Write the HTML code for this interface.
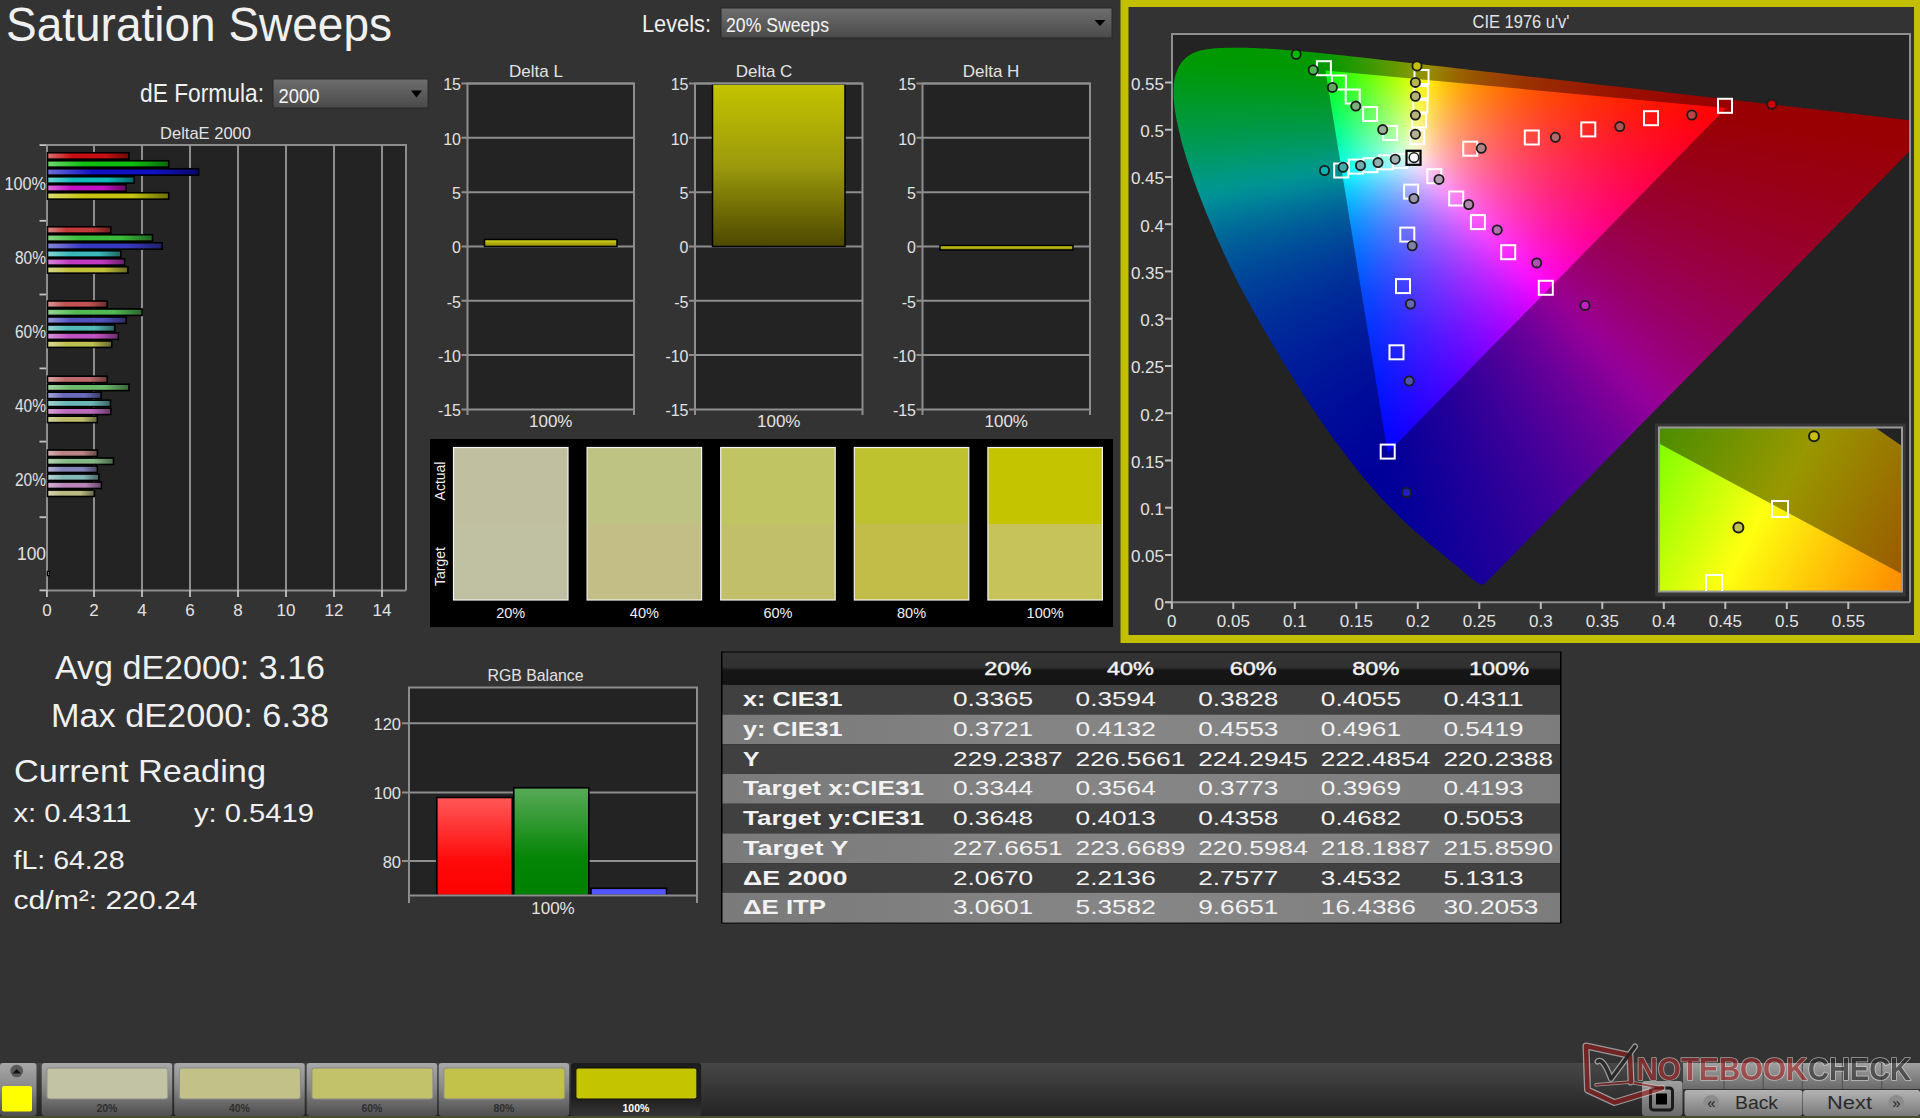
<!DOCTYPE html><html><head><meta charset="utf-8"><title>Saturation Sweeps</title><style>
html,body{margin:0;padding:0;background:#333333;width:1920px;height:1118px;overflow:hidden}
svg{position:absolute;left:0;top:0;font-family:"Liberation Sans", sans-serif}
</style></head><body>
<svg width="1920" height="1118" viewBox="0 0 1920 1118">
<defs>
<linearGradient id="dd" x1="0" y1="0" x2="0" y2="1"><stop offset="0" stop-color="#6e6e6e"/><stop offset="1" stop-color="#4a4a4a"/></linearGradient>
</defs>
<text x="6" y="40.6" font-size="49" fill="#f0f0f0" text-anchor="start" font-weight="normal" textLength="386" lengthAdjust="spacingAndGlyphs">Saturation Sweeps</text>
<text x="642" y="31.5" font-size="24" fill="#f0f0f0" text-anchor="start" font-weight="normal" textLength="69" lengthAdjust="spacingAndGlyphs">Levels:</text>
<rect x="721" y="8" width="391" height="30" fill="url(#dd)" stroke="#282828" stroke-width="1"/>
<text x="726" y="32.3" font-size="20" fill="#f4f4f4" text-anchor="start" font-weight="normal" textLength="103" lengthAdjust="spacingAndGlyphs">20% Sweeps</text>
<path d="M1094.5 20h11l-5.5 6z" fill="#000"/>
<text x="140" y="102.3" font-size="25" fill="#f0f0f0" text-anchor="start" font-weight="normal" textLength="124" lengthAdjust="spacingAndGlyphs">dE Formula:</text>
<rect x="273" y="79" width="155" height="29" fill="url(#dd)" stroke="#282828" stroke-width="1"/>
<text x="278.5" y="102.8" font-size="20" fill="#f4f4f4" text-anchor="start" font-weight="normal" textLength="41" lengthAdjust="spacingAndGlyphs">2000</text>
<path d="M411 90.5h11l-5.5 7z" fill="#000"/>
<text x="205.5" y="139.2" font-size="17" fill="#e2e2e2" text-anchor="middle" font-weight="normal" textLength="91" lengthAdjust="spacingAndGlyphs">DeltaE 2000</text>
<rect x="47" y="145" width="359" height="445" fill="#232323"/>
<line x1="94" y1="145" x2="94" y2="590" stroke="#8e8e8e" stroke-width="2"/>
<line x1="142" y1="145" x2="142" y2="590" stroke="#8e8e8e" stroke-width="2"/>
<line x1="190" y1="145" x2="190" y2="590" stroke="#8e8e8e" stroke-width="2"/>
<line x1="238" y1="145" x2="238" y2="590" stroke="#8e8e8e" stroke-width="2"/>
<line x1="286" y1="145" x2="286" y2="590" stroke="#8e8e8e" stroke-width="2"/>
<line x1="334" y1="145" x2="334" y2="590" stroke="#8e8e8e" stroke-width="2"/>
<line x1="382" y1="145" x2="382" y2="590" stroke="#8e8e8e" stroke-width="2"/>
<line x1="39.5" y1="145.1" x2="47" y2="145.1" stroke="#c4c4c4" stroke-width="1.8"/>
<line x1="39.5" y1="220.8" x2="47" y2="220.8" stroke="#c4c4c4" stroke-width="1.8"/>
<line x1="39.5" y1="294.5" x2="47" y2="294.5" stroke="#c4c4c4" stroke-width="1.8"/>
<line x1="39.5" y1="368.4" x2="47" y2="368.4" stroke="#c4c4c4" stroke-width="1.8"/>
<line x1="39.5" y1="441.6" x2="47" y2="441.6" stroke="#c4c4c4" stroke-width="1.8"/>
<line x1="39.5" y1="517.2" x2="47" y2="517.2" stroke="#c4c4c4" stroke-width="1.8"/>
<line x1="39.5" y1="590.4" x2="47" y2="590.4" stroke="#c4c4c4" stroke-width="1.8"/>
<path d="M47 590.4V145.1H406V590.4" fill="none" stroke="#8e8e8e" stroke-width="2"/>
<line x1="46" y1="590.4" x2="406" y2="590.4" stroke="#8e8e8e" stroke-width="2"/>
<line x1="46.9" y1="590" x2="46.9" y2="597" stroke="#c4c4c4" stroke-width="1.8"/>
<text x="46.9" y="616" font-size="17" fill="#e2e2e2" text-anchor="middle" font-weight="normal">0</text>
<line x1="94" y1="590" x2="94" y2="597" stroke="#c4c4c4" stroke-width="1.8"/>
<text x="94" y="616" font-size="17" fill="#e2e2e2" text-anchor="middle" font-weight="normal">2</text>
<line x1="142" y1="590" x2="142" y2="597" stroke="#c4c4c4" stroke-width="1.8"/>
<text x="142" y="616" font-size="17" fill="#e2e2e2" text-anchor="middle" font-weight="normal">4</text>
<line x1="190" y1="590" x2="190" y2="597" stroke="#c4c4c4" stroke-width="1.8"/>
<text x="190" y="616" font-size="17" fill="#e2e2e2" text-anchor="middle" font-weight="normal">6</text>
<line x1="238" y1="590" x2="238" y2="597" stroke="#c4c4c4" stroke-width="1.8"/>
<text x="238" y="616" font-size="17" fill="#e2e2e2" text-anchor="middle" font-weight="normal">8</text>
<line x1="286" y1="590" x2="286" y2="597" stroke="#c4c4c4" stroke-width="1.8"/>
<text x="286" y="616" font-size="17" fill="#e2e2e2" text-anchor="middle" font-weight="normal">10</text>
<line x1="334" y1="590" x2="334" y2="597" stroke="#c4c4c4" stroke-width="1.8"/>
<text x="334" y="616" font-size="17" fill="#e2e2e2" text-anchor="middle" font-weight="normal">12</text>
<line x1="382" y1="590" x2="382" y2="597" stroke="#c4c4c4" stroke-width="1.8"/>
<text x="382" y="616" font-size="17" fill="#e2e2e2" text-anchor="middle" font-weight="normal">14</text>
<text x="46" y="189.5" font-size="18" fill="#e2e2e2" text-anchor="end" font-weight="normal" textLength="41.5" lengthAdjust="spacingAndGlyphs">100%</text>
<text x="46" y="263.6" font-size="18" fill="#e2e2e2" text-anchor="end" font-weight="normal" textLength="31" lengthAdjust="spacingAndGlyphs">80%</text>
<text x="46" y="337.7" font-size="18" fill="#e2e2e2" text-anchor="end" font-weight="normal" textLength="31" lengthAdjust="spacingAndGlyphs">60%</text>
<text x="46" y="411.79999999999995" font-size="18" fill="#e2e2e2" text-anchor="end" font-weight="normal" textLength="31" lengthAdjust="spacingAndGlyphs">40%</text>
<text x="46" y="485.9" font-size="18" fill="#e2e2e2" text-anchor="end" font-weight="normal" textLength="31" lengthAdjust="spacingAndGlyphs">20%</text>
<text x="46" y="560.0" font-size="18" fill="#e2e2e2" text-anchor="end" font-weight="normal" textLength="29" lengthAdjust="spacingAndGlyphs">100</text>
<rect x="47.5" y="152.75" width="81.4" height="6.4" fill="url(#b0)" stroke="#000" stroke-width="1.6"/>
<rect x="47.5" y="160.75" width="121.2" height="6.4" fill="url(#b1)" stroke="#000" stroke-width="1.6"/>
<rect x="47.5" y="168.75" width="151.2" height="6.4" fill="url(#b2)" stroke="#000" stroke-width="1.6"/>
<rect x="47.5" y="176.75" width="86.6" height="6.4" fill="url(#b3)" stroke="#000" stroke-width="1.6"/>
<rect x="47.5" y="184.75" width="78.7" height="6.4" fill="url(#b4)" stroke="#000" stroke-width="1.6"/>
<rect x="47.5" y="192.75" width="121.2" height="6.4" fill="url(#b5)" stroke="#000" stroke-width="1.6"/>
<rect x="47.5" y="226.75" width="63.2" height="6.4" fill="url(#b6)" stroke="#000" stroke-width="1.6"/>
<rect x="47.5" y="234.75" width="105.0" height="6.4" fill="url(#b7)" stroke="#000" stroke-width="1.6"/>
<rect x="47.5" y="242.75" width="114.7" height="6.4" fill="url(#b8)" stroke="#000" stroke-width="1.6"/>
<rect x="47.5" y="250.75" width="73.3" height="6.4" fill="url(#b9)" stroke="#000" stroke-width="1.6"/>
<rect x="47.5" y="258.75" width="77.1" height="6.4" fill="url(#b10)" stroke="#000" stroke-width="1.6"/>
<rect x="47.5" y="266.75" width="80.4" height="6.4" fill="url(#b11)" stroke="#000" stroke-width="1.6"/>
<rect x="47.5" y="301.00" width="59.7" height="6.4" fill="url(#b12)" stroke="#000" stroke-width="1.6"/>
<rect x="47.5" y="309.00" width="94.6" height="6.4" fill="url(#b13)" stroke="#000" stroke-width="1.6"/>
<rect x="47.5" y="317.00" width="78.7" height="6.4" fill="url(#b14)" stroke="#000" stroke-width="1.6"/>
<rect x="47.5" y="325.00" width="67.2" height="6.4" fill="url(#b15)" stroke="#000" stroke-width="1.6"/>
<rect x="47.5" y="333.00" width="70.9" height="6.4" fill="url(#b16)" stroke="#000" stroke-width="1.6"/>
<rect x="47.5" y="341.00" width="64.2" height="6.4" fill="url(#b17)" stroke="#000" stroke-width="1.6"/>
<rect x="47.5" y="376.20" width="59.7" height="6.4" fill="url(#b18)" stroke="#000" stroke-width="1.6"/>
<rect x="47.5" y="384.20" width="81.5" height="6.4" fill="url(#b19)" stroke="#000" stroke-width="1.6"/>
<rect x="47.5" y="392.20" width="53.6" height="6.4" fill="url(#b20)" stroke="#000" stroke-width="1.6"/>
<rect x="47.5" y="400.20" width="63.0" height="6.4" fill="url(#b21)" stroke="#000" stroke-width="1.6"/>
<rect x="47.5" y="408.20" width="63.3" height="6.4" fill="url(#b22)" stroke="#000" stroke-width="1.6"/>
<rect x="47.5" y="416.20" width="49.9" height="6.4" fill="url(#b23)" stroke="#000" stroke-width="1.6"/>
<rect x="47.5" y="450.05" width="49.9" height="6.4" fill="url(#b24)" stroke="#000" stroke-width="1.6"/>
<rect x="47.5" y="458.05" width="66.0" height="6.4" fill="url(#b25)" stroke="#000" stroke-width="1.6"/>
<rect x="47.5" y="466.05" width="49.9" height="6.4" fill="url(#b26)" stroke="#000" stroke-width="1.6"/>
<rect x="47.5" y="474.05" width="51.4" height="6.4" fill="url(#b27)" stroke="#000" stroke-width="1.6"/>
<rect x="47.5" y="482.05" width="53.9" height="6.4" fill="url(#b28)" stroke="#000" stroke-width="1.6"/>
<rect x="47.5" y="490.05" width="46.9" height="6.4" fill="url(#b29)" stroke="#000" stroke-width="1.6"/>
<defs><linearGradient id="b0" x1="0" x2="1" y1="0" y2="0"><stop offset="0" stop-color="#de6f6f"/><stop offset="0.3" stop-color="#c81010"/><stop offset="0.7" stop-color="#c81010"/><stop offset="1" stop-color="#6e0808"/></linearGradient><linearGradient id="b1" x1="0" x2="1" y1="0" y2="0"><stop offset="0" stop-color="#6fd86f"/><stop offset="0.3" stop-color="#10be10"/><stop offset="0.7" stop-color="#10be10"/><stop offset="1" stop-color="#086808"/></linearGradient><linearGradient id="b2" x1="0" x2="1" y1="0" y2="0"><stop offset="0" stop-color="#6f6fdb"/><stop offset="0.3" stop-color="#1010c4"/><stop offset="0.7" stop-color="#1010c4"/><stop offset="1" stop-color="#08086b"/></linearGradient><linearGradient id="b3" x1="0" x2="1" y1="0" y2="0"><stop offset="0" stop-color="#6fd5d5"/><stop offset="0.3" stop-color="#10baba"/><stop offset="0.7" stop-color="#10baba"/><stop offset="1" stop-color="#086666"/></linearGradient><linearGradient id="b4" x1="0" x2="1" y1="0" y2="0"><stop offset="0" stop-color="#db6fdb"/><stop offset="0.3" stop-color="#c410c4"/><stop offset="0.7" stop-color="#c410c4"/><stop offset="1" stop-color="#6b086b"/></linearGradient><linearGradient id="b5" x1="0" x2="1" y1="0" y2="0"><stop offset="0" stop-color="#dbdb6f"/><stop offset="0.3" stop-color="#c4c410"/><stop offset="0.7" stop-color="#c4c410"/><stop offset="1" stop-color="#6b6b08"/></linearGradient><linearGradient id="b6" x1="0" x2="1" y1="0" y2="0"><stop offset="0" stop-color="#db8888"/><stop offset="0.3" stop-color="#c33939"/><stop offset="0.7" stop-color="#c33939"/><stop offset="1" stop-color="#6b1f1f"/></linearGradient><linearGradient id="b7" x1="0" x2="1" y1="0" y2="0"><stop offset="0" stop-color="#88d688"/><stop offset="0.3" stop-color="#39bc39"/><stop offset="0.7" stop-color="#39bc39"/><stop offset="1" stop-color="#1f671f"/></linearGradient><linearGradient id="b8" x1="0" x2="1" y1="0" y2="0"><stop offset="0" stop-color="#8888d9"/><stop offset="0.3" stop-color="#3939c0"/><stop offset="0.7" stop-color="#3939c0"/><stop offset="1" stop-color="#1f1f69"/></linearGradient><linearGradient id="b9" x1="0" x2="1" y1="0" y2="0"><stop offset="0" stop-color="#88d5d5"/><stop offset="0.3" stop-color="#39b9b9"/><stop offset="0.7" stop-color="#39b9b9"/><stop offset="1" stop-color="#1f6565"/></linearGradient><linearGradient id="b10" x1="0" x2="1" y1="0" y2="0"><stop offset="0" stop-color="#d988d9"/><stop offset="0.3" stop-color="#c039c0"/><stop offset="0.7" stop-color="#c039c0"/><stop offset="1" stop-color="#691f69"/></linearGradient><linearGradient id="b11" x1="0" x2="1" y1="0" y2="0"><stop offset="0" stop-color="#d9d988"/><stop offset="0.3" stop-color="#c0c039"/><stop offset="0.7" stop-color="#c0c039"/><stop offset="1" stop-color="#69691f"/></linearGradient><linearGradient id="b12" x1="0" x2="1" y1="0" y2="0"><stop offset="0" stop-color="#d99797"/><stop offset="0.3" stop-color="#c05252"/><stop offset="0.7" stop-color="#c05252"/><stop offset="1" stop-color="#692d2d"/></linearGradient><linearGradient id="b13" x1="0" x2="1" y1="0" y2="0"><stop offset="0" stop-color="#97d597"/><stop offset="0.3" stop-color="#52ba52"/><stop offset="0.7" stop-color="#52ba52"/><stop offset="1" stop-color="#2d662d"/></linearGradient><linearGradient id="b14" x1="0" x2="1" y1="0" y2="0"><stop offset="0" stop-color="#9797d8"/><stop offset="0.3" stop-color="#5252be"/><stop offset="0.7" stop-color="#5252be"/><stop offset="1" stop-color="#2d2d68"/></linearGradient><linearGradient id="b15" x1="0" x2="1" y1="0" y2="0"><stop offset="0" stop-color="#97d4d4"/><stop offset="0.3" stop-color="#52b8b8"/><stop offset="0.7" stop-color="#52b8b8"/><stop offset="1" stop-color="#2d6565"/></linearGradient><linearGradient id="b16" x1="0" x2="1" y1="0" y2="0"><stop offset="0" stop-color="#d897d8"/><stop offset="0.3" stop-color="#be52be"/><stop offset="0.7" stop-color="#be52be"/><stop offset="1" stop-color="#682d68"/></linearGradient><linearGradient id="b17" x1="0" x2="1" y1="0" y2="0"><stop offset="0" stop-color="#d8d897"/><stop offset="0.3" stop-color="#bebe52"/><stop offset="0.7" stop-color="#bebe52"/><stop offset="1" stop-color="#68682d"/></linearGradient><linearGradient id="b18" x1="0" x2="1" y1="0" y2="0"><stop offset="0" stop-color="#d8a6a6"/><stop offset="0.3" stop-color="#be6b6b"/><stop offset="0.7" stop-color="#be6b6b"/><stop offset="1" stop-color="#683a3a"/></linearGradient><linearGradient id="b19" x1="0" x2="1" y1="0" y2="0"><stop offset="0" stop-color="#a6d5a6"/><stop offset="0.3" stop-color="#6bb96b"/><stop offset="0.7" stop-color="#6bb96b"/><stop offset="1" stop-color="#3a653a"/></linearGradient><linearGradient id="b20" x1="0" x2="1" y1="0" y2="0"><stop offset="0" stop-color="#a6a6d6"/><stop offset="0.3" stop-color="#6b6bbc"/><stop offset="0.7" stop-color="#6b6bbc"/><stop offset="1" stop-color="#3a3a67"/></linearGradient><linearGradient id="b21" x1="0" x2="1" y1="0" y2="0"><stop offset="0" stop-color="#a6d3d3"/><stop offset="0.3" stop-color="#6bb7b7"/><stop offset="0.7" stop-color="#6bb7b7"/><stop offset="1" stop-color="#3a6464"/></linearGradient><linearGradient id="b22" x1="0" x2="1" y1="0" y2="0"><stop offset="0" stop-color="#d6a6d6"/><stop offset="0.3" stop-color="#bc6bbc"/><stop offset="0.7" stop-color="#bc6bbc"/><stop offset="1" stop-color="#673a67"/></linearGradient><linearGradient id="b23" x1="0" x2="1" y1="0" y2="0"><stop offset="0" stop-color="#d6d6a6"/><stop offset="0.3" stop-color="#bcbc6b"/><stop offset="0.7" stop-color="#bcbc6b"/><stop offset="1" stop-color="#67673a"/></linearGradient><linearGradient id="b24" x1="0" x2="1" y1="0" y2="0"><stop offset="0" stop-color="#d6b5b5"/><stop offset="0.3" stop-color="#bb8484"/><stop offset="0.7" stop-color="#bb8484"/><stop offset="1" stop-color="#664848"/></linearGradient><linearGradient id="b25" x1="0" x2="1" y1="0" y2="0"><stop offset="0" stop-color="#b5d4b5"/><stop offset="0.3" stop-color="#84b884"/><stop offset="0.7" stop-color="#84b884"/><stop offset="1" stop-color="#486548"/></linearGradient><linearGradient id="b26" x1="0" x2="1" y1="0" y2="0"><stop offset="0" stop-color="#b5b5d5"/><stop offset="0.3" stop-color="#8484ba"/><stop offset="0.7" stop-color="#8484ba"/><stop offset="1" stop-color="#484866"/></linearGradient><linearGradient id="b27" x1="0" x2="1" y1="0" y2="0"><stop offset="0" stop-color="#b5d3d3"/><stop offset="0.3" stop-color="#84b7b7"/><stop offset="0.7" stop-color="#84b7b7"/><stop offset="1" stop-color="#486464"/></linearGradient><linearGradient id="b28" x1="0" x2="1" y1="0" y2="0"><stop offset="0" stop-color="#d5b5d5"/><stop offset="0.3" stop-color="#ba84ba"/><stop offset="0.7" stop-color="#ba84ba"/><stop offset="1" stop-color="#664866"/></linearGradient><linearGradient id="b29" x1="0" x2="1" y1="0" y2="0"><stop offset="0" stop-color="#d5d5b5"/><stop offset="0.3" stop-color="#baba84"/><stop offset="0.7" stop-color="#baba84"/><stop offset="1" stop-color="#666648"/></linearGradient></defs>
<rect x="47.5" y="571.5" width="1.8" height="4" fill="#ddd" stroke="#000" stroke-width="1.5"/>
<defs><linearGradient id="yc" x1="0" y1="0" x2="0" y2="1"><stop offset="0" stop-color="#c4c400"/><stop offset="0.5" stop-color="#9c9a0c"/><stop offset="1" stop-color="#4c4800"/></linearGradient><linearGradient id="yb" x1="0" y1="0" x2="0" y2="1"><stop offset="0" stop-color="#d8d820"/><stop offset="1" stop-color="#8a8800"/></linearGradient></defs>
<text x="536" y="77" font-size="17" fill="#e2e2e2" text-anchor="middle" font-weight="normal">Delta L</text>
<rect x="467.5" y="83" width="166.5" height="326" fill="#232323"/>
<line x1="461.5" y1="83.5" x2="634" y2="83.5" stroke="#8e8e8e" stroke-width="2"/>
<text x="461.0" y="90.3" font-size="16" fill="#e2e2e2" text-anchor="end" font-weight="normal">15</text>
<line x1="461.5" y1="137.8" x2="634" y2="137.8" stroke="#8e8e8e" stroke-width="2"/>
<text x="461.0" y="144.63" font-size="16" fill="#e2e2e2" text-anchor="end" font-weight="normal">10</text>
<line x1="461.5" y1="192.2" x2="634" y2="192.2" stroke="#8e8e8e" stroke-width="2"/>
<text x="461.0" y="198.96" font-size="16" fill="#e2e2e2" text-anchor="end" font-weight="normal">5</text>
<line x1="461.5" y1="246.5" x2="634" y2="246.5" stroke="#8e8e8e" stroke-width="2"/>
<text x="461.0" y="253.29000000000002" font-size="16" fill="#e2e2e2" text-anchor="end" font-weight="normal">0</text>
<line x1="461.5" y1="300.8" x2="634" y2="300.8" stroke="#8e8e8e" stroke-width="2"/>
<text x="461.0" y="307.62" font-size="16" fill="#e2e2e2" text-anchor="end" font-weight="normal">-5</text>
<line x1="461.5" y1="355.1" x2="634" y2="355.1" stroke="#8e8e8e" stroke-width="2"/>
<text x="461.0" y="361.95" font-size="16" fill="#e2e2e2" text-anchor="end" font-weight="normal">-10</text>
<line x1="461.5" y1="409.5" x2="634" y2="409.5" stroke="#8e8e8e" stroke-width="2"/>
<text x="461.0" y="416.28000000000003" font-size="16" fill="#e2e2e2" text-anchor="end" font-weight="normal">-15</text>
<rect x="484.5" y="239.5" width="132.5" height="7" fill="url(#yb)" stroke="#000" stroke-width="1.5"/>
<path d="M467.5 415V83.5H634 V415" fill="none" stroke="#8e8e8e" stroke-width="2"/>
<text x="550.75" y="427" font-size="17" fill="#e2e2e2" text-anchor="middle" font-weight="normal">100%</text>
<text x="764" y="77" font-size="17" fill="#e2e2e2" text-anchor="middle" font-weight="normal">Delta C</text>
<rect x="695" y="83" width="167.5" height="326" fill="#232323"/>
<line x1="689" y1="83.5" x2="862.5" y2="83.5" stroke="#8e8e8e" stroke-width="2"/>
<text x="688.5" y="90.3" font-size="16" fill="#e2e2e2" text-anchor="end" font-weight="normal">15</text>
<line x1="689" y1="137.8" x2="862.5" y2="137.8" stroke="#8e8e8e" stroke-width="2"/>
<text x="688.5" y="144.63" font-size="16" fill="#e2e2e2" text-anchor="end" font-weight="normal">10</text>
<line x1="689" y1="192.2" x2="862.5" y2="192.2" stroke="#8e8e8e" stroke-width="2"/>
<text x="688.5" y="198.96" font-size="16" fill="#e2e2e2" text-anchor="end" font-weight="normal">5</text>
<line x1="689" y1="246.5" x2="862.5" y2="246.5" stroke="#8e8e8e" stroke-width="2"/>
<text x="688.5" y="253.29000000000002" font-size="16" fill="#e2e2e2" text-anchor="end" font-weight="normal">0</text>
<line x1="689" y1="300.8" x2="862.5" y2="300.8" stroke="#8e8e8e" stroke-width="2"/>
<text x="688.5" y="307.62" font-size="16" fill="#e2e2e2" text-anchor="end" font-weight="normal">-5</text>
<line x1="689" y1="355.1" x2="862.5" y2="355.1" stroke="#8e8e8e" stroke-width="2"/>
<text x="688.5" y="361.95" font-size="16" fill="#e2e2e2" text-anchor="end" font-weight="normal">-10</text>
<line x1="689" y1="409.5" x2="862.5" y2="409.5" stroke="#8e8e8e" stroke-width="2"/>
<text x="688.5" y="416.28000000000003" font-size="16" fill="#e2e2e2" text-anchor="end" font-weight="normal">-15</text>
<rect x="712.5" y="84" width="132.5" height="162.5" fill="url(#yc)" stroke="#000" stroke-width="1.5"/>
<path d="M695 415V83.5H862.5 V415" fill="none" stroke="#8e8e8e" stroke-width="2"/>
<text x="778.75" y="427" font-size="17" fill="#e2e2e2" text-anchor="middle" font-weight="normal">100%</text>
<text x="991" y="77" font-size="17" fill="#e2e2e2" text-anchor="middle" font-weight="normal">Delta H</text>
<rect x="922.5" y="83" width="167.5" height="326" fill="#232323"/>
<line x1="916.5" y1="83.5" x2="1090" y2="83.5" stroke="#8e8e8e" stroke-width="2"/>
<text x="916.0" y="90.3" font-size="16" fill="#e2e2e2" text-anchor="end" font-weight="normal">15</text>
<line x1="916.5" y1="137.8" x2="1090" y2="137.8" stroke="#8e8e8e" stroke-width="2"/>
<text x="916.0" y="144.63" font-size="16" fill="#e2e2e2" text-anchor="end" font-weight="normal">10</text>
<line x1="916.5" y1="192.2" x2="1090" y2="192.2" stroke="#8e8e8e" stroke-width="2"/>
<text x="916.0" y="198.96" font-size="16" fill="#e2e2e2" text-anchor="end" font-weight="normal">5</text>
<line x1="916.5" y1="246.5" x2="1090" y2="246.5" stroke="#8e8e8e" stroke-width="2"/>
<text x="916.0" y="253.29000000000002" font-size="16" fill="#e2e2e2" text-anchor="end" font-weight="normal">0</text>
<line x1="916.5" y1="300.8" x2="1090" y2="300.8" stroke="#8e8e8e" stroke-width="2"/>
<text x="916.0" y="307.62" font-size="16" fill="#e2e2e2" text-anchor="end" font-weight="normal">-5</text>
<line x1="916.5" y1="355.1" x2="1090" y2="355.1" stroke="#8e8e8e" stroke-width="2"/>
<text x="916.0" y="361.95" font-size="16" fill="#e2e2e2" text-anchor="end" font-weight="normal">-10</text>
<line x1="916.5" y1="409.5" x2="1090" y2="409.5" stroke="#8e8e8e" stroke-width="2"/>
<text x="916.0" y="416.28000000000003" font-size="16" fill="#e2e2e2" text-anchor="end" font-weight="normal">-15</text>
<rect x="940" y="245.5" width="133" height="4.5" fill="url(#yb)" stroke="#000" stroke-width="1.5"/>
<path d="M922.5 415V83.5H1090 V415" fill="none" stroke="#8e8e8e" stroke-width="2"/>
<text x="1006.25" y="427" font-size="17" fill="#e2e2e2" text-anchor="middle" font-weight="normal">100%</text>
<rect x="430" y="439" width="683" height="188" fill="#000"/>
<rect x="453.5" y="447.5" width="114.5" height="76.5" fill="#c0c0a0"/>
<rect x="453.5" y="524" width="114.5" height="76" fill="#c0c0a2"/>
<rect x="453.5" y="447.5" width="114.5" height="152.5" fill="none" stroke="#f2f2f2" stroke-width="1.2"/>
<text x="510.75" y="618" font-size="14.5" fill="#f0f0f0" text-anchor="middle" font-weight="normal">20%</text>
<rect x="587.1" y="447.5" width="114.5" height="76.5" fill="#bec283"/>
<rect x="587.1" y="524" width="114.5" height="76" fill="#c2be85"/>
<rect x="587.1" y="447.5" width="114.5" height="152.5" fill="none" stroke="#f2f2f2" stroke-width="1.2"/>
<text x="644.35" y="618" font-size="14.5" fill="#f0f0f0" text-anchor="middle" font-weight="normal">40%</text>
<rect x="720.7" y="447.5" width="114.5" height="76.5" fill="#c0c462"/>
<rect x="720.7" y="524" width="114.5" height="76" fill="#c2bf6a"/>
<rect x="720.7" y="447.5" width="114.5" height="152.5" fill="none" stroke="#f2f2f2" stroke-width="1.2"/>
<text x="777.95" y="618" font-size="14.5" fill="#f0f0f0" text-anchor="middle" font-weight="normal">60%</text>
<rect x="854.3" y="447.5" width="114.5" height="76.5" fill="#bec22e"/>
<rect x="854.3" y="524" width="114.5" height="76" fill="#c2bd48"/>
<rect x="854.3" y="447.5" width="114.5" height="152.5" fill="none" stroke="#f2f2f2" stroke-width="1.2"/>
<text x="911.55" y="618" font-size="14.5" fill="#f0f0f0" text-anchor="middle" font-weight="normal">80%</text>
<rect x="987.9" y="447.5" width="114.5" height="76.5" fill="#c4c500"/>
<rect x="987.9" y="524" width="114.5" height="76" fill="#c6c35a"/>
<rect x="987.9" y="447.5" width="114.5" height="152.5" fill="none" stroke="#f2f2f2" stroke-width="1.2"/>
<text x="1045.15" y="618" font-size="14.5" fill="#f0f0f0" text-anchor="middle" font-weight="normal">100%</text>
<text transform="translate(444.5,481) rotate(-90)" font-size="14" fill="#f0f0f0" text-anchor="middle">Actual</text>
<text transform="translate(444.5,566.5) rotate(-90)" font-size="14" fill="#f0f0f0" text-anchor="middle">Target</text>
<rect x="1120.5" y="0" width="799.5" height="643" fill="#c2bf00"/>
<rect x="1128.5" y="7" width="785.5" height="628" fill="#333333"/>
<text x="1521" y="27.8" font-size="17.8" fill="#e2e2e2" text-anchor="middle" font-weight="normal" textLength="97" lengthAdjust="spacingAndGlyphs">CIE 1976 u'v'</text>
<rect x="1172" y="34" width="738" height="568" fill="#232323"/>
<defs><clipPath id="cl"><path d="M1484.5,583.9 1484.4,583.9 1484.4,583.9 1484.4,583.9 1484.3,583.9 1484.3,583.9 1484.2,584.0 1484.2,584.0 1484.1,584.1 1484.1,584.2 1484.0,584.2 1483.9,584.2 1483.8,584.2 1483.8,584.2 1483.7,584.2 1483.6,584.2 1483.5,584.3 1483.4,584.3 1483.3,584.4 1483.2,584.5 1483.1,584.5 1483.0,584.6 1482.9,584.6 1482.8,584.6 1482.6,584.5 1482.5,584.5 1482.3,584.5 1482.2,584.5 1482.0,584.5 1481.9,584.5 1481.7,584.5 1481.5,584.6 1481.3,584.6 1481.1,584.6 1480.9,584.6 1480.7,584.6 1480.3,584.4 1480.0,584.3 1479.6,584.0 1479.2,583.8 1478.8,583.6 1478.5,583.5 1478.3,583.4 1478.0,583.3 1477.7,583.1 1477.2,582.8 1476.6,582.4 1475.8,581.8 1474.9,581.1 1474.0,580.3 1472.9,579.5 1471.8,578.7 1470.7,577.7 1469.4,576.7 1468.1,575.6 1466.7,574.5 1465.3,573.3 1463.7,571.9 1462.1,570.6 1460.5,569.2 1458.9,567.8 1457.3,566.5 1455.8,565.3 1454.2,564.0 1452.5,562.5 1450.6,560.9 1448.3,559.1 1445.8,557.1 1443.2,554.9 1440.4,552.6 1437.6,550.3 1434.7,547.9 1431.7,545.4 1428.5,542.9 1425.3,540.1 1421.9,537.2 1418.4,534.1 1414.7,530.9 1410.8,527.5 1406.8,523.8 1402.7,519.9 1398.4,515.8 1394.1,511.6 1389.6,507.1 1384.8,502.1 1379.6,496.4 1374.1,490.1 1368.2,483.3 1362.0,475.9 1355.6,468.0 1349.0,459.5 1342.2,450.5 1335.1,440.9 1327.8,430.8 1320.4,420.2 1312.9,409.1 1305.2,397.4 1297.3,385.1 1289.4,372.3 1281.5,359.4 1273.7,346.3 1265.9,333.0 1258.1,319.3 1250.4,305.6 1242.9,291.9 1235.9,278.4 1229.3,265.0 1223.1,251.6 1217.2,238.4 1211.6,225.5 1206.4,213.2 1201.7,201.3 1197.3,189.8 1193.3,178.7 1189.7,168.1 1186.4,158.2 1183.6,148.9 1181.2,140.2 1179.2,132.1 1177.5,124.5 1176.1,117.4 1175.0,110.7 1174.2,104.7 1173.7,99.1 1173.5,93.8 1173.6,88.9 1173.9,84.3 1174.4,80.1 1175.2,76.2 1176.3,72.7 1177.5,69.4 1179.0,66.3 1180.7,63.6 1182.6,61.1 1184.7,58.9 1186.9,57.0 1189.3,55.2 1191.8,53.8 1194.5,52.6 1197.3,51.5 1200.2,50.6 1203.2,49.9 1206.3,49.3 1209.5,48.9 1212.8,48.6 1216.1,48.3 1219.5,48.1 1222.9,47.9 1226.4,47.8 1229.9,47.8 1233.4,47.7 1236.9,47.7 1240.3,47.7 1243.8,47.8 1247.4,47.8 1250.9,47.9 1254.5,48.1 1258.1,48.2 1261.8,48.4 1265.5,48.6 1269.2,48.8 1273.1,49.0 1277.0,49.3 1280.9,49.6 1284.9,49.9 1289.0,50.2 1293.1,50.6 1297.3,50.9 1301.6,51.3 1306.0,51.7 1310.4,52.1 1315.0,52.6 1319.6,53.0 1324.3,53.5 1329.1,54.0 1334.0,54.5 1339.0,55.0 1344.1,55.6 1349.3,56.2 1354.7,56.7 1360.1,57.3 1365.7,57.9 1371.3,58.6 1377.1,59.2 1383.0,59.9 1389.0,60.5 1395.2,61.2 1401.4,61.9 1407.8,62.7 1414.3,63.4 1421.0,64.2 1427.8,64.9 1434.7,65.7 1441.7,66.5 1448.9,67.3 1456.1,68.2 1463.6,69.0 1471.1,69.9 1478.8,70.8 1486.6,71.7 1494.5,72.6 1502.5,73.5 1510.7,74.4 1519.0,75.4 1527.4,76.4 1535.8,77.3 1544.4,78.3 1553.1,79.3 1561.9,80.3 1570.7,81.3 1579.6,82.3 1588.5,83.4 1597.5,84.4 1606.6,85.5 1615.6,86.5 1624.5,87.5 1633.3,88.5 1642.1,89.5 1650.8,90.5 1659.5,91.5 1668.1,92.5 1676.7,93.5 1685.3,94.5 1693.9,95.5 1702.3,96.5 1710.5,97.4 1718.5,98.3 1726.3,99.2 1734.0,100.1 1741.5,100.9 1748.9,101.8 1756.0,102.6 1763.0,103.4 1769.8,104.2 1776.4,104.9 1782.8,105.7 1789.0,106.4 1795.0,107.1 1800.7,107.7 1806.3,108.4 1811.7,109.0 1816.9,109.6 1821.9,110.2 1826.7,110.7 1831.4,111.3 1835.9,111.8 1840.3,112.3 1844.5,112.8 1848.5,113.2 1852.5,113.7 1856.3,114.1 1860.1,114.6 1863.7,115.0 1867.2,115.4 1870.7,115.8 1874.0,116.2 1877.2,116.5 1880.3,116.9 1883.3,117.2 1886.2,117.6 1888.9,117.9 1891.6,118.2 1894.1,118.5 1896.5,118.7 1898.8,119.0 1901.0,119.2 1903.0,119.5 1904.8,119.7 1906.5,119.9 1908.4,120.1 1910.4,120.3 1912.8,120.6 1915.4,120.9 1918.0,121.2 1920.7,121.5 1923.2,121.8 1925.6,122.1 1928.1,122.4 1930.4,122.8 1932.5,123.0 1934.3,123.1 1935.6,122.9 1936.7,122.6 1937.5,122.3 1938.1,121.9 1938.6,121.7Z"/></clipPath><clipPath id="ct"><path d="M1726.2,108.1 1325.5,70.6 1387.6,453.0Z"/></clipPath><clipPath id="cp"><rect x="1172" y="34" width="738" height="568"/></clipPath><filter id="bl" color-interpolation-filters="sRGB" x="-10%" y="-10%" width="120%" height="120%"><feGaussianBlur stdDeviation="10"/></filter><filter id="bl2" color-interpolation-filters="sRGB" x="-10%" y="-10%" width="120%" height="120%"><feGaussianBlur stdDeviation="7"/></filter></defs>
<g clip-path="url(#cp)">
<g clip-path="url(#cl)"><g filter="url(#bl)"><g class="m" transform="translate(1144,6) scale(14)">
<path d="M0 0h1v1h-1z" fill="#090"/><path d="M1 0h1v1h-1z" fill="#090"/><path d="M2 0h1v1h-1z" fill="#090"/><path d="M3 0h1v1h-1z" fill="#090"/><path d="M4 0h1v1h-1z" fill="#090"/><path d="M5 0h1v1h-1z" fill="#090"/><path d="M6 0h1v1h-1z" fill="#090"/><path d="M7 0h1v1h-1z" fill="#090"/><path d="M8 0h1v1h-1z" fill="#090"/><path d="M9 0h1v1h-1z" fill="#090"/><path d="M10 0h1v1h-1z" fill="#090"/><path d="M11 0h1v1h-1z" fill="#090"/><path d="M12 0h1v1h-1z" fill="#039900"/><path d="M13 0h1v1h-1z" fill="#129900"/><path d="M14 0h1v1h-1z" fill="#239900"/><path d="M15 0h1v1h-1z" fill="#349900"/><path d="M0 1h1v1h-1z" fill="#090"/><path d="M1 1h1v1h-1z" fill="#090"/><path d="M2 1h1v1h-1z" fill="#090"/><path d="M3 1h1v1h-1z" fill="#090"/><path d="M4 1h1v1h-1z" fill="#090"/><path d="M5 1h1v1h-1z" fill="#090"/><path d="M6 1h1v1h-1z" fill="#090"/><path d="M7 1h1v1h-1z" fill="#090"/><path d="M8 1h1v1h-1z" fill="#090"/><path d="M9 1h1v1h-1z" fill="#090"/><path d="M10 1h1v1h-1z" fill="#090"/><path d="M11 1h1v1h-1z" fill="#090"/><path d="M12 1h1v1h-1z" fill="#019900"/><path d="M13 1h1v1h-1z" fill="#109900"/><path d="M14 1h1v1h-1z" fill="#219900"/><path d="M15 1h1v1h-1z" fill="#390"/><path d="M16 1h1v1h-1z" fill="#469900"/><path d="M17 1h1v1h-1z" fill="#5a9900"/><path d="M18 1h1v1h-1z" fill="#6f9900"/><path d="M19 1h1v1h-1z" fill="#869900"/><path d="M20 1h1v1h-1z" fill="#999300"/><path d="M21 1h1v1h-1z" fill="#997e00"/><path d="M22 1h1v1h-1z" fill="#996d00"/><path d="M23 1h1v1h-1z" fill="#995f00"/><path d="M24 1h1v1h-1z" fill="#995400"/><path d="M0 2h1v1h-1z" fill="#090"/><path d="M1 2h1v1h-1z" fill="#090"/><path d="M2 2h1v1h-1z" fill="#090"/><path d="M3 2h1v1h-1z" fill="#090"/><path d="M4 2h1v1h-1z" fill="#090"/><path d="M5 2h1v1h-1z" fill="#090"/><path d="M6 2h1v1h-1z" fill="#090"/><path d="M7 2h1v1h-1z" fill="#090"/><path d="M8 2h1v1h-1z" fill="#090"/><path d="M9 2h1v1h-1z" fill="#090"/><path d="M10 2h1v1h-1z" fill="#090"/><path d="M11 2h1v1h-1z" fill="#090"/><path d="M12 2h1v1h-1z" fill="#090"/><path d="M13 2h1v1h-1z" fill="#0e9900"/><path d="M14 2h1v1h-1z" fill="#1f9900"/><path d="M15 2h1v1h-1z" fill="#329900"/><path d="M16 2h1v1h-1z" fill="#459900"/><path d="M17 2h1v1h-1z" fill="#5a9900"/><path d="M18 2h1v1h-1z" fill="#709900"/><path d="M19 2h1v1h-1z" fill="#890"/><path d="M20 2h1v1h-1z" fill="#999100"/><path d="M21 2h1v1h-1z" fill="#997b00"/><path d="M22 2h1v1h-1z" fill="#996a00"/><path d="M23 2h1v1h-1z" fill="#995d00"/><path d="M24 2h1v1h-1z" fill="#995100"/><path d="M25 2h1v1h-1z" fill="#994700"/><path d="M26 2h1v1h-1z" fill="#993f00"/><path d="M27 2h1v1h-1z" fill="#993800"/><path d="M28 2h1v1h-1z" fill="#993100"/><path d="M29 2h1v1h-1z" fill="#992c00"/><path d="M30 2h1v1h-1z" fill="#992700"/><path d="M31 2h1v1h-1z" fill="#992300"/><path d="M32 2h1v1h-1z" fill="#991f00"/><path d="M0 3h1v1h-1z" fill="#009901"/><path d="M1 3h1v1h-1z" fill="#090"/><path d="M2 3h1v1h-1z" fill="#090"/><path d="M3 3h1v1h-1z" fill="#090"/><path d="M4 3h1v1h-1z" fill="#090"/><path d="M5 3h1v1h-1z" fill="#090"/><path d="M6 3h1v1h-1z" fill="#090"/><path d="M7 3h1v1h-1z" fill="#090"/><path d="M8 3h1v1h-1z" fill="#090"/><path d="M9 3h1v1h-1z" fill="#090"/><path d="M10 3h1v1h-1z" fill="#090"/><path d="M11 3h1v1h-1z" fill="#090"/><path d="M12 3h1v1h-1z" fill="#090"/><path d="M13 3h1v1h-1z" fill="#0c9900"/><path d="M14 3h1v1h-1z" fill="#1d9900"/><path d="M15 3h1v1h-1z" fill="#309900"/><path d="M16 3h1v1h-1z" fill="#490"/><path d="M17 3h1v1h-1z" fill="#5a9900"/><path d="M18 3h1v1h-1z" fill="#719900"/><path d="M19 3h1v1h-1z" fill="#8a9900"/><path d="M20 3h1v1h-1z" fill="#998e00"/><path d="M21 3h1v1h-1z" fill="#997900"/><path d="M22 3h1v1h-1z" fill="#996800"/><path d="M23 3h1v1h-1z" fill="#995a00"/><path d="M24 3h1v1h-1z" fill="#994e00"/><path d="M25 3h1v1h-1z" fill="#994500"/><path d="M26 3h1v1h-1z" fill="#993d00"/><path d="M27 3h1v1h-1z" fill="#993500"/><path d="M28 3h1v1h-1z" fill="#992f00"/><path d="M29 3h1v1h-1z" fill="#992a00"/><path d="M30 3h1v1h-1z" fill="#992500"/><path d="M31 3h1v1h-1z" fill="#992100"/><path d="M32 3h1v1h-1z" fill="#991d00"/><path d="M33 3h1v1h-1z" fill="#991900"/><path d="M34 3h1v1h-1z" fill="#991600"/><path d="M35 3h1v1h-1z" fill="#991300"/><path d="M36 3h1v1h-1z" fill="#991000"/><path d="M37 3h1v1h-1z" fill="#990e00"/><path d="M38 3h1v1h-1z" fill="#990c00"/><path d="M39 3h1v1h-1z" fill="#990a00"/><path d="M40 3h1v1h-1z" fill="#990800"/><path d="M41 3h1v1h-1z" fill="#990600"/><path d="M0 4h1v1h-1z" fill="#00990c"/><path d="M1 4h1v1h-1z" fill="#00990b"/><path d="M2 4h1v1h-1z" fill="#00990a"/><path d="M3 4h1v1h-1z" fill="#009909"/><path d="M4 4h1v1h-1z" fill="#009908"/><path d="M5 4h1v1h-1z" fill="#009907"/><path d="M6 4h1v1h-1z" fill="#009906"/><path d="M7 4h1v1h-1z" fill="#009905"/><path d="M8 4h1v1h-1z" fill="#009904"/><path d="M9 4h1v1h-1z" fill="#009903"/><path d="M10 4h1v1h-1z" fill="#009902"/><path d="M11 4h1v1h-1z" fill="#090"/><path d="M12 4h1v1h-1z" fill="#090"/><path d="M13 4h1v1h-1z" fill="#099900"/><path d="M14 4h1v1h-1z" fill="#1c9900"/><path d="M15 4h1v1h-1z" fill="#2f9900"/><path d="M16 4h1v1h-1z" fill="#490"/><path d="M17 4h1v1h-1z" fill="#5a9900"/><path d="M18 4h1v1h-1z" fill="#729900"/><path d="M19 4h1v1h-1z" fill="#8c9900"/><path d="M20 4h1v1h-1z" fill="#998b00"/><path d="M21 4h1v1h-1z" fill="#997600"/><path d="M22 4h1v1h-1z" fill="#996500"/><path d="M23 4h1v1h-1z" fill="#995700"/><path d="M24 4h1v1h-1z" fill="#994c00"/><path d="M25 4h1v1h-1z" fill="#994200"/><path d="M26 4h1v1h-1z" fill="#993a00"/><path d="M27 4h1v1h-1z" fill="#930"/><path d="M28 4h1v1h-1z" fill="#992d00"/><path d="M29 4h1v1h-1z" fill="#992800"/><path d="M30 4h1v1h-1z" fill="#992300"/><path d="M31 4h1v1h-1z" fill="#991f00"/><path d="M32 4h1v1h-1z" fill="#991b00"/><path d="M33 4h1v1h-1z" fill="#991700"/><path d="M34 4h1v1h-1z" fill="#991400"/><path d="M35 4h1v1h-1z" fill="#910"/><path d="M36 4h1v1h-1z" fill="#990f00"/><path d="M37 4h1v1h-1z" fill="#990c00"/><path d="M38 4h1v1h-1z" fill="#990a00"/><path d="M39 4h1v1h-1z" fill="#990800"/><path d="M40 4h1v1h-1z" fill="#990600"/><path d="M41 4h1v1h-1z" fill="#990400"/><path d="M42 4h1v1h-1z" fill="#990300"/><path d="M43 4h1v1h-1z" fill="#990100"/><path d="M44 4h1v1h-1z" fill="#900"/><path d="M45 4h1v1h-1z" fill="#900"/><path d="M46 4h1v1h-1z" fill="#900"/><path d="M47 4h1v1h-1z" fill="#900"/><path d="M48 4h1v1h-1z" fill="#900"/><path d="M49 4h1v1h-1z" fill="#900"/><path d="M50 4h1v1h-1z" fill="#900"/><path d="M0 5h1v1h-1z" fill="#009918"/><path d="M1 5h1v1h-1z" fill="#009917"/><path d="M2 5h1v1h-1z" fill="#009917"/><path d="M3 5h1v1h-1z" fill="#009916"/><path d="M4 5h1v1h-1z" fill="#009915"/><path d="M5 5h1v1h-1z" fill="#009915"/><path d="M6 5h1v1h-1z" fill="#009914"/><path d="M7 5h1v1h-1z" fill="#009913"/><path d="M8 5h1v1h-1z" fill="#009912"/><path d="M9 5h1v1h-1z" fill="#009912"/><path d="M10 5h1v1h-1z" fill="#091"/><path d="M11 5h1v1h-1z" fill="#009910"/><path d="M12 5h1v1h-1z" fill="#00990f"/><path d="M13 5h1v1h-1z" fill="#07990e"/><path d="M14 5h1v1h-1z" fill="#1a990d"/><path d="M15 5h1v1h-1z" fill="#2d990b"/><path d="M16 5h1v1h-1z" fill="#43990a"/><path d="M17 5h1v1h-1z" fill="#5a9909"/><path d="M18 5h1v1h-1z" fill="#739907"/><path d="M19 5h1v1h-1z" fill="#8e9906"/><path d="M20 5h1v1h-1z" fill="#998903"/><path d="M21 5h1v1h-1z" fill="#997301"/><path d="M22 5h1v1h-1z" fill="#996200"/><path d="M23 5h1v1h-1z" fill="#995400"/><path d="M24 5h1v1h-1z" fill="#994900"/><path d="M25 5h1v1h-1z" fill="#994000"/><path d="M26 5h1v1h-1z" fill="#993800"/><path d="M27 5h1v1h-1z" fill="#993100"/><path d="M28 5h1v1h-1z" fill="#992b00"/><path d="M29 5h1v1h-1z" fill="#992500"/><path d="M30 5h1v1h-1z" fill="#992100"/><path d="M31 5h1v1h-1z" fill="#991c00"/><path d="M32 5h1v1h-1z" fill="#991900"/><path d="M33 5h1v1h-1z" fill="#991500"/><path d="M34 5h1v1h-1z" fill="#991200"/><path d="M35 5h1v1h-1z" fill="#990f00"/><path d="M36 5h1v1h-1z" fill="#990d00"/><path d="M37 5h1v1h-1z" fill="#990b00"/><path d="M38 5h1v1h-1z" fill="#990800"/><path d="M39 5h1v1h-1z" fill="#990600"/><path d="M40 5h1v1h-1z" fill="#990500"/><path d="M41 5h1v1h-1z" fill="#990300"/><path d="M42 5h1v1h-1z" fill="#990100"/><path d="M43 5h1v1h-1z" fill="#900"/><path d="M44 5h1v1h-1z" fill="#900"/><path d="M45 5h1v1h-1z" fill="#900"/><path d="M46 5h1v1h-1z" fill="#900"/><path d="M47 5h1v1h-1z" fill="#900"/><path d="M48 5h1v1h-1z" fill="#900"/><path d="M49 5h1v1h-1z" fill="#900"/><path d="M50 5h1v1h-1z" fill="#900"/><path d="M51 5h1v1h-1z" fill="#900"/><path d="M52 5h1v1h-1z" fill="#900"/><path d="M53 5h1v1h-1z" fill="#900"/><path d="M54 5h1v1h-1z" fill="#900"/><path d="M55 5h1v1h-1z" fill="#900"/><path d="M56 5h1v1h-1z" fill="#900"/><path d="M57 5h1v1h-1z" fill="#900"/><path d="M0 6h1v1h-1z" fill="#009924"/><path d="M1 6h1v1h-1z" fill="#009924"/><path d="M2 6h1v1h-1z" fill="#009923"/><path d="M3 6h1v1h-1z" fill="#009923"/><path d="M4 6h1v1h-1z" fill="#009923"/><path d="M5 6h1v1h-1z" fill="#009923"/><path d="M6 6h1v1h-1z" fill="#092"/><path d="M7 6h1v1h-1z" fill="#092"/><path d="M8 6h1v1h-1z" fill="#092"/><path d="M9 6h1v1h-1z" fill="#009921"/><path d="M10 6h1v1h-1z" fill="#009921"/><path d="M11 6h1v1h-1z" fill="#009920"/><path d="M12 6h1v1h-1z" fill="#009920"/><path d="M13 6h1v1h-1z" fill="#04991f"/><path d="M14 6h1v1h-1z" fill="#17991f"/><path d="M15 6h1v1h-1z" fill="#2c991e"/><path d="M16 6h1v1h-1z" fill="#42991e"/><path d="M17 6h1v1h-1z" fill="#5a991d"/><path d="M18 6h1v1h-1z" fill="#74991c"/><path d="M19 6h1v1h-1z" fill="#90991c"/><path d="M20 6h1v1h-1z" fill="#998617"/><path d="M21 6h1v1h-1z" fill="#997013"/><path d="M22 6h1v1h-1z" fill="#995f0f"/><path d="M23 6h1v1h-1z" fill="#99510d"/><path d="M24 6h1v1h-1z" fill="#99460a"/><path d="M25 6h1v1h-1z" fill="#993d08"/><path d="M26 6h1v1h-1z" fill="#993507"/><path d="M27 6h1v1h-1z" fill="#992e05"/><path d="M28 6h1v1h-1z" fill="#992804"/><path d="M29 6h1v1h-1z" fill="#992303"/><path d="M30 6h1v1h-1z" fill="#991e02"/><path d="M31 6h1v1h-1z" fill="#991a01"/><path d="M32 6h1v1h-1z" fill="#991700"/><path d="M33 6h1v1h-1z" fill="#991300"/><path d="M34 6h1v1h-1z" fill="#991000"/><path d="M35 6h1v1h-1z" fill="#990e00"/><path d="M36 6h1v1h-1z" fill="#990b00"/><path d="M37 6h1v1h-1z" fill="#990900"/><path d="M38 6h1v1h-1z" fill="#990700"/><path d="M39 6h1v1h-1z" fill="#990500"/><path d="M40 6h1v1h-1z" fill="#990300"/><path d="M41 6h1v1h-1z" fill="#990100"/><path d="M42 6h1v1h-1z" fill="#900"/><path d="M43 6h1v1h-1z" fill="#900"/><path d="M44 6h1v1h-1z" fill="#900"/><path d="M45 6h1v1h-1z" fill="#900"/><path d="M46 6h1v1h-1z" fill="#900"/><path d="M47 6h1v1h-1z" fill="#900"/><path d="M48 6h1v1h-1z" fill="#900"/><path d="M49 6h1v1h-1z" fill="#900"/><path d="M50 6h1v1h-1z" fill="#900"/><path d="M51 6h1v1h-1z" fill="#900"/><path d="M52 6h1v1h-1z" fill="#900"/><path d="M53 6h1v1h-1z" fill="#900"/><path d="M54 6h1v1h-1z" fill="#900"/><path d="M55 6h1v1h-1z" fill="#900"/><path d="M56 6h1v1h-1z" fill="#900"/><path d="M57 6h1v1h-1z" fill="#900"/><path d="M0 7h1v1h-1z" fill="#009931"/><path d="M1 7h1v1h-1z" fill="#009931"/><path d="M2 7h1v1h-1z" fill="#009931"/><path d="M3 7h1v1h-1z" fill="#009931"/><path d="M4 7h1v1h-1z" fill="#009931"/><path d="M5 7h1v1h-1z" fill="#009931"/><path d="M6 7h1v1h-1z" fill="#009931"/><path d="M7 7h1v1h-1z" fill="#009932"/><path d="M8 7h1v1h-1z" fill="#009932"/><path d="M9 7h1v1h-1z" fill="#009932"/><path d="M10 7h1v1h-1z" fill="#009932"/><path d="M11 7h1v1h-1z" fill="#009932"/><path d="M12 7h1v1h-1z" fill="#009932"/><path d="M13 7h1v1h-1z" fill="#019932"/><path d="M14 7h1v1h-1z" fill="#159932"/><path d="M15 7h1v1h-1z" fill="#2a9933"/><path d="M16 7h1v1h-1z" fill="#419933"/><path d="M17 7h1v1h-1z" fill="#5a9933"/><path d="M18 7h1v1h-1z" fill="#759933"/><path d="M19 7h1v1h-1z" fill="#939933"/><path d="M20 7h1v1h-1z" fill="#99832c"/><path d="M21 7h1v1h-1z" fill="#996d25"/><path d="M22 7h1v1h-1z" fill="#995c1f"/><path d="M23 7h1v1h-1z" fill="#994e1b"/><path d="M24 7h1v1h-1z" fill="#994317"/><path d="M25 7h1v1h-1z" fill="#993a14"/><path d="M26 7h1v1h-1z" fill="#993212"/><path d="M27 7h1v1h-1z" fill="#992c0f"/><path d="M28 7h1v1h-1z" fill="#99260e"/><path d="M29 7h1v1h-1z" fill="#99210c"/><path d="M30 7h1v1h-1z" fill="#991c0a"/><path d="M31 7h1v1h-1z" fill="#991809"/><path d="M32 7h1v1h-1z" fill="#991508"/><path d="M33 7h1v1h-1z" fill="#991107"/><path d="M34 7h1v1h-1z" fill="#990e06"/><path d="M35 7h1v1h-1z" fill="#990c05"/><path d="M36 7h1v1h-1z" fill="#990904"/><path d="M37 7h1v1h-1z" fill="#990704"/><path d="M38 7h1v1h-1z" fill="#990503"/><path d="M39 7h1v1h-1z" fill="#990302"/><path d="M40 7h1v1h-1z" fill="#990102"/><path d="M41 7h1v1h-1z" fill="#990001"/><path d="M42 7h1v1h-1z" fill="#990001"/><path d="M43 7h1v1h-1z" fill="#900"/><path d="M44 7h1v1h-1z" fill="#900"/><path d="M45 7h1v1h-1z" fill="#900"/><path d="M46 7h1v1h-1z" fill="#900"/><path d="M47 7h1v1h-1z" fill="#900"/><path d="M48 7h1v1h-1z" fill="#900"/><path d="M49 7h1v1h-1z" fill="#900"/><path d="M50 7h1v1h-1z" fill="#900"/><path d="M51 7h1v1h-1z" fill="#900"/><path d="M52 7h1v1h-1z" fill="#900"/><path d="M53 7h1v1h-1z" fill="#900"/><path d="M54 7h1v1h-1z" fill="#900"/><path d="M55 7h1v1h-1z" fill="#900"/><path d="M56 7h1v1h-1z" fill="#900"/><path d="M57 7h1v1h-1z" fill="#900"/><path d="M0 8h1v1h-1z" fill="#00993f"/><path d="M1 8h1v1h-1z" fill="#00993f"/><path d="M2 8h1v1h-1z" fill="#00993f"/><path d="M3 8h1v1h-1z" fill="#009940"/><path d="M4 8h1v1h-1z" fill="#009940"/><path d="M5 8h1v1h-1z" fill="#009941"/><path d="M6 8h1v1h-1z" fill="#009941"/><path d="M7 8h1v1h-1z" fill="#009942"/><path d="M8 8h1v1h-1z" fill="#009943"/><path d="M9 8h1v1h-1z" fill="#009943"/><path d="M10 8h1v1h-1z" fill="#094"/><path d="M11 8h1v1h-1z" fill="#009945"/><path d="M12 8h1v1h-1z" fill="#009946"/><path d="M13 8h1v1h-1z" fill="#009946"/><path d="M14 8h1v1h-1z" fill="#129947"/><path d="M15 8h1v1h-1z" fill="#299948"/><path d="M16 8h1v1h-1z" fill="#409949"/><path d="M17 8h1v1h-1z" fill="#5a994b"/><path d="M18 8h1v1h-1z" fill="#77994c"/><path d="M19 8h1v1h-1z" fill="#96994d"/><path d="M20 8h1v1h-1z" fill="#997f42"/><path d="M21 8h1v1h-1z" fill="#996a38"/><path d="M22 8h1v1h-1z" fill="#995930"/><path d="M23 8h1v1h-1z" fill="#994b2a"/><path d="M24 8h1v1h-1z" fill="#994025"/><path d="M25 8h1v1h-1z" fill="#993720"/><path d="M26 8h1v1h-1z" fill="#99301d"/><path d="M27 8h1v1h-1z" fill="#99291a"/><path d="M28 8h1v1h-1z" fill="#992317"/><path d="M29 8h1v1h-1z" fill="#991e15"/><path d="M30 8h1v1h-1z" fill="#991a13"/><path d="M31 8h1v1h-1z" fill="#991611"/><path d="M32 8h1v1h-1z" fill="#991210"/><path d="M33 8h1v1h-1z" fill="#990f0e"/><path d="M34 8h1v1h-1z" fill="#990c0d"/><path d="M35 8h1v1h-1z" fill="#990a0c"/><path d="M36 8h1v1h-1z" fill="#99080a"/><path d="M37 8h1v1h-1z" fill="#990509"/><path d="M38 8h1v1h-1z" fill="#990309"/><path d="M39 8h1v1h-1z" fill="#990208"/><path d="M40 8h1v1h-1z" fill="#990007"/><path d="M41 8h1v1h-1z" fill="#990006"/><path d="M42 8h1v1h-1z" fill="#990006"/><path d="M43 8h1v1h-1z" fill="#990005"/><path d="M44 8h1v1h-1z" fill="#990004"/><path d="M45 8h1v1h-1z" fill="#990004"/><path d="M46 8h1v1h-1z" fill="#990003"/><path d="M47 8h1v1h-1z" fill="#990003"/><path d="M48 8h1v1h-1z" fill="#990002"/><path d="M49 8h1v1h-1z" fill="#990002"/><path d="M50 8h1v1h-1z" fill="#990001"/><path d="M51 8h1v1h-1z" fill="#990001"/><path d="M52 8h1v1h-1z" fill="#990001"/><path d="M53 8h1v1h-1z" fill="#900"/><path d="M54 8h1v1h-1z" fill="#900"/><path d="M55 8h1v1h-1z" fill="#900"/><path d="M56 8h1v1h-1z" fill="#900"/><path d="M57 8h1v1h-1z" fill="#900"/><path d="M0 9h1v1h-1z" fill="#00994d"/><path d="M1 9h1v1h-1z" fill="#00994e"/><path d="M2 9h1v1h-1z" fill="#00994e"/><path d="M3 9h1v1h-1z" fill="#00994f"/><path d="M4 9h1v1h-1z" fill="#009950"/><path d="M5 9h1v1h-1z" fill="#009951"/><path d="M6 9h1v1h-1z" fill="#009952"/><path d="M7 9h1v1h-1z" fill="#009954"/><path d="M8 9h1v1h-1z" fill="#095"/><path d="M9 9h1v1h-1z" fill="#009956"/><path d="M10 9h1v1h-1z" fill="#009957"/><path d="M11 9h1v1h-1z" fill="#009959"/><path d="M12 9h1v1h-1z" fill="#00995a"/><path d="M13 9h1v1h-1z" fill="#00995c"/><path d="M14 9h1v1h-1z" fill="#10995e"/><path d="M15 9h1v1h-1z" fill="#279960"/><path d="M16 9h1v1h-1z" fill="#3f9962"/><path d="M17 9h1v1h-1z" fill="#5a9965"/><path d="M18 9h1v1h-1z" fill="#789967"/><path d="M19 9h1v1h-1z" fill="#99996a"/><path d="M20 9h1v1h-1z" fill="#997c58"/><path d="M21 9h1v1h-1z" fill="#99664b"/><path d="M22 9h1v1h-1z" fill="#995541"/><path d="M23 9h1v1h-1z" fill="#994839"/><path d="M24 9h1v1h-1z" fill="#993d33"/><path d="M25 9h1v1h-1z" fill="#99342d"/><path d="M26 9h1v1h-1z" fill="#992d29"/><path d="M27 9h1v1h-1z" fill="#992625"/><path d="M28 9h1v1h-1z" fill="#992121"/><path d="M29 9h1v1h-1z" fill="#991c1e"/><path d="M30 9h1v1h-1z" fill="#99181c"/><path d="M31 9h1v1h-1z" fill="#991419"/><path d="M32 9h1v1h-1z" fill="#991017"/><path d="M33 9h1v1h-1z" fill="#990d15"/><path d="M34 9h1v1h-1z" fill="#990a14"/><path d="M35 9h1v1h-1z" fill="#990812"/><path d="M36 9h1v1h-1z" fill="#990611"/><path d="M37 9h1v1h-1z" fill="#990410"/><path d="M38 9h1v1h-1z" fill="#99020e"/><path d="M39 9h1v1h-1z" fill="#99000d"/><path d="M40 9h1v1h-1z" fill="#99000c"/><path d="M41 9h1v1h-1z" fill="#99000b"/><path d="M42 9h1v1h-1z" fill="#99000b"/><path d="M43 9h1v1h-1z" fill="#99000a"/><path d="M44 9h1v1h-1z" fill="#990009"/><path d="M45 9h1v1h-1z" fill="#990008"/><path d="M46 9h1v1h-1z" fill="#990008"/><path d="M47 9h1v1h-1z" fill="#990007"/><path d="M48 9h1v1h-1z" fill="#990006"/><path d="M49 9h1v1h-1z" fill="#990006"/><path d="M50 9h1v1h-1z" fill="#990005"/><path d="M51 9h1v1h-1z" fill="#990005"/><path d="M52 9h1v1h-1z" fill="#990004"/><path d="M53 9h1v1h-1z" fill="#990004"/><path d="M54 9h1v1h-1z" fill="#990004"/><path d="M55 9h1v1h-1z" fill="#990003"/><path d="M56 9h1v1h-1z" fill="#990003"/><path d="M57 9h1v1h-1z" fill="#990002"/><path d="M0 10h1v1h-1z" fill="#00995c"/><path d="M1 10h1v1h-1z" fill="#00995d"/><path d="M2 10h1v1h-1z" fill="#00995e"/><path d="M3 10h1v1h-1z" fill="#009960"/><path d="M4 10h1v1h-1z" fill="#009961"/><path d="M5 10h1v1h-1z" fill="#009963"/><path d="M6 10h1v1h-1z" fill="#009964"/><path d="M7 10h1v1h-1z" fill="#096"/><path d="M8 10h1v1h-1z" fill="#009968"/><path d="M9 10h1v1h-1z" fill="#00996a"/><path d="M10 10h1v1h-1z" fill="#00996c"/><path d="M11 10h1v1h-1z" fill="#00996e"/><path d="M12 10h1v1h-1z" fill="#009971"/><path d="M13 10h1v1h-1z" fill="#009974"/><path d="M14 10h1v1h-1z" fill="#0d9977"/><path d="M15 10h1v1h-1z" fill="#24997a"/><path d="M16 10h1v1h-1z" fill="#3e997d"/><path d="M17 10h1v1h-1z" fill="#5b9981"/><path d="M18 10h1v1h-1z" fill="#7a9985"/><path d="M19 10h1v1h-1z" fill="#999687"/><path d="M20 10h1v1h-1z" fill="#997870"/><path d="M21 10h1v1h-1z" fill="#996360"/><path d="M22 10h1v1h-1z" fill="#995253"/><path d="M23 10h1v1h-1z" fill="#994549"/><path d="M24 10h1v1h-1z" fill="#993a41"/><path d="M25 10h1v1h-1z" fill="#99313a"/><path d="M26 10h1v1h-1z" fill="#992a34"/><path d="M27 10h1v1h-1z" fill="#992430"/><path d="M28 10h1v1h-1z" fill="#991e2b"/><path d="M29 10h1v1h-1z" fill="#991928"/><path d="M30 10h1v1h-1z" fill="#991525"/><path d="M31 10h1v1h-1z" fill="#912"/><path d="M32 10h1v1h-1z" fill="#990e1f"/><path d="M33 10h1v1h-1z" fill="#990b1d"/><path d="M34 10h1v1h-1z" fill="#99081b"/><path d="M35 10h1v1h-1z" fill="#990619"/><path d="M36 10h1v1h-1z" fill="#990417"/><path d="M37 10h1v1h-1z" fill="#990216"/><path d="M38 10h1v1h-1z" fill="#990014"/><path d="M39 10h1v1h-1z" fill="#990013"/><path d="M40 10h1v1h-1z" fill="#990012"/><path d="M41 10h1v1h-1z" fill="#901"/><path d="M42 10h1v1h-1z" fill="#990010"/><path d="M43 10h1v1h-1z" fill="#99000f"/><path d="M44 10h1v1h-1z" fill="#99000e"/><path d="M45 10h1v1h-1z" fill="#99000d"/><path d="M46 10h1v1h-1z" fill="#99000c"/><path d="M47 10h1v1h-1z" fill="#99000b"/><path d="M48 10h1v1h-1z" fill="#99000b"/><path d="M49 10h1v1h-1z" fill="#99000a"/><path d="M50 10h1v1h-1z" fill="#990009"/><path d="M51 10h1v1h-1z" fill="#990009"/><path d="M52 10h1v1h-1z" fill="#990008"/><path d="M53 10h1v1h-1z" fill="#990008"/><path d="M54 10h1v1h-1z" fill="#990007"/><path d="M55 10h1v1h-1z" fill="#990007"/><path d="M56 10h1v1h-1z" fill="#990006"/><path d="M57 10h1v1h-1z" fill="#990006"/><path d="M0 11h1v1h-1z" fill="#00996c"/><path d="M1 11h1v1h-1z" fill="#00996d"/><path d="M2 11h1v1h-1z" fill="#00996f"/><path d="M3 11h1v1h-1z" fill="#009971"/><path d="M4 11h1v1h-1z" fill="#009973"/><path d="M5 11h1v1h-1z" fill="#009975"/><path d="M6 11h1v1h-1z" fill="#009978"/><path d="M7 11h1v1h-1z" fill="#00997a"/><path d="M8 11h1v1h-1z" fill="#00997d"/><path d="M9 11h1v1h-1z" fill="#00997f"/><path d="M10 11h1v1h-1z" fill="#009982"/><path d="M11 11h1v1h-1z" fill="#009986"/><path d="M12 11h1v1h-1z" fill="#009989"/><path d="M13 11h1v1h-1z" fill="#00998d"/><path d="M14 11h1v1h-1z" fill="#0a9991"/><path d="M15 11h1v1h-1z" fill="#229996"/><path d="M16 11h1v1h-1z" fill="#3c9799"/><path d="M17 11h1v1h-1z" fill="#579299"/><path d="M18 11h1v1h-1z" fill="#728d99"/><path d="M19 11h1v1h-1z" fill="#8e8899"/><path d="M20 11h1v1h-1z" fill="#997589"/><path d="M21 11h1v1h-1z" fill="#995f75"/><path d="M22 11h1v1h-1z" fill="#994e66"/><path d="M23 11h1v1h-1z" fill="#994159"/><path d="M24 11h1v1h-1z" fill="#99374f"/><path d="M25 11h1v1h-1z" fill="#992e47"/><path d="M26 11h1v1h-1z" fill="#992741"/><path d="M27 11h1v1h-1z" fill="#99213b"/><path d="M28 11h1v1h-1z" fill="#991b36"/><path d="M29 11h1v1h-1z" fill="#991731"/><path d="M30 11h1v1h-1z" fill="#99132e"/><path d="M31 11h1v1h-1z" fill="#990f2a"/><path d="M32 11h1v1h-1z" fill="#990c27"/><path d="M33 11h1v1h-1z" fill="#990924"/><path d="M34 11h1v1h-1z" fill="#990622"/><path d="M35 11h1v1h-1z" fill="#990420"/><path d="M36 11h1v1h-1z" fill="#99021e"/><path d="M37 11h1v1h-1z" fill="#99001c"/><path d="M38 11h1v1h-1z" fill="#99001a"/><path d="M39 11h1v1h-1z" fill="#990019"/><path d="M40 11h1v1h-1z" fill="#990017"/><path d="M41 11h1v1h-1z" fill="#990016"/><path d="M42 11h1v1h-1z" fill="#990015"/><path d="M43 11h1v1h-1z" fill="#990014"/><path d="M44 11h1v1h-1z" fill="#990012"/><path d="M45 11h1v1h-1z" fill="#901"/><path d="M46 11h1v1h-1z" fill="#990010"/><path d="M47 11h1v1h-1z" fill="#990010"/><path d="M48 11h1v1h-1z" fill="#99000f"/><path d="M49 11h1v1h-1z" fill="#99000e"/><path d="M50 11h1v1h-1z" fill="#99000d"/><path d="M51 11h1v1h-1z" fill="#99000d"/><path d="M52 11h1v1h-1z" fill="#99000c"/><path d="M53 11h1v1h-1z" fill="#99000b"/><path d="M54 11h1v1h-1z" fill="#99000b"/><path d="M55 11h1v1h-1z" fill="#99000a"/><path d="M56 11h1v1h-1z" fill="#990009"/><path d="M57 11h1v1h-1z" fill="#990009"/><path d="M0 12h1v1h-1z" fill="#00997c"/><path d="M1 12h1v1h-1z" fill="#00997f"/><path d="M2 12h1v1h-1z" fill="#009981"/><path d="M3 12h1v1h-1z" fill="#009983"/><path d="M4 12h1v1h-1z" fill="#009986"/><path d="M5 12h1v1h-1z" fill="#009989"/><path d="M6 12h1v1h-1z" fill="#00998c"/><path d="M7 12h1v1h-1z" fill="#00998f"/><path d="M8 12h1v1h-1z" fill="#009993"/><path d="M9 12h1v1h-1z" fill="#009996"/><path d="M10 12h1v1h-1z" fill="#009899"/><path d="M11 12h1v1h-1z" fill="#009399"/><path d="M12 12h1v1h-1z" fill="#008f99"/><path d="M13 12h1v1h-1z" fill="#008b99"/><path d="M14 12h1v1h-1z" fill="#058699"/><path d="M15 12h1v1h-1z" fill="#1b8299"/><path d="M16 12h1v1h-1z" fill="#317d99"/><path d="M17 12h1v1h-1z" fill="#487899"/><path d="M18 12h1v1h-1z" fill="#5f7499"/><path d="M19 12h1v1h-1z" fill="#776f99"/><path d="M20 12h1v1h-1z" fill="#8f6999"/><path d="M21 12h1v1h-1z" fill="#995b8b"/><path d="M22 12h1v1h-1z" fill="#994b79"/><path d="M23 12h1v1h-1z" fill="#993e6a"/><path d="M24 12h1v1h-1z" fill="#99345f"/><path d="M25 12h1v1h-1z" fill="#992b55"/><path d="M26 12h1v1h-1z" fill="#99244d"/><path d="M27 12h1v1h-1z" fill="#991e46"/><path d="M28 12h1v1h-1z" fill="#991940"/><path d="M29 12h1v1h-1z" fill="#99143b"/><path d="M30 12h1v1h-1z" fill="#991037"/><path d="M31 12h1v1h-1z" fill="#990d33"/><path d="M32 12h1v1h-1z" fill="#990a2f"/><path d="M33 12h1v1h-1z" fill="#99072c"/><path d="M34 12h1v1h-1z" fill="#990429"/><path d="M35 12h1v1h-1z" fill="#990227"/><path d="M36 12h1v1h-1z" fill="#990024"/><path d="M37 12h1v1h-1z" fill="#902"/><path d="M38 12h1v1h-1z" fill="#990020"/><path d="M39 12h1v1h-1z" fill="#99001f"/><path d="M40 12h1v1h-1z" fill="#99001d"/><path d="M41 12h1v1h-1z" fill="#99001b"/><path d="M42 12h1v1h-1z" fill="#99001a"/><path d="M43 12h1v1h-1z" fill="#990019"/><path d="M44 12h1v1h-1z" fill="#990017"/><path d="M45 12h1v1h-1z" fill="#990016"/><path d="M46 12h1v1h-1z" fill="#990015"/><path d="M47 12h1v1h-1z" fill="#990014"/><path d="M48 12h1v1h-1z" fill="#990013"/><path d="M49 12h1v1h-1z" fill="#990012"/><path d="M50 12h1v1h-1z" fill="#901"/><path d="M51 12h1v1h-1z" fill="#990010"/><path d="M52 12h1v1h-1z" fill="#990010"/><path d="M53 12h1v1h-1z" fill="#99000f"/><path d="M54 12h1v1h-1z" fill="#99000e"/><path d="M55 12h1v1h-1z" fill="#99000e"/><path d="M56 12h1v1h-1z" fill="#99000d"/><path d="M57 12h1v1h-1z" fill="#99000c"/><path d="M0 13h1v1h-1z" fill="#00998e"/><path d="M1 13h1v1h-1z" fill="#009991"/><path d="M2 13h1v1h-1z" fill="#009994"/><path d="M3 13h1v1h-1z" fill="#009997"/><path d="M4 13h1v1h-1z" fill="#009899"/><path d="M5 13h1v1h-1z" fill="#009499"/><path d="M6 13h1v1h-1z" fill="#009199"/><path d="M7 13h1v1h-1z" fill="#008d99"/><path d="M8 13h1v1h-1z" fill="#008999"/><path d="M9 13h1v1h-1z" fill="#008699"/><path d="M10 13h1v1h-1z" fill="#008299"/><path d="M11 13h1v1h-1z" fill="#007e99"/><path d="M12 13h1v1h-1z" fill="#007a99"/><path d="M13 13h1v1h-1z" fill="#007699"/><path d="M14 13h1v1h-1z" fill="#027299"/><path d="M15 13h1v1h-1z" fill="#156e99"/><path d="M16 13h1v1h-1z" fill="#286999"/><path d="M17 13h1v1h-1z" fill="#3c6599"/><path d="M18 13h1v1h-1z" fill="#506099"/><path d="M19 13h1v1h-1z" fill="#655c99"/><path d="M20 13h1v1h-1z" fill="#7a5799"/><path d="M21 13h1v1h-1z" fill="#905299"/><path d="M22 13h1v1h-1z" fill="#99478d"/><path d="M23 13h1v1h-1z" fill="#993a7c"/><path d="M24 13h1v1h-1z" fill="#99306e"/><path d="M25 13h1v1h-1z" fill="#992863"/><path d="M26 13h1v1h-1z" fill="#99215a"/><path d="M27 13h1v1h-1z" fill="#991b52"/><path d="M28 13h1v1h-1z" fill="#99164b"/><path d="M29 13h1v1h-1z" fill="#991245"/><path d="M30 13h1v1h-1z" fill="#990e40"/><path d="M31 13h1v1h-1z" fill="#990a3c"/><path d="M32 13h1v1h-1z" fill="#990738"/><path d="M33 13h1v1h-1z" fill="#990534"/><path d="M34 13h1v1h-1z" fill="#990231"/><path d="M35 13h1v1h-1z" fill="#99002e"/><path d="M36 13h1v1h-1z" fill="#99002b"/><path d="M37 13h1v1h-1z" fill="#990029"/><path d="M38 13h1v1h-1z" fill="#990026"/><path d="M39 13h1v1h-1z" fill="#990024"/><path d="M40 13h1v1h-1z" fill="#902"/><path d="M41 13h1v1h-1z" fill="#990021"/><path d="M42 13h1v1h-1z" fill="#99001f"/><path d="M43 13h1v1h-1z" fill="#99001e"/><path d="M44 13h1v1h-1z" fill="#99001c"/><path d="M45 13h1v1h-1z" fill="#99001b"/><path d="M46 13h1v1h-1z" fill="#99001a"/><path d="M47 13h1v1h-1z" fill="#990018"/><path d="M48 13h1v1h-1z" fill="#990017"/><path d="M49 13h1v1h-1z" fill="#990016"/><path d="M50 13h1v1h-1z" fill="#990015"/><path d="M51 13h1v1h-1z" fill="#990014"/><path d="M52 13h1v1h-1z" fill="#990013"/><path d="M53 13h1v1h-1z" fill="#990013"/><path d="M54 13h1v1h-1z" fill="#990012"/><path d="M55 13h1v1h-1z" fill="#901"/><path d="M56 13h1v1h-1z" fill="#990010"/><path d="M0 14h1v1h-1z" fill="#009299"/><path d="M1 14h1v1h-1z" fill="#008f99"/><path d="M2 14h1v1h-1z" fill="#008c99"/><path d="M3 14h1v1h-1z" fill="#089"/><path d="M4 14h1v1h-1z" fill="#008599"/><path d="M5 14h1v1h-1z" fill="#008299"/><path d="M6 14h1v1h-1z" fill="#007e99"/><path d="M7 14h1v1h-1z" fill="#007b99"/><path d="M8 14h1v1h-1z" fill="#007899"/><path d="M9 14h1v1h-1z" fill="#007499"/><path d="M10 14h1v1h-1z" fill="#007099"/><path d="M11 14h1v1h-1z" fill="#006d99"/><path d="M12 14h1v1h-1z" fill="#006999"/><path d="M13 14h1v1h-1z" fill="#006599"/><path d="M14 14h1v1h-1z" fill="#006199"/><path d="M15 14h1v1h-1z" fill="#105d99"/><path d="M16 14h1v1h-1z" fill="#215999"/><path d="M17 14h1v1h-1z" fill="#359"/><path d="M18 14h1v1h-1z" fill="#455199"/><path d="M19 14h1v1h-1z" fill="#574d99"/><path d="M20 14h1v1h-1z" fill="#6a4899"/><path d="M21 14h1v1h-1z" fill="#7d4499"/><path d="M22 14h1v1h-1z" fill="#913f99"/><path d="M23 14h1v1h-1z" fill="#99368e"/><path d="M24 14h1v1h-1z" fill="#992d7e"/><path d="M25 14h1v1h-1z" fill="#992472"/><path d="M26 14h1v1h-1z" fill="#991e67"/><path d="M27 14h1v1h-1z" fill="#99185e"/><path d="M28 14h1v1h-1z" fill="#991356"/><path d="M29 14h1v1h-1z" fill="#990f50"/><path d="M30 14h1v1h-1z" fill="#990b4a"/><path d="M31 14h1v1h-1z" fill="#990845"/><path d="M32 14h1v1h-1z" fill="#990540"/><path d="M33 14h1v1h-1z" fill="#99023c"/><path d="M34 14h1v1h-1z" fill="#990038"/><path d="M35 14h1v1h-1z" fill="#990035"/><path d="M36 14h1v1h-1z" fill="#990032"/><path d="M37 14h1v1h-1z" fill="#99002f"/><path d="M38 14h1v1h-1z" fill="#99002d"/><path d="M39 14h1v1h-1z" fill="#99002a"/><path d="M40 14h1v1h-1z" fill="#990028"/><path d="M41 14h1v1h-1z" fill="#990026"/><path d="M42 14h1v1h-1z" fill="#990024"/><path d="M43 14h1v1h-1z" fill="#990023"/><path d="M44 14h1v1h-1z" fill="#990021"/><path d="M45 14h1v1h-1z" fill="#990020"/><path d="M46 14h1v1h-1z" fill="#99001e"/><path d="M47 14h1v1h-1z" fill="#99001d"/><path d="M48 14h1v1h-1z" fill="#99001c"/><path d="M49 14h1v1h-1z" fill="#99001a"/><path d="M50 14h1v1h-1z" fill="#990019"/><path d="M51 14h1v1h-1z" fill="#990018"/><path d="M52 14h1v1h-1z" fill="#990017"/><path d="M53 14h1v1h-1z" fill="#990016"/><path d="M54 14h1v1h-1z" fill="#990015"/><path d="M55 14h1v1h-1z" fill="#990015"/><path d="M1 15h1v1h-1z" fill="#007f99"/><path d="M2 15h1v1h-1z" fill="#007c99"/><path d="M3 15h1v1h-1z" fill="#007999"/><path d="M4 15h1v1h-1z" fill="#007699"/><path d="M5 15h1v1h-1z" fill="#007399"/><path d="M6 15h1v1h-1z" fill="#006f99"/><path d="M7 15h1v1h-1z" fill="#006c99"/><path d="M8 15h1v1h-1z" fill="#006999"/><path d="M9 15h1v1h-1z" fill="#069"/><path d="M10 15h1v1h-1z" fill="#006299"/><path d="M11 15h1v1h-1z" fill="#005f99"/><path d="M12 15h1v1h-1z" fill="#005b99"/><path d="M13 15h1v1h-1z" fill="#005899"/><path d="M14 15h1v1h-1z" fill="#005499"/><path d="M15 15h1v1h-1z" fill="#0c5099"/><path d="M16 15h1v1h-1z" fill="#1b4c99"/><path d="M17 15h1v1h-1z" fill="#2b4999"/><path d="M18 15h1v1h-1z" fill="#3c4599"/><path d="M19 15h1v1h-1z" fill="#4c4199"/><path d="M20 15h1v1h-1z" fill="#5d3d99"/><path d="M21 15h1v1h-1z" fill="#6e3899"/><path d="M22 15h1v1h-1z" fill="#803499"/><path d="M23 15h1v1h-1z" fill="#913099"/><path d="M24 15h1v1h-1z" fill="#99298f"/><path d="M25 15h1v1h-1z" fill="#992181"/><path d="M26 15h1v1h-1z" fill="#991a75"/><path d="M27 15h1v1h-1z" fill="#99156a"/><path d="M28 15h1v1h-1z" fill="#991062"/><path d="M29 15h1v1h-1z" fill="#990c5a"/><path d="M30 15h1v1h-1z" fill="#990854"/><path d="M31 15h1v1h-1z" fill="#99054e"/><path d="M32 15h1v1h-1z" fill="#990349"/><path d="M33 15h1v1h-1z" fill="#904"/><path d="M34 15h1v1h-1z" fill="#990040"/><path d="M35 15h1v1h-1z" fill="#99003c"/><path d="M36 15h1v1h-1z" fill="#990039"/><path d="M37 15h1v1h-1z" fill="#990036"/><path d="M38 15h1v1h-1z" fill="#903"/><path d="M39 15h1v1h-1z" fill="#990030"/><path d="M40 15h1v1h-1z" fill="#99002e"/><path d="M41 15h1v1h-1z" fill="#99002c"/><path d="M42 15h1v1h-1z" fill="#99002a"/><path d="M43 15h1v1h-1z" fill="#990028"/><path d="M44 15h1v1h-1z" fill="#990026"/><path d="M45 15h1v1h-1z" fill="#990024"/><path d="M46 15h1v1h-1z" fill="#990023"/><path d="M47 15h1v1h-1z" fill="#990021"/><path d="M48 15h1v1h-1z" fill="#990020"/><path d="M49 15h1v1h-1z" fill="#99001f"/><path d="M50 15h1v1h-1z" fill="#99001d"/><path d="M51 15h1v1h-1z" fill="#99001c"/><path d="M52 15h1v1h-1z" fill="#99001b"/><path d="M53 15h1v1h-1z" fill="#99001a"/><path d="M54 15h1v1h-1z" fill="#990019"/><path d="M1 16h1v1h-1z" fill="#007199"/><path d="M2 16h1v1h-1z" fill="#006f99"/><path d="M3 16h1v1h-1z" fill="#006c99"/><path d="M4 16h1v1h-1z" fill="#006999"/><path d="M5 16h1v1h-1z" fill="#069"/><path d="M6 16h1v1h-1z" fill="#006399"/><path d="M7 16h1v1h-1z" fill="#006099"/><path d="M8 16h1v1h-1z" fill="#005d99"/><path d="M9 16h1v1h-1z" fill="#005999"/><path d="M10 16h1v1h-1z" fill="#005699"/><path d="M11 16h1v1h-1z" fill="#005399"/><path d="M12 16h1v1h-1z" fill="#005099"/><path d="M13 16h1v1h-1z" fill="#004c99"/><path d="M14 16h1v1h-1z" fill="#004999"/><path d="M15 16h1v1h-1z" fill="#094599"/><path d="M16 16h1v1h-1z" fill="#174299"/><path d="M17 16h1v1h-1z" fill="#253e99"/><path d="M18 16h1v1h-1z" fill="#343b99"/><path d="M19 16h1v1h-1z" fill="#433799"/><path d="M20 16h1v1h-1z" fill="#523399"/><path d="M21 16h1v1h-1z" fill="#622f99"/><path d="M22 16h1v1h-1z" fill="#722b99"/><path d="M23 16h1v1h-1z" fill="#822799"/><path d="M24 16h1v1h-1z" fill="#922399"/><path d="M25 16h1v1h-1z" fill="#991d90"/><path d="M26 16h1v1h-1z" fill="#991783"/><path d="M27 16h1v1h-1z" fill="#991277"/><path d="M28 16h1v1h-1z" fill="#990d6d"/><path d="M29 16h1v1h-1z" fill="#990965"/><path d="M30 16h1v1h-1z" fill="#99065e"/><path d="M31 16h1v1h-1z" fill="#990357"/><path d="M32 16h1v1h-1z" fill="#990051"/><path d="M33 16h1v1h-1z" fill="#99004c"/><path d="M34 16h1v1h-1z" fill="#990048"/><path d="M35 16h1v1h-1z" fill="#904"/><path d="M36 16h1v1h-1z" fill="#990040"/><path d="M37 16h1v1h-1z" fill="#99003d"/><path d="M38 16h1v1h-1z" fill="#990039"/><path d="M39 16h1v1h-1z" fill="#990037"/><path d="M40 16h1v1h-1z" fill="#990034"/><path d="M41 16h1v1h-1z" fill="#990031"/><path d="M42 16h1v1h-1z" fill="#99002f"/><path d="M43 16h1v1h-1z" fill="#99002d"/><path d="M44 16h1v1h-1z" fill="#99002b"/><path d="M45 16h1v1h-1z" fill="#990029"/><path d="M46 16h1v1h-1z" fill="#990027"/><path d="M47 16h1v1h-1z" fill="#990026"/><path d="M48 16h1v1h-1z" fill="#990024"/><path d="M49 16h1v1h-1z" fill="#990023"/><path d="M50 16h1v1h-1z" fill="#902"/><path d="M51 16h1v1h-1z" fill="#990020"/><path d="M52 16h1v1h-1z" fill="#99001f"/><path d="M53 16h1v1h-1z" fill="#99001e"/><path d="M1 17h1v1h-1z" fill="#069"/><path d="M2 17h1v1h-1z" fill="#006399"/><path d="M3 17h1v1h-1z" fill="#006199"/><path d="M4 17h1v1h-1z" fill="#005e99"/><path d="M5 17h1v1h-1z" fill="#005b99"/><path d="M6 17h1v1h-1z" fill="#005899"/><path d="M7 17h1v1h-1z" fill="#059"/><path d="M8 17h1v1h-1z" fill="#005299"/><path d="M9 17h1v1h-1z" fill="#004f99"/><path d="M10 17h1v1h-1z" fill="#004c99"/><path d="M11 17h1v1h-1z" fill="#004999"/><path d="M12 17h1v1h-1z" fill="#004699"/><path d="M13 17h1v1h-1z" fill="#004399"/><path d="M14 17h1v1h-1z" fill="#003f99"/><path d="M15 17h1v1h-1z" fill="#063c99"/><path d="M16 17h1v1h-1z" fill="#133999"/><path d="M17 17h1v1h-1z" fill="#203599"/><path d="M18 17h1v1h-1z" fill="#2e3299"/><path d="M19 17h1v1h-1z" fill="#3b2f99"/><path d="M20 17h1v1h-1z" fill="#492b99"/><path d="M21 17h1v1h-1z" fill="#572799"/><path d="M22 17h1v1h-1z" fill="#662499"/><path d="M23 17h1v1h-1z" fill="#742099"/><path d="M24 17h1v1h-1z" fill="#831c99"/><path d="M25 17h1v1h-1z" fill="#921999"/><path d="M26 17h1v1h-1z" fill="#991491"/><path d="M27 17h1v1h-1z" fill="#990e84"/><path d="M28 17h1v1h-1z" fill="#990a79"/><path d="M29 17h1v1h-1z" fill="#990670"/><path d="M30 17h1v1h-1z" fill="#990368"/><path d="M31 17h1v1h-1z" fill="#990061"/><path d="M32 17h1v1h-1z" fill="#99005a"/><path d="M33 17h1v1h-1z" fill="#905"/><path d="M34 17h1v1h-1z" fill="#990050"/><path d="M35 17h1v1h-1z" fill="#99004b"/><path d="M36 17h1v1h-1z" fill="#990047"/><path d="M37 17h1v1h-1z" fill="#990043"/><path d="M38 17h1v1h-1z" fill="#990040"/><path d="M39 17h1v1h-1z" fill="#99003d"/><path d="M40 17h1v1h-1z" fill="#99003a"/><path d="M41 17h1v1h-1z" fill="#990037"/><path d="M42 17h1v1h-1z" fill="#990035"/><path d="M43 17h1v1h-1z" fill="#990032"/><path d="M44 17h1v1h-1z" fill="#990030"/><path d="M45 17h1v1h-1z" fill="#99002e"/><path d="M46 17h1v1h-1z" fill="#99002c"/><path d="M47 17h1v1h-1z" fill="#99002a"/><path d="M48 17h1v1h-1z" fill="#990029"/><path d="M49 17h1v1h-1z" fill="#990027"/><path d="M50 17h1v1h-1z" fill="#990026"/><path d="M51 17h1v1h-1z" fill="#990024"/><path d="M52 17h1v1h-1z" fill="#990023"/><path d="M2 18h1v1h-1z" fill="#005999"/><path d="M3 18h1v1h-1z" fill="#005799"/><path d="M4 18h1v1h-1z" fill="#005499"/><path d="M5 18h1v1h-1z" fill="#005199"/><path d="M6 18h1v1h-1z" fill="#004f99"/><path d="M7 18h1v1h-1z" fill="#004c99"/><path d="M8 18h1v1h-1z" fill="#004999"/><path d="M9 18h1v1h-1z" fill="#004699"/><path d="M10 18h1v1h-1z" fill="#004399"/><path d="M11 18h1v1h-1z" fill="#004099"/><path d="M12 18h1v1h-1z" fill="#003d99"/><path d="M13 18h1v1h-1z" fill="#003a99"/><path d="M14 18h1v1h-1z" fill="#003799"/><path d="M15 18h1v1h-1z" fill="#033499"/><path d="M16 18h1v1h-1z" fill="#0f3199"/><path d="M17 18h1v1h-1z" fill="#1c2e99"/><path d="M18 18h1v1h-1z" fill="#282b99"/><path d="M19 18h1v1h-1z" fill="#352899"/><path d="M20 18h1v1h-1z" fill="#422499"/><path d="M21 18h1v1h-1z" fill="#4f2199"/><path d="M22 18h1v1h-1z" fill="#5c1d99"/><path d="M23 18h1v1h-1z" fill="#691a99"/><path d="M24 18h1v1h-1z" fill="#771799"/><path d="M25 18h1v1h-1z" fill="#851399"/><path d="M26 18h1v1h-1z" fill="#930f99"/><path d="M27 18h1v1h-1z" fill="#990b91"/><path d="M28 18h1v1h-1z" fill="#990786"/><path d="M29 18h1v1h-1z" fill="#99037b"/><path d="M30 18h1v1h-1z" fill="#990072"/><path d="M31 18h1v1h-1z" fill="#99006a"/><path d="M32 18h1v1h-1z" fill="#990064"/><path d="M33 18h1v1h-1z" fill="#99005d"/><path d="M34 18h1v1h-1z" fill="#990058"/><path d="M35 18h1v1h-1z" fill="#990053"/><path d="M36 18h1v1h-1z" fill="#99004e"/><path d="M37 18h1v1h-1z" fill="#99004a"/><path d="M38 18h1v1h-1z" fill="#990046"/><path d="M39 18h1v1h-1z" fill="#990043"/><path d="M40 18h1v1h-1z" fill="#990040"/><path d="M41 18h1v1h-1z" fill="#99003d"/><path d="M42 18h1v1h-1z" fill="#99003a"/><path d="M43 18h1v1h-1z" fill="#990038"/><path d="M44 18h1v1h-1z" fill="#990035"/><path d="M45 18h1v1h-1z" fill="#903"/><path d="M46 18h1v1h-1z" fill="#990031"/><path d="M47 18h1v1h-1z" fill="#99002f"/><path d="M48 18h1v1h-1z" fill="#99002d"/><path d="M49 18h1v1h-1z" fill="#99002c"/><path d="M50 18h1v1h-1z" fill="#99002a"/><path d="M51 18h1v1h-1z" fill="#990028"/><path d="M2 19h1v1h-1z" fill="#005199"/><path d="M3 19h1v1h-1z" fill="#004e99"/><path d="M4 19h1v1h-1z" fill="#004c99"/><path d="M5 19h1v1h-1z" fill="#004999"/><path d="M6 19h1v1h-1z" fill="#004799"/><path d="M7 19h1v1h-1z" fill="#049"/><path d="M8 19h1v1h-1z" fill="#004199"/><path d="M9 19h1v1h-1z" fill="#003f99"/><path d="M10 19h1v1h-1z" fill="#003c99"/><path d="M11 19h1v1h-1z" fill="#003999"/><path d="M12 19h1v1h-1z" fill="#003699"/><path d="M13 19h1v1h-1z" fill="#039"/><path d="M14 19h1v1h-1z" fill="#003199"/><path d="M15 19h1v1h-1z" fill="#012e99"/><path d="M16 19h1v1h-1z" fill="#0d2b99"/><path d="M17 19h1v1h-1z" fill="#182899"/><path d="M18 19h1v1h-1z" fill="#242599"/><path d="M19 19h1v1h-1z" fill="#2f2299"/><path d="M20 19h1v1h-1z" fill="#3b1e99"/><path d="M21 19h1v1h-1z" fill="#471b99"/><path d="M22 19h1v1h-1z" fill="#531899"/><path d="M23 19h1v1h-1z" fill="#601599"/><path d="M24 19h1v1h-1z" fill="#6c1299"/><path d="M25 19h1v1h-1z" fill="#790e99"/><path d="M26 19h1v1h-1z" fill="#860b99"/><path d="M27 19h1v1h-1z" fill="#930799"/><path d="M28 19h1v1h-1z" fill="#990492"/><path d="M29 19h1v1h-1z" fill="#990087"/><path d="M30 19h1v1h-1z" fill="#99007d"/><path d="M31 19h1v1h-1z" fill="#990074"/><path d="M32 19h1v1h-1z" fill="#99006d"/><path d="M33 19h1v1h-1z" fill="#906"/><path d="M34 19h1v1h-1z" fill="#990060"/><path d="M35 19h1v1h-1z" fill="#99005b"/><path d="M36 19h1v1h-1z" fill="#990056"/><path d="M37 19h1v1h-1z" fill="#990051"/><path d="M38 19h1v1h-1z" fill="#99004d"/><path d="M39 19h1v1h-1z" fill="#990049"/><path d="M40 19h1v1h-1z" fill="#990046"/><path d="M41 19h1v1h-1z" fill="#990043"/><path d="M42 19h1v1h-1z" fill="#990040"/><path d="M43 19h1v1h-1z" fill="#99003d"/><path d="M44 19h1v1h-1z" fill="#99003a"/><path d="M45 19h1v1h-1z" fill="#990038"/><path d="M46 19h1v1h-1z" fill="#990036"/><path d="M47 19h1v1h-1z" fill="#990034"/><path d="M48 19h1v1h-1z" fill="#990032"/><path d="M49 19h1v1h-1z" fill="#990030"/><path d="M50 19h1v1h-1z" fill="#99002e"/><path d="M3 20h1v1h-1z" fill="#004799"/><path d="M4 20h1v1h-1z" fill="#004599"/><path d="M5 20h1v1h-1z" fill="#004299"/><path d="M6 20h1v1h-1z" fill="#004099"/><path d="M7 20h1v1h-1z" fill="#003d99"/><path d="M8 20h1v1h-1z" fill="#003a99"/><path d="M9 20h1v1h-1z" fill="#003899"/><path d="M10 20h1v1h-1z" fill="#003599"/><path d="M11 20h1v1h-1z" fill="#039"/><path d="M12 20h1v1h-1z" fill="#003099"/><path d="M13 20h1v1h-1z" fill="#002d99"/><path d="M14 20h1v1h-1z" fill="#002a99"/><path d="M15 20h1v1h-1z" fill="#002899"/><path d="M16 20h1v1h-1z" fill="#0a2599"/><path d="M17 20h1v1h-1z" fill="#152299"/><path d="M18 20h1v1h-1z" fill="#201f99"/><path d="M19 20h1v1h-1z" fill="#2b1c99"/><path d="M20 20h1v1h-1z" fill="#361999"/><path d="M21 20h1v1h-1z" fill="#411699"/><path d="M22 20h1v1h-1z" fill="#4c1399"/><path d="M23 20h1v1h-1z" fill="#581099"/><path d="M24 20h1v1h-1z" fill="#630d99"/><path d="M25 20h1v1h-1z" fill="#6f0a99"/><path d="M26 20h1v1h-1z" fill="#7b0799"/><path d="M27 20h1v1h-1z" fill="#870499"/><path d="M28 20h1v1h-1z" fill="#930099"/><path d="M29 20h1v1h-1z" fill="#990093"/><path d="M30 20h1v1h-1z" fill="#908"/><path d="M31 20h1v1h-1z" fill="#99007e"/><path d="M32 20h1v1h-1z" fill="#990076"/><path d="M33 20h1v1h-1z" fill="#99006f"/><path d="M34 20h1v1h-1z" fill="#990068"/><path d="M35 20h1v1h-1z" fill="#990062"/><path d="M36 20h1v1h-1z" fill="#99005d"/><path d="M37 20h1v1h-1z" fill="#990058"/><path d="M38 20h1v1h-1z" fill="#990054"/><path d="M39 20h1v1h-1z" fill="#990050"/><path d="M40 20h1v1h-1z" fill="#99004c"/><path d="M41 20h1v1h-1z" fill="#990049"/><path d="M42 20h1v1h-1z" fill="#990045"/><path d="M43 20h1v1h-1z" fill="#990042"/><path d="M44 20h1v1h-1z" fill="#990040"/><path d="M45 20h1v1h-1z" fill="#99003d"/><path d="M46 20h1v1h-1z" fill="#99003b"/><path d="M47 20h1v1h-1z" fill="#990038"/><path d="M48 20h1v1h-1z" fill="#990036"/><path d="M49 20h1v1h-1z" fill="#990034"/><path d="M3 21h1v1h-1z" fill="#004099"/><path d="M4 21h1v1h-1z" fill="#003e99"/><path d="M5 21h1v1h-1z" fill="#003c99"/><path d="M6 21h1v1h-1z" fill="#003999"/><path d="M7 21h1v1h-1z" fill="#003799"/><path d="M8 21h1v1h-1z" fill="#003499"/><path d="M9 21h1v1h-1z" fill="#003299"/><path d="M10 21h1v1h-1z" fill="#002f99"/><path d="M11 21h1v1h-1z" fill="#002d99"/><path d="M12 21h1v1h-1z" fill="#002a99"/><path d="M13 21h1v1h-1z" fill="#002899"/><path d="M14 21h1v1h-1z" fill="#002599"/><path d="M15 21h1v1h-1z" fill="#002399"/><path d="M16 21h1v1h-1z" fill="#082099"/><path d="M17 21h1v1h-1z" fill="#121d99"/><path d="M18 21h1v1h-1z" fill="#1c1a99"/><path d="M19 21h1v1h-1z" fill="#261899"/><path d="M20 21h1v1h-1z" fill="#311599"/><path d="M21 21h1v1h-1z" fill="#3b1299"/><path d="M22 21h1v1h-1z" fill="#460f99"/><path d="M23 21h1v1h-1z" fill="#500c99"/><path d="M24 21h1v1h-1z" fill="#5b0999"/><path d="M25 21h1v1h-1z" fill="#660699"/><path d="M26 21h1v1h-1z" fill="#710399"/><path d="M27 21h1v1h-1z" fill="#7d0099"/><path d="M28 21h1v1h-1z" fill="#809"/><path d="M29 21h1v1h-1z" fill="#940099"/><path d="M30 21h1v1h-1z" fill="#990093"/><path d="M31 21h1v1h-1z" fill="#990089"/><path d="M32 21h1v1h-1z" fill="#990080"/><path d="M33 21h1v1h-1z" fill="#990078"/><path d="M34 21h1v1h-1z" fill="#990071"/><path d="M35 21h1v1h-1z" fill="#99006a"/><path d="M36 21h1v1h-1z" fill="#990065"/><path d="M37 21h1v1h-1z" fill="#99005f"/><path d="M38 21h1v1h-1z" fill="#99005b"/><path d="M39 21h1v1h-1z" fill="#990056"/><path d="M40 21h1v1h-1z" fill="#990052"/><path d="M41 21h1v1h-1z" fill="#99004f"/><path d="M42 21h1v1h-1z" fill="#99004b"/><path d="M43 21h1v1h-1z" fill="#990048"/><path d="M44 21h1v1h-1z" fill="#990045"/><path d="M45 21h1v1h-1z" fill="#990042"/><path d="M46 21h1v1h-1z" fill="#990040"/><path d="M47 21h1v1h-1z" fill="#99003d"/><path d="M48 21h1v1h-1z" fill="#99003b"/><path d="M49 21h1v1h-1z" fill="#990039"/><path d="M4 22h1v1h-1z" fill="#003899"/><path d="M5 22h1v1h-1z" fill="#003699"/><path d="M6 22h1v1h-1z" fill="#003499"/><path d="M7 22h1v1h-1z" fill="#003199"/><path d="M8 22h1v1h-1z" fill="#002f99"/><path d="M9 22h1v1h-1z" fill="#002d99"/><path d="M10 22h1v1h-1z" fill="#002a99"/><path d="M11 22h1v1h-1z" fill="#002899"/><path d="M12 22h1v1h-1z" fill="#002599"/><path d="M13 22h1v1h-1z" fill="#002399"/><path d="M14 22h1v1h-1z" fill="#002099"/><path d="M15 22h1v1h-1z" fill="#001e99"/><path d="M16 22h1v1h-1z" fill="#061b99"/><path d="M17 22h1v1h-1z" fill="#0f1999"/><path d="M18 22h1v1h-1z" fill="#191699"/><path d="M19 22h1v1h-1z" fill="#221499"/><path d="M20 22h1v1h-1z" fill="#2c1199"/><path d="M21 22h1v1h-1z" fill="#360e99"/><path d="M22 22h1v1h-1z" fill="#400c99"/><path d="M23 22h1v1h-1z" fill="#4a0999"/><path d="M24 22h1v1h-1z" fill="#540699"/><path d="M25 22h1v1h-1z" fill="#5f0399"/><path d="M26 22h1v1h-1z" fill="#690099"/><path d="M27 22h1v1h-1z" fill="#740099"/><path d="M28 22h1v1h-1z" fill="#7e0099"/><path d="M29 22h1v1h-1z" fill="#890099"/><path d="M30 22h1v1h-1z" fill="#940099"/><path d="M31 22h1v1h-1z" fill="#990093"/><path d="M32 22h1v1h-1z" fill="#99008a"/><path d="M33 22h1v1h-1z" fill="#990081"/><path d="M34 22h1v1h-1z" fill="#990079"/><path d="M35 22h1v1h-1z" fill="#990073"/><path d="M36 22h1v1h-1z" fill="#99006c"/><path d="M37 22h1v1h-1z" fill="#990067"/><path d="M38 22h1v1h-1z" fill="#990062"/><path d="M39 22h1v1h-1z" fill="#99005d"/><path d="M40 22h1v1h-1z" fill="#990059"/><path d="M41 22h1v1h-1z" fill="#905"/><path d="M42 22h1v1h-1z" fill="#990051"/><path d="M43 22h1v1h-1z" fill="#99004e"/><path d="M44 22h1v1h-1z" fill="#99004a"/><path d="M45 22h1v1h-1z" fill="#990047"/><path d="M46 22h1v1h-1z" fill="#990045"/><path d="M47 22h1v1h-1z" fill="#990042"/><path d="M48 22h1v1h-1z" fill="#990040"/><path d="M4 23h1v1h-1z" fill="#039"/><path d="M5 23h1v1h-1z" fill="#003199"/><path d="M6 23h1v1h-1z" fill="#002f99"/><path d="M7 23h1v1h-1z" fill="#002c99"/><path d="M8 23h1v1h-1z" fill="#002a99"/><path d="M9 23h1v1h-1z" fill="#002899"/><path d="M10 23h1v1h-1z" fill="#002699"/><path d="M11 23h1v1h-1z" fill="#002399"/><path d="M12 23h1v1h-1z" fill="#002199"/><path d="M13 23h1v1h-1z" fill="#001f99"/><path d="M14 23h1v1h-1z" fill="#001c99"/><path d="M15 23h1v1h-1z" fill="#001a99"/><path d="M16 23h1v1h-1z" fill="#041799"/><path d="M17 23h1v1h-1z" fill="#0d1599"/><path d="M18 23h1v1h-1z" fill="#161399"/><path d="M19 23h1v1h-1z" fill="#1f1099"/><path d="M20 23h1v1h-1z" fill="#280d99"/><path d="M21 23h1v1h-1z" fill="#320b99"/><path d="M22 23h1v1h-1z" fill="#3b0899"/><path d="M23 23h1v1h-1z" fill="#440699"/><path d="M24 23h1v1h-1z" fill="#4e0399"/><path d="M25 23h1v1h-1z" fill="#580099"/><path d="M26 23h1v1h-1z" fill="#620099"/><path d="M27 23h1v1h-1z" fill="#6b0099"/><path d="M28 23h1v1h-1z" fill="#750099"/><path d="M29 23h1v1h-1z" fill="#800099"/><path d="M30 23h1v1h-1z" fill="#8a0099"/><path d="M31 23h1v1h-1z" fill="#940099"/><path d="M32 23h1v1h-1z" fill="#990094"/><path d="M33 23h1v1h-1z" fill="#99008b"/><path d="M34 23h1v1h-1z" fill="#990082"/><path d="M35 23h1v1h-1z" fill="#99007b"/><path d="M36 23h1v1h-1z" fill="#990074"/><path d="M37 23h1v1h-1z" fill="#99006e"/><path d="M38 23h1v1h-1z" fill="#990069"/><path d="M39 23h1v1h-1z" fill="#990064"/><path d="M40 23h1v1h-1z" fill="#99005f"/><path d="M41 23h1v1h-1z" fill="#99005b"/><path d="M42 23h1v1h-1z" fill="#990057"/><path d="M43 23h1v1h-1z" fill="#990053"/><path d="M44 23h1v1h-1z" fill="#990050"/><path d="M45 23h1v1h-1z" fill="#99004d"/><path d="M46 23h1v1h-1z" fill="#99004a"/><path d="M47 23h1v1h-1z" fill="#990047"/><path d="M5 24h1v1h-1z" fill="#002c99"/><path d="M6 24h1v1h-1z" fill="#002a99"/><path d="M7 24h1v1h-1z" fill="#002899"/><path d="M8 24h1v1h-1z" fill="#002699"/><path d="M9 24h1v1h-1z" fill="#002499"/><path d="M10 24h1v1h-1z" fill="#002199"/><path d="M11 24h1v1h-1z" fill="#001f99"/><path d="M12 24h1v1h-1z" fill="#001d99"/><path d="M13 24h1v1h-1z" fill="#001b99"/><path d="M14 24h1v1h-1z" fill="#001899"/><path d="M15 24h1v1h-1z" fill="#001699"/><path d="M16 24h1v1h-1z" fill="#031499"/><path d="M17 24h1v1h-1z" fill="#0b1299"/><path d="M18 24h1v1h-1z" fill="#140f99"/><path d="M19 24h1v1h-1z" fill="#1c0d99"/><path d="M20 24h1v1h-1z" fill="#250a99"/><path d="M21 24h1v1h-1z" fill="#2e0899"/><path d="M22 24h1v1h-1z" fill="#360599"/><path d="M23 24h1v1h-1z" fill="#3f0399"/><path d="M24 24h1v1h-1z" fill="#480099"/><path d="M25 24h1v1h-1z" fill="#520099"/><path d="M26 24h1v1h-1z" fill="#5b0099"/><path d="M27 24h1v1h-1z" fill="#640099"/><path d="M28 24h1v1h-1z" fill="#6e0099"/><path d="M29 24h1v1h-1z" fill="#709"/><path d="M30 24h1v1h-1z" fill="#810099"/><path d="M31 24h1v1h-1z" fill="#8a0099"/><path d="M32 24h1v1h-1z" fill="#940099"/><path d="M33 24h1v1h-1z" fill="#990094"/><path d="M34 24h1v1h-1z" fill="#99008b"/><path d="M35 24h1v1h-1z" fill="#990083"/><path d="M36 24h1v1h-1z" fill="#99007c"/><path d="M37 24h1v1h-1z" fill="#990076"/><path d="M38 24h1v1h-1z" fill="#990070"/><path d="M39 24h1v1h-1z" fill="#99006a"/><path d="M40 24h1v1h-1z" fill="#906"/><path d="M41 24h1v1h-1z" fill="#990061"/><path d="M42 24h1v1h-1z" fill="#99005d"/><path d="M43 24h1v1h-1z" fill="#990059"/><path d="M44 24h1v1h-1z" fill="#905"/><path d="M45 24h1v1h-1z" fill="#990052"/><path d="M46 24h1v1h-1z" fill="#99004f"/><path d="M5 25h1v1h-1z" fill="#002899"/><path d="M6 25h1v1h-1z" fill="#002699"/><path d="M7 25h1v1h-1z" fill="#002499"/><path d="M8 25h1v1h-1z" fill="#029"/><path d="M9 25h1v1h-1z" fill="#002099"/><path d="M10 25h1v1h-1z" fill="#001e99"/><path d="M11 25h1v1h-1z" fill="#001c99"/><path d="M12 25h1v1h-1z" fill="#001999"/><path d="M13 25h1v1h-1z" fill="#001799"/><path d="M14 25h1v1h-1z" fill="#001599"/><path d="M15 25h1v1h-1z" fill="#001399"/><path d="M16 25h1v1h-1z" fill="#011199"/><path d="M17 25h1v1h-1z" fill="#090e99"/><path d="M18 25h1v1h-1z" fill="#110c99"/><path d="M19 25h1v1h-1z" fill="#190a99"/><path d="M20 25h1v1h-1z" fill="#220899"/><path d="M21 25h1v1h-1z" fill="#2a0599"/><path d="M22 25h1v1h-1z" fill="#320399"/><path d="M23 25h1v1h-1z" fill="#3b0199"/><path d="M24 25h1v1h-1z" fill="#430099"/><path d="M25 25h1v1h-1z" fill="#4c0099"/><path d="M26 25h1v1h-1z" fill="#509"/><path d="M27 25h1v1h-1z" fill="#5e0099"/><path d="M28 25h1v1h-1z" fill="#670099"/><path d="M29 25h1v1h-1z" fill="#700099"/><path d="M30 25h1v1h-1z" fill="#790099"/><path d="M31 25h1v1h-1z" fill="#820099"/><path d="M32 25h1v1h-1z" fill="#8b0099"/><path d="M33 25h1v1h-1z" fill="#940099"/><path d="M34 25h1v1h-1z" fill="#990094"/><path d="M35 25h1v1h-1z" fill="#99008c"/><path d="M36 25h1v1h-1z" fill="#990084"/><path d="M37 25h1v1h-1z" fill="#99007d"/><path d="M38 25h1v1h-1z" fill="#907"/><path d="M39 25h1v1h-1z" fill="#990071"/><path d="M40 25h1v1h-1z" fill="#99006c"/><path d="M41 25h1v1h-1z" fill="#990067"/><path d="M42 25h1v1h-1z" fill="#990063"/><path d="M43 25h1v1h-1z" fill="#99005f"/><path d="M44 25h1v1h-1z" fill="#99005b"/><path d="M45 25h1v1h-1z" fill="#990057"/><path d="M6 26h1v1h-1z" fill="#029"/><path d="M7 26h1v1h-1z" fill="#002099"/><path d="M8 26h1v1h-1z" fill="#001e99"/><path d="M9 26h1v1h-1z" fill="#001c99"/><path d="M10 26h1v1h-1z" fill="#001a99"/><path d="M11 26h1v1h-1z" fill="#001899"/><path d="M12 26h1v1h-1z" fill="#001699"/><path d="M13 26h1v1h-1z" fill="#001499"/><path d="M14 26h1v1h-1z" fill="#001299"/><path d="M15 26h1v1h-1z" fill="#001099"/><path d="M16 26h1v1h-1z" fill="#000e99"/><path d="M17 26h1v1h-1z" fill="#080c99"/><path d="M18 26h1v1h-1z" fill="#0f0999"/><path d="M19 26h1v1h-1z" fill="#170799"/><path d="M20 26h1v1h-1z" fill="#1f0599"/><path d="M21 26h1v1h-1z" fill="#270399"/><path d="M22 26h1v1h-1z" fill="#2f0199"/><path d="M23 26h1v1h-1z" fill="#370099"/><path d="M24 26h1v1h-1z" fill="#3f0099"/><path d="M25 26h1v1h-1z" fill="#470099"/><path d="M26 26h1v1h-1z" fill="#4f0099"/><path d="M27 26h1v1h-1z" fill="#580099"/><path d="M28 26h1v1h-1z" fill="#600099"/><path d="M29 26h1v1h-1z" fill="#690099"/><path d="M30 26h1v1h-1z" fill="#710099"/><path d="M31 26h1v1h-1z" fill="#7a0099"/><path d="M32 26h1v1h-1z" fill="#830099"/><path d="M33 26h1v1h-1z" fill="#8c0099"/><path d="M34 26h1v1h-1z" fill="#950099"/><path d="M35 26h1v1h-1z" fill="#990095"/><path d="M36 26h1v1h-1z" fill="#99008c"/><path d="M37 26h1v1h-1z" fill="#990085"/><path d="M38 26h1v1h-1z" fill="#99007e"/><path d="M39 26h1v1h-1z" fill="#990078"/><path d="M40 26h1v1h-1z" fill="#990073"/><path d="M41 26h1v1h-1z" fill="#99006e"/><path d="M42 26h1v1h-1z" fill="#990069"/><path d="M43 26h1v1h-1z" fill="#990065"/><path d="M44 26h1v1h-1z" fill="#990061"/><path d="M6 27h1v1h-1z" fill="#001f99"/><path d="M7 27h1v1h-1z" fill="#001d99"/><path d="M8 27h1v1h-1z" fill="#001b99"/><path d="M9 27h1v1h-1z" fill="#001999"/><path d="M10 27h1v1h-1z" fill="#001799"/><path d="M11 27h1v1h-1z" fill="#001599"/><path d="M12 27h1v1h-1z" fill="#001399"/><path d="M13 27h1v1h-1z" fill="#019"/><path d="M14 27h1v1h-1z" fill="#000f99"/><path d="M15 27h1v1h-1z" fill="#000d99"/><path d="M16 27h1v1h-1z" fill="#000b99"/><path d="M17 27h1v1h-1z" fill="#060999"/><path d="M18 27h1v1h-1z" fill="#0d0799"/><path d="M19 27h1v1h-1z" fill="#150599"/><path d="M20 27h1v1h-1z" fill="#1c0399"/><path d="M21 27h1v1h-1z" fill="#240199"/><path d="M22 27h1v1h-1z" fill="#2b0099"/><path d="M23 27h1v1h-1z" fill="#309"/><path d="M24 27h1v1h-1z" fill="#3b0099"/><path d="M25 27h1v1h-1z" fill="#430099"/><path d="M26 27h1v1h-1z" fill="#4b0099"/><path d="M27 27h1v1h-1z" fill="#530099"/><path d="M28 27h1v1h-1z" fill="#5b0099"/><path d="M29 27h1v1h-1z" fill="#630099"/><path d="M30 27h1v1h-1z" fill="#6b0099"/><path d="M31 27h1v1h-1z" fill="#730099"/><path d="M32 27h1v1h-1z" fill="#7b0099"/><path d="M33 27h1v1h-1z" fill="#840099"/><path d="M34 27h1v1h-1z" fill="#8c0099"/><path d="M35 27h1v1h-1z" fill="#950099"/><path d="M36 27h1v1h-1z" fill="#990095"/><path d="M37 27h1v1h-1z" fill="#99008d"/><path d="M38 27h1v1h-1z" fill="#990086"/><path d="M39 27h1v1h-1z" fill="#990080"/><path d="M40 27h1v1h-1z" fill="#99007a"/><path d="M41 27h1v1h-1z" fill="#990074"/><path d="M42 27h1v1h-1z" fill="#99006f"/><path d="M43 27h1v1h-1z" fill="#99006b"/><path d="M7 28h1v1h-1z" fill="#001a99"/><path d="M8 28h1v1h-1z" fill="#001899"/><path d="M9 28h1v1h-1z" fill="#001699"/><path d="M10 28h1v1h-1z" fill="#001499"/><path d="M11 28h1v1h-1z" fill="#001299"/><path d="M12 28h1v1h-1z" fill="#001099"/><path d="M13 28h1v1h-1z" fill="#000e99"/><path d="M14 28h1v1h-1z" fill="#000c99"/><path d="M15 28h1v1h-1z" fill="#000b99"/><path d="M16 28h1v1h-1z" fill="#000999"/><path d="M17 28h1v1h-1z" fill="#050799"/><path d="M18 28h1v1h-1z" fill="#0c0599"/><path d="M19 28h1v1h-1z" fill="#130399"/><path d="M20 28h1v1h-1z" fill="#1a0199"/><path d="M21 28h1v1h-1z" fill="#210099"/><path d="M22 28h1v1h-1z" fill="#280099"/><path d="M23 28h1v1h-1z" fill="#300099"/><path d="M24 28h1v1h-1z" fill="#370099"/><path d="M25 28h1v1h-1z" fill="#3f0099"/><path d="M26 28h1v1h-1z" fill="#460099"/><path d="M27 28h1v1h-1z" fill="#4e0099"/><path d="M28 28h1v1h-1z" fill="#509"/><path d="M29 28h1v1h-1z" fill="#5d0099"/><path d="M30 28h1v1h-1z" fill="#650099"/><path d="M31 28h1v1h-1z" fill="#6d0099"/><path d="M32 28h1v1h-1z" fill="#750099"/><path d="M33 28h1v1h-1z" fill="#7c0099"/><path d="M34 28h1v1h-1z" fill="#850099"/><path d="M35 28h1v1h-1z" fill="#8d0099"/><path d="M36 28h1v1h-1z" fill="#950099"/><path d="M37 28h1v1h-1z" fill="#990095"/><path d="M38 28h1v1h-1z" fill="#99008e"/><path d="M39 28h1v1h-1z" fill="#990087"/><path d="M40 28h1v1h-1z" fill="#990080"/><path d="M41 28h1v1h-1z" fill="#99007b"/><path d="M42 28h1v1h-1z" fill="#990075"/><path d="M8 29h1v1h-1z" fill="#001599"/><path d="M9 29h1v1h-1z" fill="#001399"/><path d="M10 29h1v1h-1z" fill="#001299"/><path d="M11 29h1v1h-1z" fill="#001099"/><path d="M12 29h1v1h-1z" fill="#000e99"/><path d="M13 29h1v1h-1z" fill="#000c99"/><path d="M14 29h1v1h-1z" fill="#000a99"/><path d="M15 29h1v1h-1z" fill="#000899"/><path d="M16 29h1v1h-1z" fill="#000699"/><path d="M17 29h1v1h-1z" fill="#030499"/><path d="M18 29h1v1h-1z" fill="#0a0299"/><path d="M19 29h1v1h-1z" fill="#110199"/><path d="M20 29h1v1h-1z" fill="#180099"/><path d="M21 29h1v1h-1z" fill="#1f0099"/><path d="M22 29h1v1h-1z" fill="#260099"/><path d="M23 29h1v1h-1z" fill="#2d0099"/><path d="M24 29h1v1h-1z" fill="#340099"/><path d="M25 29h1v1h-1z" fill="#3b0099"/><path d="M26 29h1v1h-1z" fill="#420099"/><path d="M27 29h1v1h-1z" fill="#490099"/><path d="M28 29h1v1h-1z" fill="#510099"/><path d="M29 29h1v1h-1z" fill="#580099"/><path d="M30 29h1v1h-1z" fill="#5f0099"/><path d="M31 29h1v1h-1z" fill="#670099"/><path d="M32 29h1v1h-1z" fill="#6e0099"/><path d="M33 29h1v1h-1z" fill="#760099"/><path d="M34 29h1v1h-1z" fill="#7e0099"/><path d="M35 29h1v1h-1z" fill="#850099"/><path d="M36 29h1v1h-1z" fill="#8d0099"/><path d="M37 29h1v1h-1z" fill="#950099"/><path d="M38 29h1v1h-1z" fill="#990095"/><path d="M39 29h1v1h-1z" fill="#99008e"/><path d="M40 29h1v1h-1z" fill="#990087"/><path d="M41 29h1v1h-1z" fill="#990081"/><path d="M8 30h1v1h-1z" fill="#001399"/><path d="M9 30h1v1h-1z" fill="#019"/><path d="M10 30h1v1h-1z" fill="#000f99"/><path d="M11 30h1v1h-1z" fill="#000d99"/><path d="M12 30h1v1h-1z" fill="#000c99"/><path d="M13 30h1v1h-1z" fill="#000a99"/><path d="M14 30h1v1h-1z" fill="#000899"/><path d="M15 30h1v1h-1z" fill="#000699"/><path d="M16 30h1v1h-1z" fill="#000499"/><path d="M17 30h1v1h-1z" fill="#020299"/><path d="M18 30h1v1h-1z" fill="#090199"/><path d="M19 30h1v1h-1z" fill="#0f0099"/><path d="M20 30h1v1h-1z" fill="#160099"/><path d="M21 30h1v1h-1z" fill="#1c0099"/><path d="M22 30h1v1h-1z" fill="#230099"/><path d="M23 30h1v1h-1z" fill="#2a0099"/><path d="M24 30h1v1h-1z" fill="#310099"/><path d="M25 30h1v1h-1z" fill="#370099"/><path d="M26 30h1v1h-1z" fill="#3e0099"/><path d="M27 30h1v1h-1z" fill="#450099"/><path d="M28 30h1v1h-1z" fill="#4c0099"/><path d="M29 30h1v1h-1z" fill="#530099"/><path d="M30 30h1v1h-1z" fill="#5a0099"/><path d="M31 30h1v1h-1z" fill="#610099"/><path d="M32 30h1v1h-1z" fill="#690099"/><path d="M33 30h1v1h-1z" fill="#700099"/><path d="M34 30h1v1h-1z" fill="#709"/><path d="M35 30h1v1h-1z" fill="#7f0099"/><path d="M36 30h1v1h-1z" fill="#860099"/><path d="M37 30h1v1h-1z" fill="#8d0099"/><path d="M38 30h1v1h-1z" fill="#950099"/><path d="M39 30h1v1h-1z" fill="#990095"/><path d="M40 30h1v1h-1z" fill="#99008e"/><path d="M9 31h1v1h-1z" fill="#000e99"/><path d="M10 31h1v1h-1z" fill="#000d99"/><path d="M11 31h1v1h-1z" fill="#000b99"/><path d="M12 31h1v1h-1z" fill="#000999"/><path d="M13 31h1v1h-1z" fill="#000899"/><path d="M14 31h1v1h-1z" fill="#000699"/><path d="M15 31h1v1h-1z" fill="#000499"/><path d="M16 31h1v1h-1z" fill="#000299"/><path d="M17 31h1v1h-1z" fill="#010199"/><path d="M18 31h1v1h-1z" fill="#070099"/><path d="M19 31h1v1h-1z" fill="#0e0099"/><path d="M20 31h1v1h-1z" fill="#140099"/><path d="M21 31h1v1h-1z" fill="#1a0099"/><path d="M22 31h1v1h-1z" fill="#210099"/><path d="M23 31h1v1h-1z" fill="#270099"/><path d="M24 31h1v1h-1z" fill="#2e0099"/><path d="M25 31h1v1h-1z" fill="#340099"/><path d="M26 31h1v1h-1z" fill="#3b0099"/><path d="M27 31h1v1h-1z" fill="#410099"/><path d="M28 31h1v1h-1z" fill="#480099"/><path d="M29 31h1v1h-1z" fill="#4f0099"/><path d="M30 31h1v1h-1z" fill="#560099"/><path d="M31 31h1v1h-1z" fill="#5c0099"/><path d="M32 31h1v1h-1z" fill="#630099"/><path d="M33 31h1v1h-1z" fill="#6a0099"/><path d="M34 31h1v1h-1z" fill="#710099"/><path d="M35 31h1v1h-1z" fill="#780099"/><path d="M36 31h1v1h-1z" fill="#7f0099"/><path d="M37 31h1v1h-1z" fill="#870099"/><path d="M38 31h1v1h-1z" fill="#8e0099"/><path d="M39 31h1v1h-1z" fill="#950099"/><path d="M10 32h1v1h-1z" fill="#000b99"/><path d="M11 32h1v1h-1z" fill="#000999"/><path d="M12 32h1v1h-1z" fill="#000799"/><path d="M13 32h1v1h-1z" fill="#000699"/><path d="M14 32h1v1h-1z" fill="#000499"/><path d="M15 32h1v1h-1z" fill="#000299"/><path d="M16 32h1v1h-1z" fill="#000199"/><path d="M17 32h1v1h-1z" fill="#009"/><path d="M18 32h1v1h-1z" fill="#060099"/><path d="M19 32h1v1h-1z" fill="#0c0099"/><path d="M20 32h1v1h-1z" fill="#120099"/><path d="M21 32h1v1h-1z" fill="#180099"/><path d="M22 32h1v1h-1z" fill="#1e0099"/><path d="M23 32h1v1h-1z" fill="#250099"/><path d="M24 32h1v1h-1z" fill="#2b0099"/><path d="M25 32h1v1h-1z" fill="#310099"/><path d="M26 32h1v1h-1z" fill="#380099"/><path d="M27 32h1v1h-1z" fill="#3e0099"/><path d="M28 32h1v1h-1z" fill="#409"/><path d="M29 32h1v1h-1z" fill="#4b0099"/><path d="M30 32h1v1h-1z" fill="#510099"/><path d="M31 32h1v1h-1z" fill="#580099"/><path d="M32 32h1v1h-1z" fill="#5f0099"/><path d="M33 32h1v1h-1z" fill="#650099"/><path d="M34 32h1v1h-1z" fill="#6c0099"/><path d="M35 32h1v1h-1z" fill="#730099"/><path d="M36 32h1v1h-1z" fill="#790099"/><path d="M37 32h1v1h-1z" fill="#800099"/><path d="M38 32h1v1h-1z" fill="#870099"/><path d="M10 33h1v1h-1z" fill="#000999"/><path d="M11 33h1v1h-1z" fill="#000799"/><path d="M12 33h1v1h-1z" fill="#000599"/><path d="M13 33h1v1h-1z" fill="#000499"/><path d="M14 33h1v1h-1z" fill="#000299"/><path d="M15 33h1v1h-1z" fill="#000199"/><path d="M16 33h1v1h-1z" fill="#009"/><path d="M17 33h1v1h-1z" fill="#009"/><path d="M18 33h1v1h-1z" fill="#050099"/><path d="M19 33h1v1h-1z" fill="#0b0099"/><path d="M20 33h1v1h-1z" fill="#109"/><path d="M21 33h1v1h-1z" fill="#160099"/><path d="M22 33h1v1h-1z" fill="#1c0099"/><path d="M23 33h1v1h-1z" fill="#209"/><path d="M24 33h1v1h-1z" fill="#280099"/><path d="M25 33h1v1h-1z" fill="#2e0099"/><path d="M26 33h1v1h-1z" fill="#350099"/><path d="M27 33h1v1h-1z" fill="#3b0099"/><path d="M28 33h1v1h-1z" fill="#410099"/><path d="M29 33h1v1h-1z" fill="#470099"/><path d="M30 33h1v1h-1z" fill="#4d0099"/><path d="M31 33h1v1h-1z" fill="#540099"/><path d="M32 33h1v1h-1z" fill="#5a0099"/><path d="M33 33h1v1h-1z" fill="#600099"/><path d="M34 33h1v1h-1z" fill="#670099"/><path d="M35 33h1v1h-1z" fill="#6d0099"/><path d="M36 33h1v1h-1z" fill="#740099"/><path d="M37 33h1v1h-1z" fill="#7b0099"/><path d="M11 34h1v1h-1z" fill="#000599"/><path d="M12 34h1v1h-1z" fill="#000499"/><path d="M13 34h1v1h-1z" fill="#000299"/><path d="M14 34h1v1h-1z" fill="#000199"/><path d="M15 34h1v1h-1z" fill="#009"/><path d="M16 34h1v1h-1z" fill="#009"/><path d="M17 34h1v1h-1z" fill="#009"/><path d="M18 34h1v1h-1z" fill="#040099"/><path d="M19 34h1v1h-1z" fill="#090099"/><path d="M20 34h1v1h-1z" fill="#0f0099"/><path d="M21 34h1v1h-1z" fill="#150099"/><path d="M22 34h1v1h-1z" fill="#1b0099"/><path d="M23 34h1v1h-1z" fill="#200099"/><path d="M24 34h1v1h-1z" fill="#260099"/><path d="M25 34h1v1h-1z" fill="#2c0099"/><path d="M26 34h1v1h-1z" fill="#320099"/><path d="M27 34h1v1h-1z" fill="#380099"/><path d="M28 34h1v1h-1z" fill="#3e0099"/><path d="M29 34h1v1h-1z" fill="#409"/><path d="M30 34h1v1h-1z" fill="#4a0099"/><path d="M31 34h1v1h-1z" fill="#500099"/><path d="M32 34h1v1h-1z" fill="#560099"/><path d="M33 34h1v1h-1z" fill="#5c0099"/><path d="M34 34h1v1h-1z" fill="#620099"/><path d="M35 34h1v1h-1z" fill="#680099"/><path d="M36 34h1v1h-1z" fill="#6f0099"/><path d="M12 35h1v1h-1z" fill="#000299"/><path d="M13 35h1v1h-1z" fill="#000199"/><path d="M14 35h1v1h-1z" fill="#009"/><path d="M15 35h1v1h-1z" fill="#009"/><path d="M16 35h1v1h-1z" fill="#009"/><path d="M17 35h1v1h-1z" fill="#009"/><path d="M18 35h1v1h-1z" fill="#030099"/><path d="M19 35h1v1h-1z" fill="#080099"/><path d="M20 35h1v1h-1z" fill="#0e0099"/><path d="M21 35h1v1h-1z" fill="#130099"/><path d="M22 35h1v1h-1z" fill="#190099"/><path d="M23 35h1v1h-1z" fill="#1e0099"/><path d="M24 35h1v1h-1z" fill="#240099"/><path d="M25 35h1v1h-1z" fill="#2a0099"/><path d="M26 35h1v1h-1z" fill="#2f0099"/><path d="M27 35h1v1h-1z" fill="#350099"/><path d="M28 35h1v1h-1z" fill="#3b0099"/><path d="M29 35h1v1h-1z" fill="#400099"/><path d="M30 35h1v1h-1z" fill="#460099"/><path d="M31 35h1v1h-1z" fill="#4c0099"/><path d="M32 35h1v1h-1z" fill="#520099"/><path d="M33 35h1v1h-1z" fill="#580099"/><path d="M34 35h1v1h-1z" fill="#5e0099"/><path d="M35 35h1v1h-1z" fill="#640099"/><path d="M13 36h1v1h-1z" fill="#009"/><path d="M14 36h1v1h-1z" fill="#009"/><path d="M15 36h1v1h-1z" fill="#009"/><path d="M16 36h1v1h-1z" fill="#009"/><path d="M17 36h1v1h-1z" fill="#009"/><path d="M18 36h1v1h-1z" fill="#020099"/><path d="M19 36h1v1h-1z" fill="#070099"/><path d="M20 36h1v1h-1z" fill="#0c0099"/><path d="M21 36h1v1h-1z" fill="#120099"/><path d="M22 36h1v1h-1z" fill="#170099"/><path d="M23 36h1v1h-1z" fill="#1c0099"/><path d="M24 36h1v1h-1z" fill="#209"/><path d="M25 36h1v1h-1z" fill="#270099"/><path d="M26 36h1v1h-1z" fill="#2d0099"/><path d="M27 36h1v1h-1z" fill="#320099"/><path d="M28 36h1v1h-1z" fill="#380099"/><path d="M29 36h1v1h-1z" fill="#3d0099"/><path d="M30 36h1v1h-1z" fill="#430099"/><path d="M31 36h1v1h-1z" fill="#490099"/><path d="M32 36h1v1h-1z" fill="#4e0099"/><path d="M33 36h1v1h-1z" fill="#540099"/><path d="M34 36h1v1h-1z" fill="#5a0099"/><path d="M14 37h1v1h-1z" fill="#009"/><path d="M15 37h1v1h-1z" fill="#009"/><path d="M16 37h1v1h-1z" fill="#009"/><path d="M17 37h1v1h-1z" fill="#009"/><path d="M18 37h1v1h-1z" fill="#010099"/><path d="M19 37h1v1h-1z" fill="#060099"/><path d="M20 37h1v1h-1z" fill="#0b0099"/><path d="M21 37h1v1h-1z" fill="#100099"/><path d="M22 37h1v1h-1z" fill="#160099"/><path d="M23 37h1v1h-1z" fill="#1b0099"/><path d="M24 37h1v1h-1z" fill="#200099"/><path d="M25 37h1v1h-1z" fill="#250099"/><path d="M26 37h1v1h-1z" fill="#2b0099"/><path d="M27 37h1v1h-1z" fill="#300099"/><path d="M28 37h1v1h-1z" fill="#350099"/><path d="M29 37h1v1h-1z" fill="#3b0099"/><path d="M30 37h1v1h-1z" fill="#400099"/><path d="M31 37h1v1h-1z" fill="#460099"/><path d="M32 37h1v1h-1z" fill="#4b0099"/><path d="M33 37h1v1h-1z" fill="#510099"/><path d="M14 38h1v1h-1z" fill="#009"/><path d="M15 38h1v1h-1z" fill="#009"/><path d="M16 38h1v1h-1z" fill="#009"/><path d="M17 38h1v1h-1z" fill="#009"/><path d="M18 38h1v1h-1z" fill="#009"/><path d="M19 38h1v1h-1z" fill="#050099"/><path d="M20 38h1v1h-1z" fill="#0a0099"/><path d="M21 38h1v1h-1z" fill="#0f0099"/><path d="M22 38h1v1h-1z" fill="#140099"/><path d="M23 38h1v1h-1z" fill="#190099"/><path d="M24 38h1v1h-1z" fill="#1e0099"/><path d="M25 38h1v1h-1z" fill="#230099"/><path d="M26 38h1v1h-1z" fill="#280099"/><path d="M27 38h1v1h-1z" fill="#2e0099"/><path d="M28 38h1v1h-1z" fill="#309"/><path d="M29 38h1v1h-1z" fill="#380099"/><path d="M30 38h1v1h-1z" fill="#3d0099"/><path d="M31 38h1v1h-1z" fill="#430099"/><path d="M32 38h1v1h-1z" fill="#480099"/><path d="M15 39h1v1h-1z" fill="#009"/><path d="M16 39h1v1h-1z" fill="#009"/><path d="M17 39h1v1h-1z" fill="#009"/><path d="M18 39h1v1h-1z" fill="#009"/><path d="M19 39h1v1h-1z" fill="#040099"/><path d="M20 39h1v1h-1z" fill="#090099"/><path d="M21 39h1v1h-1z" fill="#0e0099"/><path d="M22 39h1v1h-1z" fill="#130099"/><path d="M23 39h1v1h-1z" fill="#180099"/><path d="M24 39h1v1h-1z" fill="#1d0099"/><path d="M25 39h1v1h-1z" fill="#210099"/><path d="M26 39h1v1h-1z" fill="#260099"/><path d="M27 39h1v1h-1z" fill="#2b0099"/><path d="M28 39h1v1h-1z" fill="#300099"/><path d="M29 39h1v1h-1z" fill="#360099"/><path d="M30 39h1v1h-1z" fill="#3b0099"/><path d="M31 39h1v1h-1z" fill="#400099"/><path d="M17 40h1v1h-1z" fill="#009"/><path d="M18 40h1v1h-1z" fill="#009"/><path d="M19 40h1v1h-1z" fill="#030099"/><path d="M20 40h1v1h-1z" fill="#080099"/><path d="M21 40h1v1h-1z" fill="#0d0099"/><path d="M22 40h1v1h-1z" fill="#109"/><path d="M23 40h1v1h-1z" fill="#160099"/><path d="M24 40h1v1h-1z" fill="#1b0099"/><path d="M25 40h1v1h-1z" fill="#200099"/><path d="M26 40h1v1h-1z" fill="#250099"/><path d="M27 40h1v1h-1z" fill="#290099"/><path d="M28 40h1v1h-1z" fill="#2e0099"/><path d="M29 40h1v1h-1z" fill="#309"/><path d="M30 40h1v1h-1z" fill="#380099"/><path d="M18 41h1v1h-1z" fill="#009"/><path d="M19 41h1v1h-1z" fill="#020099"/><path d="M20 41h1v1h-1z" fill="#070099"/><path d="M21 41h1v1h-1z" fill="#0c0099"/><path d="M22 41h1v1h-1z" fill="#100099"/><path d="M23 41h1v1h-1z" fill="#150099"/><path d="M24 41h1v1h-1z" fill="#190099"/><path d="M25 41h1v1h-1z" fill="#1e0099"/><path d="M26 41h1v1h-1z" fill="#230099"/><path d="M27 41h1v1h-1z" fill="#270099"/><path d="M28 41h1v1h-1z" fill="#2c0099"/><path d="M29 41h1v1h-1z" fill="#310099"/><path d="M19 42h1v1h-1z" fill="#020099"/><path d="M20 42h1v1h-1z" fill="#060099"/><path d="M21 42h1v1h-1z" fill="#0b0099"/><path d="M22 42h1v1h-1z" fill="#0f0099"/><path d="M23 42h1v1h-1z" fill="#140099"/><path d="M24 42h1v1h-1z" fill="#180099"/><path d="M25 42h1v1h-1z" fill="#1d0099"/><path d="M26 42h1v1h-1z" fill="#209"/><path d="M27 42h1v1h-1z" fill="#260099"/><path d="M28 42h1v1h-1z" fill="#2b0099"/><path d="M20 43h1v1h-1z" fill="#060099"/><path d="M21 43h1v1h-1z" fill="#0b0099"/><path d="M22 43h1v1h-1z" fill="#0f0099"/><path d="M23 43h1v1h-1z" fill="#140099"/><path d="M24 43h1v1h-1z" fill="#180099"/><path d="M25 43h1v1h-1z" fill="#1d0099"/><path d="M26 43h1v1h-1z" fill="#209"/><path d="M27 43h1v1h-1z" fill="#260099"/>
</g></g></g>
<g clip-path="url(#ct)"><g filter="url(#bl2)"><g class="m" transform="translate(1172,34) scale(10)">
<path d="M12 1h1v1h-1z" fill="#0f0"/><path d="M13 1h1v1h-1z" fill="#0f0"/><path d="M14 1h1v1h-1z" fill="#0f0"/><path d="M15 1h1v1h-1z" fill="#0dff00"/><path d="M16 1h1v1h-1z" fill="#24ff00"/><path d="M17 1h1v1h-1z" fill="#3aff00"/><path d="M18 1h1v1h-1z" fill="#51ff00"/><path d="M19 1h1v1h-1z" fill="#68ff00"/><path d="M20 1h1v1h-1z" fill="#80ff00"/><path d="M21 1h1v1h-1z" fill="#98ff00"/><path d="M22 1h1v1h-1z" fill="#b1ff00"/><path d="M23 1h1v1h-1z" fill="#cf0"/><path d="M24 1h1v1h-1z" fill="#e7ff00"/><path d="M25 1h1v1h-1z" fill="#fffb00"/><path d="M12 2h1v1h-1z" fill="#0f0"/><path d="M13 2h1v1h-1z" fill="#0f0"/><path d="M14 2h1v1h-1z" fill="#0f0"/><path d="M15 2h1v1h-1z" fill="#09ff00"/><path d="M16 2h1v1h-1z" fill="#21ff00"/><path d="M17 2h1v1h-1z" fill="#38ff00"/><path d="M18 2h1v1h-1z" fill="#4fff00"/><path d="M19 2h1v1h-1z" fill="#67ff00"/><path d="M20 2h1v1h-1z" fill="#7fff00"/><path d="M21 2h1v1h-1z" fill="#98ff00"/><path d="M22 2h1v1h-1z" fill="#b2ff00"/><path d="M23 2h1v1h-1z" fill="#cdff00"/><path d="M24 2h1v1h-1z" fill="#e9ff00"/><path d="M25 2h1v1h-1z" fill="#fff800"/><path d="M26 2h1v1h-1z" fill="#ffde00"/><path d="M27 2h1v1h-1z" fill="#ffc800"/><path d="M28 2h1v1h-1z" fill="#ffb500"/><path d="M29 2h1v1h-1z" fill="#ffa500"/><path d="M30 2h1v1h-1z" fill="#ff9600"/><path d="M31 2h1v1h-1z" fill="#ff8a00"/><path d="M32 2h1v1h-1z" fill="#ff7e00"/><path d="M33 2h1v1h-1z" fill="#ff7400"/><path d="M34 2h1v1h-1z" fill="#ff6b00"/><path d="M35 2h1v1h-1z" fill="#ff6200"/><path d="M12 3h1v1h-1z" fill="#00ff03"/><path d="M13 3h1v1h-1z" fill="#0f0"/><path d="M14 3h1v1h-1z" fill="#0f0"/><path d="M15 3h1v1h-1z" fill="#05ff00"/><path d="M16 3h1v1h-1z" fill="#1eff00"/><path d="M17 3h1v1h-1z" fill="#36ff00"/><path d="M18 3h1v1h-1z" fill="#4dff00"/><path d="M19 3h1v1h-1z" fill="#6f0"/><path d="M20 3h1v1h-1z" fill="#7eff00"/><path d="M21 3h1v1h-1z" fill="#98ff00"/><path d="M22 3h1v1h-1z" fill="#b3ff00"/><path d="M23 3h1v1h-1z" fill="#ceff00"/><path d="M24 3h1v1h-1z" fill="#ebff00"/><path d="M25 3h1v1h-1z" fill="#fff500"/><path d="M26 3h1v1h-1z" fill="#ffdb00"/><path d="M27 3h1v1h-1z" fill="#ffc500"/><path d="M28 3h1v1h-1z" fill="#ffb200"/><path d="M29 3h1v1h-1z" fill="#ffa200"/><path d="M30 3h1v1h-1z" fill="#ff9300"/><path d="M31 3h1v1h-1z" fill="#ff8700"/><path d="M32 3h1v1h-1z" fill="#ff7b00"/><path d="M33 3h1v1h-1z" fill="#ff7100"/><path d="M34 3h1v1h-1z" fill="#ff6800"/><path d="M35 3h1v1h-1z" fill="#ff6000"/><path d="M36 3h1v1h-1z" fill="#ff5800"/><path d="M37 3h1v1h-1z" fill="#ff5100"/><path d="M38 3h1v1h-1z" fill="#ff4b00"/><path d="M39 3h1v1h-1z" fill="#ff4500"/><path d="M40 3h1v1h-1z" fill="#ff3f00"/><path d="M41 3h1v1h-1z" fill="#ff3a00"/><path d="M42 3h1v1h-1z" fill="#ff3500"/><path d="M43 3h1v1h-1z" fill="#ff3100"/><path d="M44 3h1v1h-1z" fill="#ff2c00"/><path d="M45 3h1v1h-1z" fill="#ff2800"/><path d="M46 3h1v1h-1z" fill="#ff2500"/><path d="M12 4h1v1h-1z" fill="#00ff19"/><path d="M13 4h1v1h-1z" fill="#00ff18"/><path d="M14 4h1v1h-1z" fill="#00ff16"/><path d="M15 4h1v1h-1z" fill="#00ff14"/><path d="M16 4h1v1h-1z" fill="#1bff13"/><path d="M17 4h1v1h-1z" fill="#3f1"/><path d="M18 4h1v1h-1z" fill="#4cff0f"/><path d="M19 4h1v1h-1z" fill="#64ff0d"/><path d="M20 4h1v1h-1z" fill="#7eff0b"/><path d="M21 4h1v1h-1z" fill="#98ff08"/><path d="M22 4h1v1h-1z" fill="#b3ff06"/><path d="M23 4h1v1h-1z" fill="#d0ff03"/><path d="M24 4h1v1h-1z" fill="#edff00"/><path d="M25 4h1v1h-1z" fill="#fff200"/><path d="M26 4h1v1h-1z" fill="#ffd800"/><path d="M27 4h1v1h-1z" fill="#ffc200"/><path d="M28 4h1v1h-1z" fill="#ffaf00"/><path d="M29 4h1v1h-1z" fill="#ff9f00"/><path d="M30 4h1v1h-1z" fill="#ff9000"/><path d="M31 4h1v1h-1z" fill="#ff8300"/><path d="M32 4h1v1h-1z" fill="#ff7800"/><path d="M33 4h1v1h-1z" fill="#ff6e00"/><path d="M34 4h1v1h-1z" fill="#ff6500"/><path d="M35 4h1v1h-1z" fill="#ff5d00"/><path d="M36 4h1v1h-1z" fill="#f50"/><path d="M37 4h1v1h-1z" fill="#ff4e00"/><path d="M38 4h1v1h-1z" fill="#ff4800"/><path d="M39 4h1v1h-1z" fill="#ff4200"/><path d="M40 4h1v1h-1z" fill="#ff3c00"/><path d="M41 4h1v1h-1z" fill="#ff3700"/><path d="M42 4h1v1h-1z" fill="#f30"/><path d="M43 4h1v1h-1z" fill="#ff2e00"/><path d="M44 4h1v1h-1z" fill="#ff2a00"/><path d="M45 4h1v1h-1z" fill="#ff2600"/><path d="M46 4h1v1h-1z" fill="#f20"/><path d="M47 4h1v1h-1z" fill="#ff1f00"/><path d="M48 4h1v1h-1z" fill="#ff1b00"/><path d="M49 4h1v1h-1z" fill="#ff1800"/><path d="M50 4h1v1h-1z" fill="#ff1500"/><path d="M51 4h1v1h-1z" fill="#ff1200"/><path d="M52 4h1v1h-1z" fill="#ff0f00"/><path d="M53 4h1v1h-1z" fill="#ff0d00"/><path d="M54 4h1v1h-1z" fill="#ff0a00"/><path d="M55 4h1v1h-1z" fill="#ff0700"/><path d="M56 4h1v1h-1z" fill="#ff0500"/><path d="M12 5h1v1h-1z" fill="#00ff2e"/><path d="M13 5h1v1h-1z" fill="#00ff2d"/><path d="M14 5h1v1h-1z" fill="#00ff2c"/><path d="M15 5h1v1h-1z" fill="#00ff2b"/><path d="M16 5h1v1h-1z" fill="#17ff2a"/><path d="M17 5h1v1h-1z" fill="#30ff29"/><path d="M18 5h1v1h-1z" fill="#49ff27"/><path d="M19 5h1v1h-1z" fill="#63ff26"/><path d="M20 5h1v1h-1z" fill="#7dff25"/><path d="M21 5h1v1h-1z" fill="#98ff23"/><path d="M22 5h1v1h-1z" fill="#b4ff22"/><path d="M23 5h1v1h-1z" fill="#d1ff20"/><path d="M24 5h1v1h-1z" fill="#f0ff1f"/><path d="M25 5h1v1h-1z" fill="#ffef1b"/><path d="M26 5h1v1h-1z" fill="#ffd516"/><path d="M27 5h1v1h-1z" fill="#ffbf12"/><path d="M28 5h1v1h-1z" fill="#ffac0f"/><path d="M29 5h1v1h-1z" fill="#ff9b0c"/><path d="M30 5h1v1h-1z" fill="#ff8d09"/><path d="M31 5h1v1h-1z" fill="#ff8007"/><path d="M32 5h1v1h-1z" fill="#ff7505"/><path d="M33 5h1v1h-1z" fill="#ff6b03"/><path d="M34 5h1v1h-1z" fill="#ff6201"/><path d="M35 5h1v1h-1z" fill="#ff5a00"/><path d="M36 5h1v1h-1z" fill="#ff5200"/><path d="M37 5h1v1h-1z" fill="#ff4b00"/><path d="M38 5h1v1h-1z" fill="#ff4500"/><path d="M39 5h1v1h-1z" fill="#ff3f00"/><path d="M40 5h1v1h-1z" fill="#ff3a00"/><path d="M41 5h1v1h-1z" fill="#ff3500"/><path d="M42 5h1v1h-1z" fill="#ff3000"/><path d="M43 5h1v1h-1z" fill="#ff2c00"/><path d="M44 5h1v1h-1z" fill="#ff2700"/><path d="M45 5h1v1h-1z" fill="#ff2300"/><path d="M46 5h1v1h-1z" fill="#ff2000"/><path d="M47 5h1v1h-1z" fill="#ff1c00"/><path d="M48 5h1v1h-1z" fill="#ff1900"/><path d="M49 5h1v1h-1z" fill="#ff1600"/><path d="M50 5h1v1h-1z" fill="#ff1300"/><path d="M51 5h1v1h-1z" fill="#ff1000"/><path d="M52 5h1v1h-1z" fill="#ff0d00"/><path d="M53 5h1v1h-1z" fill="#ff0a00"/><path d="M54 5h1v1h-1z" fill="#ff0800"/><path d="M55 5h1v1h-1z" fill="#ff0500"/><path d="M56 5h1v1h-1z" fill="#ff0200"/><path d="M57 5h1v1h-1z" fill="#f00"/><path d="M12 6h1v1h-1z" fill="#00ff43"/><path d="M13 6h1v1h-1z" fill="#00ff42"/><path d="M14 6h1v1h-1z" fill="#00ff42"/><path d="M15 6h1v1h-1z" fill="#00ff41"/><path d="M16 6h1v1h-1z" fill="#14ff41"/><path d="M17 6h1v1h-1z" fill="#2eff40"/><path d="M18 6h1v1h-1z" fill="#47ff40"/><path d="M19 6h1v1h-1z" fill="#61ff3f"/><path d="M20 6h1v1h-1z" fill="#7cff3e"/><path d="M21 6h1v1h-1z" fill="#98ff3e"/><path d="M22 6h1v1h-1z" fill="#b5ff3d"/><path d="M23 6h1v1h-1z" fill="#d3ff3c"/><path d="M24 6h1v1h-1z" fill="#f2ff3b"/><path d="M25 6h1v1h-1z" fill="#ffec36"/><path d="M26 6h1v1h-1z" fill="#ffd12f"/><path d="M27 6h1v1h-1z" fill="#ffbb2a"/><path d="M28 6h1v1h-1z" fill="#ffa825"/><path d="M29 6h1v1h-1z" fill="#ff9820"/><path d="M30 6h1v1h-1z" fill="#ff8a1d"/><path d="M31 6h1v1h-1z" fill="#ff7d19"/><path d="M32 6h1v1h-1z" fill="#ff7216"/><path d="M33 6h1v1h-1z" fill="#ff6814"/><path d="M34 6h1v1h-1z" fill="#ff5f11"/><path d="M35 6h1v1h-1z" fill="#ff570f"/><path d="M36 6h1v1h-1z" fill="#ff4f0d"/><path d="M37 6h1v1h-1z" fill="#ff480b"/><path d="M38 6h1v1h-1z" fill="#ff420a"/><path d="M39 6h1v1h-1z" fill="#ff3c08"/><path d="M40 6h1v1h-1z" fill="#ff3707"/><path d="M41 6h1v1h-1z" fill="#ff3205"/><path d="M42 6h1v1h-1z" fill="#ff2d04"/><path d="M43 6h1v1h-1z" fill="#ff2903"/><path d="M44 6h1v1h-1z" fill="#ff2502"/><path d="M45 6h1v1h-1z" fill="#ff2100"/><path d="M46 6h1v1h-1z" fill="#ff1d00"/><path d="M47 6h1v1h-1z" fill="#ff1a00"/><path d="M48 6h1v1h-1z" fill="#ff1600"/><path d="M49 6h1v1h-1z" fill="#ff1300"/><path d="M50 6h1v1h-1z" fill="#ff1000"/><path d="M51 6h1v1h-1z" fill="#ff0d00"/><path d="M52 6h1v1h-1z" fill="#ff0b00"/><path d="M53 6h1v1h-1z" fill="#ff0800"/><path d="M54 6h1v1h-1z" fill="#ff0500"/><path d="M55 6h1v1h-1z" fill="#ff0200"/><path d="M56 6h1v1h-1z" fill="#f00"/><path d="M57 6h1v1h-1z" fill="#f00"/><path d="M13 7h1v1h-1z" fill="#00ff58"/><path d="M14 7h1v1h-1z" fill="#00ff58"/><path d="M15 7h1v1h-1z" fill="#00ff58"/><path d="M16 7h1v1h-1z" fill="#10ff58"/><path d="M17 7h1v1h-1z" fill="#2bff58"/><path d="M18 7h1v1h-1z" fill="#45ff58"/><path d="M19 7h1v1h-1z" fill="#60ff58"/><path d="M20 7h1v1h-1z" fill="#7bff58"/><path d="M21 7h1v1h-1z" fill="#98ff58"/><path d="M22 7h1v1h-1z" fill="#b6ff58"/><path d="M23 7h1v1h-1z" fill="#d5ff58"/><path d="M24 7h1v1h-1z" fill="#f5ff59"/><path d="M25 7h1v1h-1z" fill="#ffe951"/><path d="M26 7h1v1h-1z" fill="#ffce48"/><path d="M27 7h1v1h-1z" fill="#ffb840"/><path d="M28 7h1v1h-1z" fill="#ffa539"/><path d="M29 7h1v1h-1z" fill="#ff9434"/><path d="M30 7h1v1h-1z" fill="#ff862f"/><path d="M31 7h1v1h-1z" fill="#ff7a2b"/><path d="M32 7h1v1h-1z" fill="#ff6f27"/><path d="M33 7h1v1h-1z" fill="#ff6523"/><path d="M34 7h1v1h-1z" fill="#ff5c20"/><path d="M35 7h1v1h-1z" fill="#ff541e"/><path d="M36 7h1v1h-1z" fill="#ff4c1b"/><path d="M37 7h1v1h-1z" fill="#ff4519"/><path d="M38 7h1v1h-1z" fill="#ff3f17"/><path d="M39 7h1v1h-1z" fill="#ff3915"/><path d="M40 7h1v1h-1z" fill="#ff3413"/><path d="M41 7h1v1h-1z" fill="#ff2f11"/><path d="M42 7h1v1h-1z" fill="#ff2b0f"/><path d="M43 7h1v1h-1z" fill="#ff260e"/><path d="M44 7h1v1h-1z" fill="#ff220d"/><path d="M45 7h1v1h-1z" fill="#ff1e0b"/><path d="M46 7h1v1h-1z" fill="#ff1b0a"/><path d="M47 7h1v1h-1z" fill="#ff1709"/><path d="M48 7h1v1h-1z" fill="#ff1408"/><path d="M49 7h1v1h-1z" fill="#ff1107"/><path d="M50 7h1v1h-1z" fill="#ff0e06"/><path d="M51 7h1v1h-1z" fill="#ff0b05"/><path d="M52 7h1v1h-1z" fill="#ff0804"/><path d="M53 7h1v1h-1z" fill="#ff0503"/><path d="M54 7h1v1h-1z" fill="#ff0302"/><path d="M55 7h1v1h-1z" fill="#ff0001"/><path d="M56 7h1v1h-1z" fill="#f00"/><path d="M57 7h1v1h-1z" fill="#f00"/><path d="M13 8h1v1h-1z" fill="#00ff6e"/><path d="M14 8h1v1h-1z" fill="#00ff6e"/><path d="M15 8h1v1h-1z" fill="#00ff6f"/><path d="M16 8h1v1h-1z" fill="#0bff70"/><path d="M17 8h1v1h-1z" fill="#27ff70"/><path d="M18 8h1v1h-1z" fill="#43ff71"/><path d="M19 8h1v1h-1z" fill="#5eff72"/><path d="M20 8h1v1h-1z" fill="#7aff73"/><path d="M21 8h1v1h-1z" fill="#98ff74"/><path d="M22 8h1v1h-1z" fill="#b6ff75"/><path d="M23 8h1v1h-1z" fill="#d7ff76"/><path d="M24 8h1v1h-1z" fill="#f8ff77"/><path d="M25 8h1v1h-1z" fill="#ffe56c"/><path d="M26 8h1v1h-1z" fill="#ffca60"/><path d="M27 8h1v1h-1z" fill="#ffb456"/><path d="M28 8h1v1h-1z" fill="#ffa14e"/><path d="M29 8h1v1h-1z" fill="#ff9147"/><path d="M30 8h1v1h-1z" fill="#ff8341"/><path d="M31 8h1v1h-1z" fill="#ff763c"/><path d="M32 8h1v1h-1z" fill="#ff6b37"/><path d="M33 8h1v1h-1z" fill="#ff6133"/><path d="M34 8h1v1h-1z" fill="#ff582f"/><path d="M35 8h1v1h-1z" fill="#ff502b"/><path d="M36 8h1v1h-1z" fill="#ff4928"/><path d="M37 8h1v1h-1z" fill="#ff4225"/><path d="M38 8h1v1h-1z" fill="#ff3c23"/><path d="M39 8h1v1h-1z" fill="#ff3720"/><path d="M40 8h1v1h-1z" fill="#ff311e"/><path d="M41 8h1v1h-1z" fill="#ff2c1c"/><path d="M42 8h1v1h-1z" fill="#ff281a"/><path d="M43 8h1v1h-1z" fill="#ff2418"/><path d="M44 8h1v1h-1z" fill="#ff2017"/><path d="M45 8h1v1h-1z" fill="#ff1c15"/><path d="M46 8h1v1h-1z" fill="#ff1814"/><path d="M47 8h1v1h-1z" fill="#ff1512"/><path d="M48 8h1v1h-1z" fill="#f11"/><path d="M49 8h1v1h-1z" fill="#ff0e10"/><path d="M50 8h1v1h-1z" fill="#ff0b0e"/><path d="M51 8h1v1h-1z" fill="#ff080d"/><path d="M52 8h1v1h-1z" fill="#ff060c"/><path d="M53 8h1v1h-1z" fill="#ff030b"/><path d="M54 8h1v1h-1z" fill="#ff000a"/><path d="M55 8h1v1h-1z" fill="#ff0009"/><path d="M56 8h1v1h-1z" fill="#ff0008"/><path d="M57 8h1v1h-1z" fill="#ff0007"/><path d="M13 9h1v1h-1z" fill="#00ff85"/><path d="M14 9h1v1h-1z" fill="#00ff86"/><path d="M15 9h1v1h-1z" fill="#00ff87"/><path d="M16 9h1v1h-1z" fill="#07ff88"/><path d="M17 9h1v1h-1z" fill="#24ff8a"/><path d="M18 9h1v1h-1z" fill="#40ff8b"/><path d="M19 9h1v1h-1z" fill="#5cff8d"/><path d="M20 9h1v1h-1z" fill="#7aff8e"/><path d="M21 9h1v1h-1z" fill="#98ff90"/><path d="M22 9h1v1h-1z" fill="#b7ff92"/><path d="M23 9h1v1h-1z" fill="#d8ff94"/><path d="M24 9h1v1h-1z" fill="#fbff96"/><path d="M25 9h1v1h-1z" fill="#ffe287"/><path d="M26 9h1v1h-1z" fill="#ffc778"/><path d="M27 9h1v1h-1z" fill="#ffb06d"/><path d="M28 9h1v1h-1z" fill="#ff9d63"/><path d="M29 9h1v1h-1z" fill="#ff8d5a"/><path d="M30 9h1v1h-1z" fill="#ff7f53"/><path d="M31 9h1v1h-1z" fill="#ff734c"/><path d="M32 9h1v1h-1z" fill="#ff6847"/><path d="M33 9h1v1h-1z" fill="#ff5e42"/><path d="M34 9h1v1h-1z" fill="#ff553d"/><path d="M35 9h1v1h-1z" fill="#ff4d39"/><path d="M36 9h1v1h-1z" fill="#ff4635"/><path d="M37 9h1v1h-1z" fill="#ff3f32"/><path d="M38 9h1v1h-1z" fill="#ff392f"/><path d="M39 9h1v1h-1z" fill="#ff342c"/><path d="M40 9h1v1h-1z" fill="#ff2e29"/><path d="M41 9h1v1h-1z" fill="#ff2a27"/><path d="M42 9h1v1h-1z" fill="#ff2524"/><path d="M43 9h1v1h-1z" fill="#ff2122"/><path d="M44 9h1v1h-1z" fill="#ff1d20"/><path d="M45 9h1v1h-1z" fill="#ff191e"/><path d="M46 9h1v1h-1z" fill="#ff151d"/><path d="M47 9h1v1h-1z" fill="#ff121b"/><path d="M48 9h1v1h-1z" fill="#ff0f19"/><path d="M49 9h1v1h-1z" fill="#ff0c18"/><path d="M50 9h1v1h-1z" fill="#ff0917"/><path d="M51 9h1v1h-1z" fill="#ff0615"/><path d="M52 9h1v1h-1z" fill="#ff0314"/><path d="M53 9h1v1h-1z" fill="#ff0013"/><path d="M54 9h1v1h-1z" fill="#ff0012"/><path d="M55 9h1v1h-1z" fill="#f01"/><path d="M56 9h1v1h-1z" fill="#ff0010"/><path d="M57 9h1v1h-1z" fill="#ff000f"/><path d="M13 10h1v1h-1z" fill="#00ff9c"/><path d="M14 10h1v1h-1z" fill="#00ff9e"/><path d="M15 10h1v1h-1z" fill="#00ffa0"/><path d="M16 10h1v1h-1z" fill="#01ffa2"/><path d="M17 10h1v1h-1z" fill="#20ffa4"/><path d="M18 10h1v1h-1z" fill="#3dffa6"/><path d="M19 10h1v1h-1z" fill="#5affa8"/><path d="M20 10h1v1h-1z" fill="#79ffab"/><path d="M21 10h1v1h-1z" fill="#98ffae"/><path d="M22 10h1v1h-1z" fill="#b8ffb0"/><path d="M23 10h1v1h-1z" fill="#dbffb3"/><path d="M24 10h1v1h-1z" fill="#ffffb7"/><path d="M25 10h1v1h-1z" fill="#ffdea2"/><path d="M26 10h1v1h-1z" fill="#ffc391"/><path d="M27 10h1v1h-1z" fill="#ffad83"/><path d="M28 10h1v1h-1z" fill="#ff9a77"/><path d="M29 10h1v1h-1z" fill="#ff896d"/><path d="M30 10h1v1h-1z" fill="#ff7b65"/><path d="M31 10h1v1h-1z" fill="#ff6f5d"/><path d="M32 10h1v1h-1z" fill="#ff6456"/><path d="M33 10h1v1h-1z" fill="#ff5a50"/><path d="M34 10h1v1h-1z" fill="#ff524b"/><path d="M35 10h1v1h-1z" fill="#ff4a46"/><path d="M36 10h1v1h-1z" fill="#ff4342"/><path d="M37 10h1v1h-1z" fill="#ff3c3e"/><path d="M38 10h1v1h-1z" fill="#ff363a"/><path d="M39 10h1v1h-1z" fill="#ff3137"/><path d="M40 10h1v1h-1z" fill="#ff2b34"/><path d="M41 10h1v1h-1z" fill="#ff2731"/><path d="M42 10h1v1h-1z" fill="#ff222f"/><path d="M43 10h1v1h-1z" fill="#ff1e2c"/><path d="M44 10h1v1h-1z" fill="#ff1a2a"/><path d="M45 10h1v1h-1z" fill="#ff1628"/><path d="M46 10h1v1h-1z" fill="#ff1326"/><path d="M47 10h1v1h-1z" fill="#ff0f24"/><path d="M48 10h1v1h-1z" fill="#ff0c22"/><path d="M49 10h1v1h-1z" fill="#ff0920"/><path d="M50 10h1v1h-1z" fill="#ff061f"/><path d="M51 10h1v1h-1z" fill="#ff031d"/><path d="M52 10h1v1h-1z" fill="#ff001c"/><path d="M53 10h1v1h-1z" fill="#ff001a"/><path d="M54 10h1v1h-1z" fill="#ff0019"/><path d="M55 10h1v1h-1z" fill="#ff0018"/><path d="M56 10h1v1h-1z" fill="#ff0017"/><path d="M57 10h1v1h-1z" fill="#ff0016"/><path d="M13 11h1v1h-1z" fill="#00ffb4"/><path d="M14 11h1v1h-1z" fill="#00ffb7"/><path d="M15 11h1v1h-1z" fill="#00ffb9"/><path d="M16 11h1v1h-1z" fill="#00ffbc"/><path d="M17 11h1v1h-1z" fill="#1cffbf"/><path d="M18 11h1v1h-1z" fill="#3affc2"/><path d="M19 11h1v1h-1z" fill="#58ffc5"/><path d="M20 11h1v1h-1z" fill="#77ffc9"/><path d="M21 11h1v1h-1z" fill="#98ffcd"/><path d="M22 11h1v1h-1z" fill="#b9ffd0"/><path d="M23 11h1v1h-1z" fill="#ddffd5"/><path d="M24 11h1v1h-1z" fill="#fffcd6"/><path d="M25 11h1v1h-1z" fill="#ffdabe"/><path d="M26 11h1v1h-1z" fill="#ffbfaa"/><path d="M27 11h1v1h-1z" fill="#ffa99a"/><path d="M28 11h1v1h-1z" fill="#ff968c"/><path d="M29 11h1v1h-1z" fill="#ff8681"/><path d="M30 11h1v1h-1z" fill="#ff7877"/><path d="M31 11h1v1h-1z" fill="#ff6b6e"/><path d="M32 11h1v1h-1z" fill="#ff6166"/><path d="M33 11h1v1h-1z" fill="#ff575f"/><path d="M34 11h1v1h-1z" fill="#ff4e59"/><path d="M35 11h1v1h-1z" fill="#ff4754"/><path d="M36 11h1v1h-1z" fill="#ff3f4f"/><path d="M37 11h1v1h-1z" fill="#ff394a"/><path d="M38 11h1v1h-1z" fill="#ff3346"/><path d="M39 11h1v1h-1z" fill="#ff2e42"/><path d="M40 11h1v1h-1z" fill="#ff283f"/><path d="M41 11h1v1h-1z" fill="#ff243c"/><path d="M42 11h1v1h-1z" fill="#ff1f39"/><path d="M43 11h1v1h-1z" fill="#ff1b36"/><path d="M44 11h1v1h-1z" fill="#ff1733"/><path d="M45 11h1v1h-1z" fill="#ff1331"/><path d="M46 11h1v1h-1z" fill="#ff102e"/><path d="M47 11h1v1h-1z" fill="#ff0d2c"/><path d="M48 11h1v1h-1z" fill="#ff092a"/><path d="M49 11h1v1h-1z" fill="#ff0628"/><path d="M50 11h1v1h-1z" fill="#ff0327"/><path d="M51 11h1v1h-1z" fill="#ff0025"/><path d="M52 11h1v1h-1z" fill="#ff0023"/><path d="M53 11h1v1h-1z" fill="#f02"/><path d="M54 11h1v1h-1z" fill="#ff0020"/><path d="M55 11h1v1h-1z" fill="#ff001f"/><path d="M56 11h1v1h-1z" fill="#ff001e"/><path d="M13 12h1v1h-1z" fill="#00ffcd"/><path d="M14 12h1v1h-1z" fill="#00ffd1"/><path d="M15 12h1v1h-1z" fill="#00ffd4"/><path d="M16 12h1v1h-1z" fill="#00ffd8"/><path d="M17 12h1v1h-1z" fill="#18ffdb"/><path d="M18 12h1v1h-1z" fill="#37ffdf"/><path d="M19 12h1v1h-1z" fill="#56ffe4"/><path d="M20 12h1v1h-1z" fill="#76ffe8"/><path d="M21 12h1v1h-1z" fill="#98ffed"/><path d="M22 12h1v1h-1z" fill="#bafff2"/><path d="M23 12h1v1h-1z" fill="#dffff8"/><path d="M24 12h1v1h-1z" fill="#fff8f7"/><path d="M25 12h1v1h-1z" fill="#ffd6db"/><path d="M26 12h1v1h-1z" fill="#ffbbc4"/><path d="M27 12h1v1h-1z" fill="#ffa5b1"/><path d="M28 12h1v1h-1z" fill="#ff92a2"/><path d="M29 12h1v1h-1z" fill="#ff8294"/><path d="M30 12h1v1h-1z" fill="#ff7489"/><path d="M31 12h1v1h-1z" fill="#ff687f"/><path d="M32 12h1v1h-1z" fill="#ff5d76"/><path d="M33 12h1v1h-1z" fill="#ff536e"/><path d="M34 12h1v1h-1z" fill="#ff4b68"/><path d="M35 12h1v1h-1z" fill="#ff4361"/><path d="M36 12h1v1h-1z" fill="#ff3c5c"/><path d="M37 12h1v1h-1z" fill="#ff3657"/><path d="M38 12h1v1h-1z" fill="#ff3052"/><path d="M39 12h1v1h-1z" fill="#ff2a4e"/><path d="M40 12h1v1h-1z" fill="#ff254a"/><path d="M41 12h1v1h-1z" fill="#ff2146"/><path d="M42 12h1v1h-1z" fill="#ff1c43"/><path d="M43 12h1v1h-1z" fill="#ff183f"/><path d="M44 12h1v1h-1z" fill="#ff143d"/><path d="M45 12h1v1h-1z" fill="#ff113a"/><path d="M46 12h1v1h-1z" fill="#ff0d37"/><path d="M47 12h1v1h-1z" fill="#ff0a35"/><path d="M48 12h1v1h-1z" fill="#ff0633"/><path d="M49 12h1v1h-1z" fill="#ff0330"/><path d="M50 12h1v1h-1z" fill="#ff002e"/><path d="M51 12h1v1h-1z" fill="#ff002d"/><path d="M52 12h1v1h-1z" fill="#ff002b"/><path d="M53 12h1v1h-1z" fill="#ff0029"/><path d="M54 12h1v1h-1z" fill="#ff0027"/><path d="M55 12h1v1h-1z" fill="#ff0026"/><path d="M14 13h1v1h-1z" fill="#00ffec"/><path d="M15 13h1v1h-1z" fill="#00fff0"/><path d="M16 13h1v1h-1z" fill="#00fff4"/><path d="M17 13h1v1h-1z" fill="#14fff9"/><path d="M18 13h1v1h-1z" fill="#34fffe"/><path d="M19 13h1v1h-1z" fill="#53fbff"/><path d="M20 13h1v1h-1z" fill="#71f5ff"/><path d="M21 13h1v1h-1z" fill="#8ef0ff"/><path d="M22 13h1v1h-1z" fill="#aceaff"/><path d="M23 13h1v1h-1z" fill="#cae4ff"/><path d="M24 13h1v1h-1z" fill="#e8deff"/><path d="M25 13h1v1h-1z" fill="#ffd2f8"/><path d="M26 13h1v1h-1z" fill="#ffb7de"/><path d="M27 13h1v1h-1z" fill="#ffa0c9"/><path d="M28 13h1v1h-1z" fill="#ff8eb7"/><path d="M29 13h1v1h-1z" fill="#ff7ea8"/><path d="M30 13h1v1h-1z" fill="#ff709b"/><path d="M31 13h1v1h-1z" fill="#ff6490"/><path d="M32 13h1v1h-1z" fill="#ff5986"/><path d="M33 13h1v1h-1z" fill="#ff507e"/><path d="M34 13h1v1h-1z" fill="#ff4776"/><path d="M35 13h1v1h-1z" fill="#ff406f"/><path d="M36 13h1v1h-1z" fill="#ff3968"/><path d="M37 13h1v1h-1z" fill="#ff3263"/><path d="M38 13h1v1h-1z" fill="#ff2c5e"/><path d="M39 13h1v1h-1z" fill="#ff2759"/><path d="M40 13h1v1h-1z" fill="#ff2254"/><path d="M41 13h1v1h-1z" fill="#ff1e50"/><path d="M42 13h1v1h-1z" fill="#ff194d"/><path d="M43 13h1v1h-1z" fill="#ff1549"/><path d="M44 13h1v1h-1z" fill="#ff1146"/><path d="M45 13h1v1h-1z" fill="#ff0e43"/><path d="M46 13h1v1h-1z" fill="#ff0a40"/><path d="M47 13h1v1h-1z" fill="#ff073d"/><path d="M48 13h1v1h-1z" fill="#ff033b"/><path d="M49 13h1v1h-1z" fill="#ff0038"/><path d="M50 13h1v1h-1z" fill="#ff0036"/><path d="M51 13h1v1h-1z" fill="#ff0034"/><path d="M52 13h1v1h-1z" fill="#ff0032"/><path d="M53 13h1v1h-1z" fill="#ff0030"/><path d="M54 13h1v1h-1z" fill="#ff002e"/><path d="M14 14h1v1h-1z" fill="#00f6ff"/><path d="M15 14h1v1h-1z" fill="#00f2ff"/><path d="M16 14h1v1h-1z" fill="#00edff"/><path d="M17 14h1v1h-1z" fill="#0de8ff"/><path d="M18 14h1v1h-1z" fill="#2be3ff"/><path d="M19 14h1v1h-1z" fill="#47deff"/><path d="M20 14h1v1h-1z" fill="#62d9ff"/><path d="M21 14h1v1h-1z" fill="#7ed3ff"/><path d="M22 14h1v1h-1z" fill="#99ceff"/><path d="M23 14h1v1h-1z" fill="#b4c8ff"/><path d="M24 14h1v1h-1z" fill="#cfc3ff"/><path d="M25 14h1v1h-1z" fill="#eabdff"/><path d="M26 14h1v1h-1z" fill="#ffb2f9"/><path d="M27 14h1v1h-1z" fill="#ff9ce1"/><path d="M28 14h1v1h-1z" fill="#ff89cd"/><path d="M29 14h1v1h-1z" fill="#ff79bc"/><path d="M30 14h1v1h-1z" fill="#ff6cae"/><path d="M31 14h1v1h-1z" fill="#ff60a1"/><path d="M32 14h1v1h-1z" fill="#ff5596"/><path d="M33 14h1v1h-1z" fill="#ff4c8d"/><path d="M34 14h1v1h-1z" fill="#ff4384"/><path d="M35 14h1v1h-1z" fill="#ff3c7c"/><path d="M36 14h1v1h-1z" fill="#ff3575"/><path d="M37 14h1v1h-1z" fill="#ff2f6f"/><path d="M38 14h1v1h-1z" fill="#ff2969"/><path d="M39 14h1v1h-1z" fill="#ff2464"/><path d="M40 14h1v1h-1z" fill="#ff1f5f"/><path d="M41 14h1v1h-1z" fill="#ff1a5b"/><path d="M42 14h1v1h-1z" fill="#ff1657"/><path d="M43 14h1v1h-1z" fill="#ff1253"/><path d="M44 14h1v1h-1z" fill="#ff0e4f"/><path d="M45 14h1v1h-1z" fill="#ff0b4c"/><path d="M46 14h1v1h-1z" fill="#ff0749"/><path d="M47 14h1v1h-1z" fill="#ff0446"/><path d="M48 14h1v1h-1z" fill="#ff0043"/><path d="M49 14h1v1h-1z" fill="#ff0040"/><path d="M50 14h1v1h-1z" fill="#ff003e"/><path d="M51 14h1v1h-1z" fill="#ff003c"/><path d="M52 14h1v1h-1z" fill="#ff0039"/><path d="M53 14h1v1h-1z" fill="#ff0037"/><path d="M14 15h1v1h-1z" fill="#00deff"/><path d="M15 15h1v1h-1z" fill="#00d9ff"/><path d="M16 15h1v1h-1z" fill="#00d4ff"/><path d="M17 15h1v1h-1z" fill="#07d0ff"/><path d="M18 15h1v1h-1z" fill="#23cbff"/><path d="M19 15h1v1h-1z" fill="#3dc6ff"/><path d="M20 15h1v1h-1z" fill="#57c1ff"/><path d="M21 15h1v1h-1z" fill="#6fbcff"/><path d="M22 15h1v1h-1z" fill="#88b7ff"/><path d="M23 15h1v1h-1z" fill="#a1b1ff"/><path d="M24 15h1v1h-1z" fill="#baacff"/><path d="M25 15h1v1h-1z" fill="#d3a6ff"/><path d="M26 15h1v1h-1z" fill="#eca1ff"/><path d="M27 15h1v1h-1z" fill="#ff97f9"/><path d="M28 15h1v1h-1z" fill="#ff85e3"/><path d="M29 15h1v1h-1z" fill="#ff75d1"/><path d="M30 15h1v1h-1z" fill="#ff67c1"/><path d="M31 15h1v1h-1z" fill="#ff5cb3"/><path d="M32 15h1v1h-1z" fill="#ff51a7"/><path d="M33 15h1v1h-1z" fill="#ff489c"/><path d="M34 15h1v1h-1z" fill="#ff4093"/><path d="M35 15h1v1h-1z" fill="#ff388a"/><path d="M36 15h1v1h-1z" fill="#ff3282"/><path d="M37 15h1v1h-1z" fill="#ff2b7b"/><path d="M38 15h1v1h-1z" fill="#ff2675"/><path d="M39 15h1v1h-1z" fill="#ff206f"/><path d="M40 15h1v1h-1z" fill="#ff1c6a"/><path d="M41 15h1v1h-1z" fill="#ff1765"/><path d="M42 15h1v1h-1z" fill="#ff1361"/><path d="M43 15h1v1h-1z" fill="#ff0f5c"/><path d="M44 15h1v1h-1z" fill="#ff0b58"/><path d="M45 15h1v1h-1z" fill="#ff0755"/><path d="M46 15h1v1h-1z" fill="#ff0451"/><path d="M47 15h1v1h-1z" fill="#ff004e"/><path d="M48 15h1v1h-1z" fill="#ff004b"/><path d="M49 15h1v1h-1z" fill="#ff0048"/><path d="M50 15h1v1h-1z" fill="#ff0046"/><path d="M51 15h1v1h-1z" fill="#ff0043"/><path d="M52 15h1v1h-1z" fill="#ff0041"/><path d="M14 16h1v1h-1z" fill="#00c8ff"/><path d="M15 16h1v1h-1z" fill="#00c4ff"/><path d="M16 16h1v1h-1z" fill="#00bfff"/><path d="M17 16h1v1h-1z" fill="#02bbff"/><path d="M18 16h1v1h-1z" fill="#1db6ff"/><path d="M19 16h1v1h-1z" fill="#35b1ff"/><path d="M20 16h1v1h-1z" fill="#4cadff"/><path d="M21 16h1v1h-1z" fill="#64a8ff"/><path d="M22 16h1v1h-1z" fill="#7aa3ff"/><path d="M23 16h1v1h-1z" fill="#919eff"/><path d="M24 16h1v1h-1z" fill="#a899ff"/><path d="M25 16h1v1h-1z" fill="#bf93ff"/><path d="M26 16h1v1h-1z" fill="#d68eff"/><path d="M27 16h1v1h-1z" fill="#ed88ff"/><path d="M28 16h1v1h-1z" fill="#ff80fa"/><path d="M29 16h1v1h-1z" fill="#ff71e5"/><path d="M30 16h1v1h-1z" fill="#ff63d4"/><path d="M31 16h1v1h-1z" fill="#ff57c5"/><path d="M32 16h1v1h-1z" fill="#ff4db7"/><path d="M33 16h1v1h-1z" fill="#ff44ac"/><path d="M34 16h1v1h-1z" fill="#ff3ca1"/><path d="M35 16h1v1h-1z" fill="#ff3498"/><path d="M36 16h1v1h-1z" fill="#ff2e8f"/><path d="M37 16h1v1h-1z" fill="#ff2888"/><path d="M38 16h1v1h-1z" fill="#ff2281"/><path d="M39 16h1v1h-1z" fill="#ff1d7b"/><path d="M40 16h1v1h-1z" fill="#ff1875"/><path d="M41 16h1v1h-1z" fill="#ff1470"/><path d="M42 16h1v1h-1z" fill="#ff106b"/><path d="M43 16h1v1h-1z" fill="#ff0c66"/><path d="M44 16h1v1h-1z" fill="#ff0862"/><path d="M45 16h1v1h-1z" fill="#ff045e"/><path d="M46 16h1v1h-1z" fill="#ff005a"/><path d="M47 16h1v1h-1z" fill="#ff0057"/><path d="M48 16h1v1h-1z" fill="#ff0053"/><path d="M49 16h1v1h-1z" fill="#ff0050"/><path d="M50 16h1v1h-1z" fill="#ff004d"/><path d="M51 16h1v1h-1z" fill="#ff004b"/><path d="M14 17h1v1h-1z" fill="#00b6ff"/><path d="M15 17h1v1h-1z" fill="#00b2ff"/><path d="M16 17h1v1h-1z" fill="#00adff"/><path d="M17 17h1v1h-1z" fill="#00a9ff"/><path d="M18 17h1v1h-1z" fill="#17a5ff"/><path d="M19 17h1v1h-1z" fill="#2ea0ff"/><path d="M20 17h1v1h-1z" fill="#449bff"/><path d="M21 17h1v1h-1z" fill="#5997ff"/><path d="M22 17h1v1h-1z" fill="#6f92ff"/><path d="M23 17h1v1h-1z" fill="#848dff"/><path d="M24 17h1v1h-1z" fill="#98f"/><path d="M25 17h1v1h-1z" fill="#ae83ff"/><path d="M26 17h1v1h-1z" fill="#c37eff"/><path d="M27 17h1v1h-1z" fill="#d979ff"/><path d="M28 17h1v1h-1z" fill="#ee73ff"/><path d="M29 17h1v1h-1z" fill="#ff6cfa"/><path d="M30 17h1v1h-1z" fill="#ff5fe7"/><path d="M31 17h1v1h-1z" fill="#ff53d6"/><path d="M32 17h1v1h-1z" fill="#ff49c8"/><path d="M33 17h1v1h-1z" fill="#ff40bb"/><path d="M34 17h1v1h-1z" fill="#ff38b0"/><path d="M35 17h1v1h-1z" fill="#ff31a6"/><path d="M36 17h1v1h-1z" fill="#ff2a9d"/><path d="M37 17h1v1h-1z" fill="#ff2494"/><path d="M38 17h1v1h-1z" fill="#ff1f8d"/><path d="M39 17h1v1h-1z" fill="#ff1986"/><path d="M40 17h1v1h-1z" fill="#ff1580"/><path d="M41 17h1v1h-1z" fill="#ff107a"/><path d="M42 17h1v1h-1z" fill="#ff0c75"/><path d="M43 17h1v1h-1z" fill="#ff0870"/><path d="M44 17h1v1h-1z" fill="#ff046b"/><path d="M45 17h1v1h-1z" fill="#ff0067"/><path d="M46 17h1v1h-1z" fill="#ff0063"/><path d="M47 17h1v1h-1z" fill="#ff005f"/><path d="M48 17h1v1h-1z" fill="#ff005c"/><path d="M49 17h1v1h-1z" fill="#ff0058"/><path d="M50 17h1v1h-1z" fill="#f05"/><path d="M14 18h1v1h-1z" fill="#00a6ff"/><path d="M15 18h1v1h-1z" fill="#00a2ff"/><path d="M16 18h1v1h-1z" fill="#009eff"/><path d="M17 18h1v1h-1z" fill="#09f"/><path d="M18 18h1v1h-1z" fill="#1295ff"/><path d="M19 18h1v1h-1z" fill="#2891ff"/><path d="M20 18h1v1h-1z" fill="#3c8cff"/><path d="M21 18h1v1h-1z" fill="#5088ff"/><path d="M22 18h1v1h-1z" fill="#6483ff"/><path d="M23 18h1v1h-1z" fill="#787fff"/><path d="M24 18h1v1h-1z" fill="#8c7aff"/><path d="M25 18h1v1h-1z" fill="#a075ff"/><path d="M26 18h1v1h-1z" fill="#b370ff"/><path d="M27 18h1v1h-1z" fill="#c76bff"/><path d="M28 18h1v1h-1z" fill="#db66ff"/><path d="M29 18h1v1h-1z" fill="#ef61ff"/><path d="M30 18h1v1h-1z" fill="#ff5afb"/><path d="M31 18h1v1h-1z" fill="#ff4fe9"/><path d="M32 18h1v1h-1z" fill="#ff45d9"/><path d="M33 18h1v1h-1z" fill="#ff3ccb"/><path d="M34 18h1v1h-1z" fill="#ff34bf"/><path d="M35 18h1v1h-1z" fill="#ff2db4"/><path d="M36 18h1v1h-1z" fill="#ff26aa"/><path d="M37 18h1v1h-1z" fill="#ff20a1"/><path d="M38 18h1v1h-1z" fill="#ff1b99"/><path d="M39 18h1v1h-1z" fill="#ff1691"/><path d="M40 18h1v1h-1z" fill="#ff118b"/><path d="M41 18h1v1h-1z" fill="#ff0d84"/><path d="M42 18h1v1h-1z" fill="#ff097f"/><path d="M43 18h1v1h-1z" fill="#ff0479"/><path d="M44 18h1v1h-1z" fill="#ff0074"/><path d="M45 18h1v1h-1z" fill="#ff0070"/><path d="M46 18h1v1h-1z" fill="#ff006c"/><path d="M47 18h1v1h-1z" fill="#ff0068"/><path d="M48 18h1v1h-1z" fill="#ff0064"/><path d="M49 18h1v1h-1z" fill="#ff0060"/><path d="M15 19h1v1h-1z" fill="#0094ff"/><path d="M16 19h1v1h-1z" fill="#0090ff"/><path d="M17 19h1v1h-1z" fill="#008cff"/><path d="M18 19h1v1h-1z" fill="#0e88ff"/><path d="M19 19h1v1h-1z" fill="#2283ff"/><path d="M20 19h1v1h-1z" fill="#367fff"/><path d="M21 19h1v1h-1z" fill="#497bff"/><path d="M22 19h1v1h-1z" fill="#5b76ff"/><path d="M23 19h1v1h-1z" fill="#6e72ff"/><path d="M24 19h1v1h-1z" fill="#816dff"/><path d="M25 19h1v1h-1z" fill="#9369ff"/><path d="M26 19h1v1h-1z" fill="#a664ff"/><path d="M27 19h1v1h-1z" fill="#b85fff"/><path d="M28 19h1v1h-1z" fill="#cb5aff"/><path d="M29 19h1v1h-1z" fill="#d5f"/><path d="M30 19h1v1h-1z" fill="#f050ff"/><path d="M31 19h1v1h-1z" fill="#ff4afb"/><path d="M32 19h1v1h-1z" fill="#ff40ea"/><path d="M33 19h1v1h-1z" fill="#ff37db"/><path d="M34 19h1v1h-1z" fill="#ff30ce"/><path d="M35 19h1v1h-1z" fill="#ff29c2"/><path d="M36 19h1v1h-1z" fill="#ff22b7"/><path d="M37 19h1v1h-1z" fill="#ff1cae"/><path d="M38 19h1v1h-1z" fill="#ff17a5"/><path d="M39 19h1v1h-1z" fill="#ff129d"/><path d="M40 19h1v1h-1z" fill="#ff0d96"/><path d="M41 19h1v1h-1z" fill="#ff098f"/><path d="M42 19h1v1h-1z" fill="#ff0589"/><path d="M43 19h1v1h-1z" fill="#ff0083"/><path d="M44 19h1v1h-1z" fill="#ff007e"/><path d="M45 19h1v1h-1z" fill="#ff0079"/><path d="M46 19h1v1h-1z" fill="#ff0074"/><path d="M47 19h1v1h-1z" fill="#ff0070"/><path d="M48 19h1v1h-1z" fill="#ff006c"/><path d="M15 20h1v1h-1z" fill="#0087ff"/><path d="M16 20h1v1h-1z" fill="#0083ff"/><path d="M17 20h1v1h-1z" fill="#007fff"/><path d="M18 20h1v1h-1z" fill="#097bff"/><path d="M19 20h1v1h-1z" fill="#1d77ff"/><path d="M20 20h1v1h-1z" fill="#3073ff"/><path d="M21 20h1v1h-1z" fill="#426fff"/><path d="M22 20h1v1h-1z" fill="#536bff"/><path d="M23 20h1v1h-1z" fill="#6567ff"/><path d="M24 20h1v1h-1z" fill="#7762ff"/><path d="M25 20h1v1h-1z" fill="#885eff"/><path d="M26 20h1v1h-1z" fill="#9959ff"/><path d="M27 20h1v1h-1z" fill="#ab55ff"/><path d="M28 20h1v1h-1z" fill="#bc50ff"/><path d="M29 20h1v1h-1z" fill="#ce4bff"/><path d="M30 20h1v1h-1z" fill="#df46ff"/><path d="M31 20h1v1h-1z" fill="#f141ff"/><path d="M32 20h1v1h-1z" fill="#ff3bfc"/><path d="M33 20h1v1h-1z" fill="#ff33eb"/><path d="M34 20h1v1h-1z" fill="#ff2bdd"/><path d="M35 20h1v1h-1z" fill="#ff24d0"/><path d="M36 20h1v1h-1z" fill="#ff1ec5"/><path d="M37 20h1v1h-1z" fill="#ff18bb"/><path d="M38 20h1v1h-1z" fill="#ff13b1"/><path d="M39 20h1v1h-1z" fill="#ff0ea9"/><path d="M40 20h1v1h-1z" fill="#ff09a1"/><path d="M41 20h1v1h-1z" fill="#ff059a"/><path d="M42 20h1v1h-1z" fill="#ff0093"/><path d="M43 20h1v1h-1z" fill="#ff008d"/><path d="M44 20h1v1h-1z" fill="#ff0087"/><path d="M45 20h1v1h-1z" fill="#ff0082"/><path d="M46 20h1v1h-1z" fill="#ff007d"/><path d="M47 20h1v1h-1z" fill="#ff0078"/><path d="M15 21h1v1h-1z" fill="#007cff"/><path d="M16 21h1v1h-1z" fill="#0078ff"/><path d="M17 21h1v1h-1z" fill="#0075ff"/><path d="M18 21h1v1h-1z" fill="#0671ff"/><path d="M19 21h1v1h-1z" fill="#196dff"/><path d="M20 21h1v1h-1z" fill="#2a69ff"/><path d="M21 21h1v1h-1z" fill="#3c65ff"/><path d="M22 21h1v1h-1z" fill="#4c61ff"/><path d="M23 21h1v1h-1z" fill="#5d5dff"/><path d="M24 21h1v1h-1z" fill="#6e58ff"/><path d="M25 21h1v1h-1z" fill="#7e54ff"/><path d="M26 21h1v1h-1z" fill="#8e50ff"/><path d="M27 21h1v1h-1z" fill="#9f4bff"/><path d="M28 21h1v1h-1z" fill="#af47ff"/><path d="M29 21h1v1h-1z" fill="#c042ff"/><path d="M30 21h1v1h-1z" fill="#d03dff"/><path d="M31 21h1v1h-1z" fill="#e139ff"/><path d="M32 21h1v1h-1z" fill="#f134ff"/><path d="M33 21h1v1h-1z" fill="#ff2efc"/><path d="M34 21h1v1h-1z" fill="#ff27ec"/><path d="M35 21h1v1h-1z" fill="#ff20df"/><path d="M36 21h1v1h-1z" fill="#ff1ad3"/><path d="M37 21h1v1h-1z" fill="#ff14c8"/><path d="M38 21h1v1h-1z" fill="#ff0fbe"/><path d="M39 21h1v1h-1z" fill="#ff0ab4"/><path d="M40 21h1v1h-1z" fill="#ff05ac"/><path d="M41 21h1v1h-1z" fill="#ff01a4"/><path d="M42 21h1v1h-1z" fill="#ff009d"/><path d="M43 21h1v1h-1z" fill="#ff0097"/><path d="M44 21h1v1h-1z" fill="#ff0091"/><path d="M45 21h1v1h-1z" fill="#ff008b"/><path d="M46 21h1v1h-1z" fill="#ff0086"/><path d="M15 22h1v1h-1z" fill="#0072ff"/><path d="M16 22h1v1h-1z" fill="#006eff"/><path d="M17 22h1v1h-1z" fill="#006bff"/><path d="M18 22h1v1h-1z" fill="#0267ff"/><path d="M19 22h1v1h-1z" fill="#1563ff"/><path d="M20 22h1v1h-1z" fill="#265fff"/><path d="M21 22h1v1h-1z" fill="#365bff"/><path d="M22 22h1v1h-1z" fill="#4658ff"/><path d="M23 22h1v1h-1z" fill="#5654ff"/><path d="M24 22h1v1h-1z" fill="#664fff"/><path d="M25 22h1v1h-1z" fill="#754bff"/><path d="M26 22h1v1h-1z" fill="#8547ff"/><path d="M27 22h1v1h-1z" fill="#9443ff"/><path d="M28 22h1v1h-1z" fill="#a43eff"/><path d="M29 22h1v1h-1z" fill="#b33aff"/><path d="M30 22h1v1h-1z" fill="#c336ff"/><path d="M31 22h1v1h-1z" fill="#d331ff"/><path d="M32 22h1v1h-1z" fill="#e22cff"/><path d="M33 22h1v1h-1z" fill="#f227ff"/><path d="M34 22h1v1h-1z" fill="#ff22fc"/><path d="M35 22h1v1h-1z" fill="#ff1bed"/><path d="M36 22h1v1h-1z" fill="#ff15e0"/><path d="M37 22h1v1h-1z" fill="#ff10d5"/><path d="M38 22h1v1h-1z" fill="#ff0bca"/><path d="M39 22h1v1h-1z" fill="#ff06c0"/><path d="M40 22h1v1h-1z" fill="#ff01b7"/><path d="M41 22h1v1h-1z" fill="#ff00af"/><path d="M42 22h1v1h-1z" fill="#ff00a8"/><path d="M43 22h1v1h-1z" fill="#ff00a1"/><path d="M44 22h1v1h-1z" fill="#ff009a"/><path d="M45 22h1v1h-1z" fill="#ff0094"/><path d="M15 23h1v1h-1z" fill="#0069ff"/><path d="M16 23h1v1h-1z" fill="#0065ff"/><path d="M17 23h1v1h-1z" fill="#0062ff"/><path d="M18 23h1v1h-1z" fill="#005eff"/><path d="M19 23h1v1h-1z" fill="#115bff"/><path d="M20 23h1v1h-1z" fill="#2157ff"/><path d="M21 23h1v1h-1z" fill="#3153ff"/><path d="M22 23h1v1h-1z" fill="#404fff"/><path d="M23 23h1v1h-1z" fill="#4f4bff"/><path d="M24 23h1v1h-1z" fill="#5e47ff"/><path d="M25 23h1v1h-1z" fill="#6d43ff"/><path d="M26 23h1v1h-1z" fill="#7c3fff"/><path d="M27 23h1v1h-1z" fill="#8b3bff"/><path d="M28 23h1v1h-1z" fill="#9a37ff"/><path d="M29 23h1v1h-1z" fill="#a833ff"/><path d="M30 23h1v1h-1z" fill="#b72eff"/><path d="M31 23h1v1h-1z" fill="#c62aff"/><path d="M32 23h1v1h-1z" fill="#d525ff"/><path d="M33 23h1v1h-1z" fill="#e421ff"/><path d="M34 23h1v1h-1z" fill="#f31cff"/><path d="M35 23h1v1h-1z" fill="#ff17fc"/><path d="M36 23h1v1h-1z" fill="#f1e"/><path d="M37 23h1v1h-1z" fill="#ff0be2"/><path d="M38 23h1v1h-1z" fill="#ff06d6"/><path d="M39 23h1v1h-1z" fill="#ff01cc"/><path d="M40 23h1v1h-1z" fill="#ff00c3"/><path d="M41 23h1v1h-1z" fill="#ff00ba"/><path d="M42 23h1v1h-1z" fill="#ff00b2"/><path d="M43 23h1v1h-1z" fill="#ff00ab"/><path d="M44 23h1v1h-1z" fill="#ff00a4"/><path d="M15 24h1v1h-1z" fill="#0061ff"/><path d="M16 24h1v1h-1z" fill="#005dff"/><path d="M17 24h1v1h-1z" fill="#005aff"/><path d="M18 24h1v1h-1z" fill="#0056ff"/><path d="M19 24h1v1h-1z" fill="#0e53ff"/><path d="M20 24h1v1h-1z" fill="#1d4fff"/><path d="M21 24h1v1h-1z" fill="#2c4bff"/><path d="M22 24h1v1h-1z" fill="#3b48ff"/><path d="M23 24h1v1h-1z" fill="#4a44ff"/><path d="M24 24h1v1h-1z" fill="#5840ff"/><path d="M25 24h1v1h-1z" fill="#663cff"/><path d="M26 24h1v1h-1z" fill="#7438ff"/><path d="M27 24h1v1h-1z" fill="#8234ff"/><path d="M28 24h1v1h-1z" fill="#9030ff"/><path d="M29 24h1v1h-1z" fill="#9e2cff"/><path d="M30 24h1v1h-1z" fill="#ac28ff"/><path d="M31 24h1v1h-1z" fill="#ba24ff"/><path d="M32 24h1v1h-1z" fill="#c91fff"/><path d="M33 24h1v1h-1z" fill="#d71bff"/><path d="M34 24h1v1h-1z" fill="#e516ff"/><path d="M35 24h1v1h-1z" fill="#f311ff"/><path d="M36 24h1v1h-1z" fill="#ff0cfd"/><path d="M37 24h1v1h-1z" fill="#ff06ef"/><path d="M38 24h1v1h-1z" fill="#ff01e3"/><path d="M39 24h1v1h-1z" fill="#ff00d8"/><path d="M40 24h1v1h-1z" fill="#ff00ce"/><path d="M41 24h1v1h-1z" fill="#ff00c5"/><path d="M42 24h1v1h-1z" fill="#ff00bd"/><path d="M43 24h1v1h-1z" fill="#ff00b5"/><path d="M16 25h1v1h-1z" fill="#0056ff"/><path d="M17 25h1v1h-1z" fill="#0052ff"/><path d="M18 25h1v1h-1z" fill="#004fff"/><path d="M19 25h1v1h-1z" fill="#0b4bff"/><path d="M20 25h1v1h-1z" fill="#1a48ff"/><path d="M21 25h1v1h-1z" fill="#2844ff"/><path d="M22 25h1v1h-1z" fill="#3641ff"/><path d="M23 25h1v1h-1z" fill="#443dff"/><path d="M24 25h1v1h-1z" fill="#5239ff"/><path d="M25 25h1v1h-1z" fill="#5f36ff"/><path d="M26 25h1v1h-1z" fill="#6d32ff"/><path d="M27 25h1v1h-1z" fill="#7a2eff"/><path d="M28 25h1v1h-1z" fill="#882aff"/><path d="M29 25h1v1h-1z" fill="#9526ff"/><path d="M30 25h1v1h-1z" fill="#a322ff"/><path d="M31 25h1v1h-1z" fill="#b01eff"/><path d="M32 25h1v1h-1z" fill="#bd19ff"/><path d="M33 25h1v1h-1z" fill="#cb15ff"/><path d="M34 25h1v1h-1z" fill="#d810ff"/><path d="M35 25h1v1h-1z" fill="#e60cff"/><path d="M36 25h1v1h-1z" fill="#f407ff"/><path d="M37 25h1v1h-1z" fill="#ff01fd"/><path d="M38 25h1v1h-1z" fill="#ff00f0"/><path d="M39 25h1v1h-1z" fill="#ff00e4"/><path d="M40 25h1v1h-1z" fill="#ff00da"/><path d="M41 25h1v1h-1z" fill="#ff00d0"/><path d="M42 25h1v1h-1z" fill="#ff00c7"/><path d="M16 26h1v1h-1z" fill="#004fff"/><path d="M17 26h1v1h-1z" fill="#004cff"/><path d="M18 26h1v1h-1z" fill="#0048ff"/><path d="M19 26h1v1h-1z" fill="#0845ff"/><path d="M20 26h1v1h-1z" fill="#1641ff"/><path d="M21 26h1v1h-1z" fill="#243eff"/><path d="M22 26h1v1h-1z" fill="#323aff"/><path d="M23 26h1v1h-1z" fill="#3f37ff"/><path d="M24 26h1v1h-1z" fill="#4c33ff"/><path d="M25 26h1v1h-1z" fill="#5930ff"/><path d="M26 26h1v1h-1z" fill="#662cff"/><path d="M27 26h1v1h-1z" fill="#7328ff"/><path d="M28 26h1v1h-1z" fill="#8024ff"/><path d="M29 26h1v1h-1z" fill="#8d20ff"/><path d="M30 26h1v1h-1z" fill="#9a1cff"/><path d="M31 26h1v1h-1z" fill="#a718ff"/><path d="M32 26h1v1h-1z" fill="#b314ff"/><path d="M33 26h1v1h-1z" fill="#c010ff"/><path d="M34 26h1v1h-1z" fill="#cd0bff"/><path d="M35 26h1v1h-1z" fill="#da06ff"/><path d="M36 26h1v1h-1z" fill="#e701ff"/><path d="M37 26h1v1h-1z" fill="#f400ff"/><path d="M38 26h1v1h-1z" fill="#ff00fd"/><path d="M39 26h1v1h-1z" fill="#ff00f1"/><path d="M40 26h1v1h-1z" fill="#ff00e6"/><path d="M41 26h1v1h-1z" fill="#ff00db"/><path d="M16 27h1v1h-1z" fill="#0048ff"/><path d="M17 27h1v1h-1z" fill="#0045ff"/><path d="M18 27h1v1h-1z" fill="#0042ff"/><path d="M19 27h1v1h-1z" fill="#053fff"/><path d="M20 27h1v1h-1z" fill="#133bff"/><path d="M21 27h1v1h-1z" fill="#2138ff"/><path d="M22 27h1v1h-1z" fill="#2e35ff"/><path d="M23 27h1v1h-1z" fill="#3b31ff"/><path d="M24 27h1v1h-1z" fill="#472eff"/><path d="M25 27h1v1h-1z" fill="#542aff"/><path d="M26 27h1v1h-1z" fill="#6026ff"/><path d="M27 27h1v1h-1z" fill="#6d23ff"/><path d="M28 27h1v1h-1z" fill="#791fff"/><path d="M29 27h1v1h-1z" fill="#851bff"/><path d="M30 27h1v1h-1z" fill="#9217ff"/><path d="M31 27h1v1h-1z" fill="#9e13ff"/><path d="M32 27h1v1h-1z" fill="#aa0fff"/><path d="M33 27h1v1h-1z" fill="#b60bff"/><path d="M34 27h1v1h-1z" fill="#c306ff"/><path d="M35 27h1v1h-1z" fill="#cf01ff"/><path d="M36 27h1v1h-1z" fill="#db00ff"/><path d="M37 27h1v1h-1z" fill="#e800ff"/><path d="M38 27h1v1h-1z" fill="#f400ff"/><path d="M39 27h1v1h-1z" fill="#ff00fd"/><path d="M40 27h1v1h-1z" fill="#ff00f1"/><path d="M16 28h1v1h-1z" fill="#0043ff"/><path d="M17 28h1v1h-1z" fill="#003fff"/><path d="M18 28h1v1h-1z" fill="#003cff"/><path d="M19 28h1v1h-1z" fill="#0239ff"/><path d="M20 28h1v1h-1z" fill="#1036ff"/><path d="M21 28h1v1h-1z" fill="#1e33ff"/><path d="M22 28h1v1h-1z" fill="#2a2fff"/><path d="M23 28h1v1h-1z" fill="#372cff"/><path d="M24 28h1v1h-1z" fill="#4328ff"/><path d="M25 28h1v1h-1z" fill="#4f25ff"/><path d="M26 28h1v1h-1z" fill="#5b21ff"/><path d="M27 28h1v1h-1z" fill="#671eff"/><path d="M28 28h1v1h-1z" fill="#721aff"/><path d="M29 28h1v1h-1z" fill="#7e16ff"/><path d="M30 28h1v1h-1z" fill="#8a12ff"/><path d="M31 28h1v1h-1z" fill="#960eff"/><path d="M32 28h1v1h-1z" fill="#a20aff"/><path d="M33 28h1v1h-1z" fill="#ad06ff"/><path d="M34 28h1v1h-1z" fill="#b901ff"/><path d="M35 28h1v1h-1z" fill="#c500ff"/><path d="M36 28h1v1h-1z" fill="#d100ff"/><path d="M37 28h1v1h-1z" fill="#d0f"/><path d="M38 28h1v1h-1z" fill="#e900ff"/><path d="M39 28h1v1h-1z" fill="#f500ff"/><path d="M16 29h1v1h-1z" fill="#003dff"/><path d="M17 29h1v1h-1z" fill="#003aff"/><path d="M18 29h1v1h-1z" fill="#0037ff"/><path d="M19 29h1v1h-1z" fill="#0034ff"/><path d="M20 29h1v1h-1z" fill="#0e31ff"/><path d="M21 29h1v1h-1z" fill="#1b2dff"/><path d="M22 29h1v1h-1z" fill="#272aff"/><path d="M23 29h1v1h-1z" fill="#3327ff"/><path d="M24 29h1v1h-1z" fill="#3e24ff"/><path d="M25 29h1v1h-1z" fill="#4a20ff"/><path d="M26 29h1v1h-1z" fill="#561dff"/><path d="M27 29h1v1h-1z" fill="#6119ff"/><path d="M28 29h1v1h-1z" fill="#6c15ff"/><path d="M29 29h1v1h-1z" fill="#7812ff"/><path d="M30 29h1v1h-1z" fill="#830eff"/><path d="M31 29h1v1h-1z" fill="#8e0aff"/><path d="M32 29h1v1h-1z" fill="#9a06ff"/><path d="M33 29h1v1h-1z" fill="#a501ff"/><path d="M34 29h1v1h-1z" fill="#b000ff"/><path d="M35 29h1v1h-1z" fill="#bc00ff"/><path d="M36 29h1v1h-1z" fill="#c700ff"/><path d="M37 29h1v1h-1z" fill="#d300ff"/><path d="M38 29h1v1h-1z" fill="#de00ff"/><path d="M16 30h1v1h-1z" fill="#0038ff"/><path d="M17 30h1v1h-1z" fill="#0035ff"/><path d="M18 30h1v1h-1z" fill="#0032ff"/><path d="M19 30h1v1h-1z" fill="#002fff"/><path d="M20 30h1v1h-1z" fill="#0b2cff"/><path d="M21 30h1v1h-1z" fill="#1829ff"/><path d="M22 30h1v1h-1z" fill="#2425ff"/><path d="M23 30h1v1h-1z" fill="#2f22ff"/><path d="M24 30h1v1h-1z" fill="#3a1fff"/><path d="M25 30h1v1h-1z" fill="#461cff"/><path d="M26 30h1v1h-1z" fill="#5118ff"/><path d="M27 30h1v1h-1z" fill="#5c15ff"/><path d="M28 30h1v1h-1z" fill="#6711ff"/><path d="M29 30h1v1h-1z" fill="#720dff"/><path d="M30 30h1v1h-1z" fill="#7d0aff"/><path d="M31 30h1v1h-1z" fill="#8806ff"/><path d="M32 30h1v1h-1z" fill="#9301ff"/><path d="M33 30h1v1h-1z" fill="#9d00ff"/><path d="M34 30h1v1h-1z" fill="#a800ff"/><path d="M35 30h1v1h-1z" fill="#b300ff"/><path d="M36 30h1v1h-1z" fill="#be00ff"/><path d="M37 30h1v1h-1z" fill="#c900ff"/><path d="M17 31h1v1h-1z" fill="#0030ff"/><path d="M18 31h1v1h-1z" fill="#002dff"/><path d="M19 31h1v1h-1z" fill="#002aff"/><path d="M20 31h1v1h-1z" fill="#0927ff"/><path d="M21 31h1v1h-1z" fill="#1524ff"/><path d="M22 31h1v1h-1z" fill="#2121ff"/><path d="M23 31h1v1h-1z" fill="#2c1eff"/><path d="M24 31h1v1h-1z" fill="#371bff"/><path d="M25 31h1v1h-1z" fill="#4217ff"/><path d="M26 31h1v1h-1z" fill="#4c14ff"/><path d="M27 31h1v1h-1z" fill="#5711ff"/><path d="M28 31h1v1h-1z" fill="#620dff"/><path d="M29 31h1v1h-1z" fill="#6c09ff"/><path d="M30 31h1v1h-1z" fill="#7706ff"/><path d="M31 31h1v1h-1z" fill="#8101ff"/><path d="M32 31h1v1h-1z" fill="#8c00ff"/><path d="M33 31h1v1h-1z" fill="#9600ff"/><path d="M34 31h1v1h-1z" fill="#a100ff"/><path d="M35 31h1v1h-1z" fill="#ab00ff"/><path d="M36 31h1v1h-1z" fill="#b600ff"/><path d="M17 32h1v1h-1z" fill="#002cff"/><path d="M18 32h1v1h-1z" fill="#0029ff"/><path d="M19 32h1v1h-1z" fill="#0026ff"/><path d="M20 32h1v1h-1z" fill="#0623ff"/><path d="M21 32h1v1h-1z" fill="#1220ff"/><path d="M22 32h1v1h-1z" fill="#1e1dff"/><path d="M23 32h1v1h-1z" fill="#291aff"/><path d="M24 32h1v1h-1z" fill="#3317ff"/><path d="M25 32h1v1h-1z" fill="#3e13ff"/><path d="M26 32h1v1h-1z" fill="#4810ff"/><path d="M27 32h1v1h-1z" fill="#530dff"/><path d="M28 32h1v1h-1z" fill="#5d09ff"/><path d="M29 32h1v1h-1z" fill="#6705ff"/><path d="M30 32h1v1h-1z" fill="#7101ff"/><path d="M31 32h1v1h-1z" fill="#7b00ff"/><path d="M32 32h1v1h-1z" fill="#8600ff"/><path d="M33 32h1v1h-1z" fill="#9000ff"/><path d="M34 32h1v1h-1z" fill="#9a00ff"/><path d="M35 32h1v1h-1z" fill="#a400ff"/><path d="M17 33h1v1h-1z" fill="#0027ff"/><path d="M18 33h1v1h-1z" fill="#0025ff"/><path d="M19 33h1v1h-1z" fill="#02f"/><path d="M20 33h1v1h-1z" fill="#041fff"/><path d="M21 33h1v1h-1z" fill="#101cff"/><path d="M22 33h1v1h-1z" fill="#1b19ff"/><path d="M23 33h1v1h-1z" fill="#2616ff"/><path d="M24 33h1v1h-1z" fill="#3013ff"/><path d="M25 33h1v1h-1z" fill="#3a10ff"/><path d="M26 33h1v1h-1z" fill="#440cff"/><path d="M27 33h1v1h-1z" fill="#4e09ff"/><path d="M28 33h1v1h-1z" fill="#5805ff"/><path d="M29 33h1v1h-1z" fill="#6201ff"/><path d="M30 33h1v1h-1z" fill="#6c00ff"/><path d="M31 33h1v1h-1z" fill="#7600ff"/><path d="M32 33h1v1h-1z" fill="#8000ff"/><path d="M33 33h1v1h-1z" fill="#8a00ff"/><path d="M34 33h1v1h-1z" fill="#9300ff"/><path d="M17 34h1v1h-1z" fill="#0024ff"/><path d="M18 34h1v1h-1z" fill="#0021ff"/><path d="M19 34h1v1h-1z" fill="#001eff"/><path d="M20 34h1v1h-1z" fill="#021bff"/><path d="M21 34h1v1h-1z" fill="#0e18ff"/><path d="M22 34h1v1h-1z" fill="#1915ff"/><path d="M23 34h1v1h-1z" fill="#2312ff"/><path d="M24 34h1v1h-1z" fill="#2d0fff"/><path d="M25 34h1v1h-1z" fill="#370cff"/><path d="M26 34h1v1h-1z" fill="#4109ff"/><path d="M27 34h1v1h-1z" fill="#4a05ff"/><path d="M28 34h1v1h-1z" fill="#5401ff"/><path d="M29 34h1v1h-1z" fill="#5e00ff"/><path d="M30 34h1v1h-1z" fill="#6700ff"/><path d="M31 34h1v1h-1z" fill="#7100ff"/><path d="M32 34h1v1h-1z" fill="#7a00ff"/><path d="M33 34h1v1h-1z" fill="#8400ff"/><path d="M34 34h1v1h-1z" fill="#8d00ff"/><path d="M17 35h1v1h-1z" fill="#0020ff"/><path d="M18 35h1v1h-1z" fill="#001dff"/><path d="M19 35h1v1h-1z" fill="#001aff"/><path d="M20 35h1v1h-1z" fill="#0017ff"/><path d="M21 35h1v1h-1z" fill="#0c15ff"/><path d="M22 35h1v1h-1z" fill="#1612ff"/><path d="M23 35h1v1h-1z" fill="#200fff"/><path d="M24 35h1v1h-1z" fill="#2a0cff"/><path d="M25 35h1v1h-1z" fill="#3408ff"/><path d="M26 35h1v1h-1z" fill="#3d05ff"/><path d="M27 35h1v1h-1z" fill="#4701ff"/><path d="M28 35h1v1h-1z" fill="#5000ff"/><path d="M29 35h1v1h-1z" fill="#5900ff"/><path d="M30 35h1v1h-1z" fill="#6300ff"/><path d="M31 35h1v1h-1z" fill="#6c00ff"/><path d="M32 35h1v1h-1z" fill="#7500ff"/><path d="M33 35h1v1h-1z" fill="#7e00ff"/><path d="M17 36h1v1h-1z" fill="#001cff"/><path d="M18 36h1v1h-1z" fill="#001aff"/><path d="M19 36h1v1h-1z" fill="#0017ff"/><path d="M20 36h1v1h-1z" fill="#0014ff"/><path d="M21 36h1v1h-1z" fill="#0a11ff"/><path d="M22 36h1v1h-1z" fill="#140eff"/><path d="M23 36h1v1h-1z" fill="#1e0bff"/><path d="M24 36h1v1h-1z" fill="#2708ff"/><path d="M25 36h1v1h-1z" fill="#3105ff"/><path d="M26 36h1v1h-1z" fill="#3a01ff"/><path d="M27 36h1v1h-1z" fill="#4300ff"/><path d="M28 36h1v1h-1z" fill="#4c00ff"/><path d="M29 36h1v1h-1z" fill="#50f"/><path d="M30 36h1v1h-1z" fill="#5e00ff"/><path d="M31 36h1v1h-1z" fill="#6700ff"/><path d="M32 36h1v1h-1z" fill="#7000ff"/><path d="M17 37h1v1h-1z" fill="#0019ff"/><path d="M18 37h1v1h-1z" fill="#0016ff"/><path d="M19 37h1v1h-1z" fill="#0013ff"/><path d="M20 37h1v1h-1z" fill="#01f"/><path d="M21 37h1v1h-1z" fill="#080eff"/><path d="M22 37h1v1h-1z" fill="#120bff"/><path d="M23 37h1v1h-1z" fill="#1b08ff"/><path d="M24 37h1v1h-1z" fill="#2505ff"/><path d="M25 37h1v1h-1z" fill="#2e02ff"/><path d="M26 37h1v1h-1z" fill="#3700ff"/><path d="M27 37h1v1h-1z" fill="#4000ff"/><path d="M28 37h1v1h-1z" fill="#4900ff"/><path d="M29 37h1v1h-1z" fill="#5200ff"/><path d="M30 37h1v1h-1z" fill="#5a00ff"/><path d="M31 37h1v1h-1z" fill="#6300ff"/><path d="M18 38h1v1h-1z" fill="#0013ff"/><path d="M19 38h1v1h-1z" fill="#0010ff"/><path d="M20 38h1v1h-1z" fill="#000eff"/><path d="M21 38h1v1h-1z" fill="#060bff"/><path d="M22 38h1v1h-1z" fill="#1008ff"/><path d="M23 38h1v1h-1z" fill="#1905ff"/><path d="M24 38h1v1h-1z" fill="#2202ff"/><path d="M25 38h1v1h-1z" fill="#2b00ff"/><path d="M26 38h1v1h-1z" fill="#3400ff"/><path d="M27 38h1v1h-1z" fill="#3d00ff"/><path d="M28 38h1v1h-1z" fill="#4500ff"/><path d="M29 38h1v1h-1z" fill="#4e00ff"/><path d="M30 38h1v1h-1z" fill="#5700ff"/><path d="M18 39h1v1h-1z" fill="#0010ff"/><path d="M19 39h1v1h-1z" fill="#000dff"/><path d="M20 39h1v1h-1z" fill="#000aff"/><path d="M21 39h1v1h-1z" fill="#0408ff"/><path d="M22 39h1v1h-1z" fill="#0e05ff"/><path d="M23 39h1v1h-1z" fill="#1702ff"/><path d="M24 39h1v1h-1z" fill="#2000ff"/><path d="M25 39h1v1h-1z" fill="#2900ff"/><path d="M26 39h1v1h-1z" fill="#3100ff"/><path d="M27 39h1v1h-1z" fill="#3a00ff"/><path d="M28 39h1v1h-1z" fill="#4200ff"/><path d="M29 39h1v1h-1z" fill="#4b00ff"/><path d="M18 40h1v1h-1z" fill="#000dff"/><path d="M19 40h1v1h-1z" fill="#000aff"/><path d="M20 40h1v1h-1z" fill="#0008ff"/><path d="M21 40h1v1h-1z" fill="#0205ff"/><path d="M22 40h1v1h-1z" fill="#0c02ff"/><path d="M23 40h1v1h-1z" fill="#1500ff"/><path d="M24 40h1v1h-1z" fill="#1e00ff"/><path d="M25 40h1v1h-1z" fill="#2600ff"/><path d="M26 40h1v1h-1z" fill="#2f00ff"/><path d="M27 40h1v1h-1z" fill="#3700ff"/><path d="M28 40h1v1h-1z" fill="#3f00ff"/><path d="M18 41h1v1h-1z" fill="#000aff"/><path d="M19 41h1v1h-1z" fill="#0007ff"/><path d="M20 41h1v1h-1z" fill="#0005ff"/><path d="M21 41h1v1h-1z" fill="#0002ff"/><path d="M22 41h1v1h-1z" fill="#0a00ff"/><path d="M23 41h1v1h-1z" fill="#1300ff"/><path d="M24 41h1v1h-1z" fill="#1c00ff"/><path d="M25 41h1v1h-1z" fill="#2400ff"/><path d="M26 41h1v1h-1z" fill="#2c00ff"/><path d="M27 41h1v1h-1z" fill="#3400ff"/><path d="M18 42h1v1h-1z" fill="#0007ff"/><path d="M19 42h1v1h-1z" fill="#0005ff"/><path d="M20 42h1v1h-1z" fill="#0002ff"/><path d="M21 42h1v1h-1z" fill="#00f"/><path d="M22 42h1v1h-1z" fill="#0800ff"/><path d="M23 42h1v1h-1z" fill="#10f"/><path d="M24 42h1v1h-1z" fill="#1a00ff"/><path d="M25 42h1v1h-1z" fill="#20f"/><path d="M26 42h1v1h-1z" fill="#2a00ff"/><path d="M18 43h1v1h-1z" fill="#0004ff"/><path d="M19 43h1v1h-1z" fill="#0002ff"/><path d="M20 43h1v1h-1z" fill="#00f"/><path d="M21 43h1v1h-1z" fill="#00f"/><path d="M22 43h1v1h-1z" fill="#0700ff"/><path d="M23 43h1v1h-1z" fill="#1000ff"/><path d="M24 43h1v1h-1z" fill="#1800ff"/><path d="M25 43h1v1h-1z" fill="#2000ff"/><path d="M19 44h1v1h-1z" fill="#00f"/><path d="M20 44h1v1h-1z" fill="#00f"/><path d="M21 44h1v1h-1z" fill="#00f"/><path d="M22 44h1v1h-1z" fill="#0500ff"/><path d="M23 44h1v1h-1z" fill="#0e00ff"/><path d="M24 44h1v1h-1z" fill="#1600ff"/>
</g></g></g>
</g>
<path d="M1172 609V34H1910V602" fill="none" stroke="#8e8e8e" stroke-width="2"/>
<line x1="1165" y1="602.2" x2="1910" y2="602.2" stroke="#8e8e8e" stroke-width="2"/>
<line x1="1165" y1="602.2" x2="1172" y2="602.2" stroke="#bdbdbd" stroke-width="2"/>
<text x="1164" y="609.5" font-size="17" fill="#e2e2e2" text-anchor="end" font-weight="normal">0</text>
<line x1="1171.8" y1="602" x2="1171.8" y2="609" stroke="#bdbdbd" stroke-width="2"/>
<text x="1171.8" y="626.8" font-size="17" fill="#e2e2e2" text-anchor="middle" font-weight="normal">0</text>
<line x1="1165" y1="555.0" x2="1172" y2="555.0" stroke="#bdbdbd" stroke-width="2"/>
<text x="1164" y="562.25" font-size="17" fill="#e2e2e2" text-anchor="end" font-weight="normal">0.05</text>
<line x1="1233.3" y1="602" x2="1233.3" y2="609" stroke="#bdbdbd" stroke-width="2"/>
<text x="1233.3" y="626.8" font-size="17" fill="#e2e2e2" text-anchor="middle" font-weight="normal">0.05</text>
<line x1="1165" y1="507.7" x2="1172" y2="507.7" stroke="#bdbdbd" stroke-width="2"/>
<text x="1164" y="515.0" font-size="17" fill="#e2e2e2" text-anchor="end" font-weight="normal">0.1</text>
<line x1="1294.8" y1="602" x2="1294.8" y2="609" stroke="#bdbdbd" stroke-width="2"/>
<text x="1294.8" y="626.8" font-size="17" fill="#e2e2e2" text-anchor="middle" font-weight="normal">0.1</text>
<line x1="1165" y1="460.5" x2="1172" y2="460.5" stroke="#bdbdbd" stroke-width="2"/>
<text x="1164" y="467.75000000000006" font-size="17" fill="#e2e2e2" text-anchor="end" font-weight="normal">0.15</text>
<line x1="1356.3" y1="602" x2="1356.3" y2="609" stroke="#bdbdbd" stroke-width="2"/>
<text x="1356.3" y="626.8" font-size="17" fill="#e2e2e2" text-anchor="middle" font-weight="normal">0.15</text>
<line x1="1165" y1="413.2" x2="1172" y2="413.2" stroke="#bdbdbd" stroke-width="2"/>
<text x="1164" y="420.50000000000006" font-size="17" fill="#e2e2e2" text-anchor="end" font-weight="normal">0.2</text>
<line x1="1417.8" y1="602" x2="1417.8" y2="609" stroke="#bdbdbd" stroke-width="2"/>
<text x="1417.8" y="626.8" font-size="17" fill="#e2e2e2" text-anchor="middle" font-weight="normal">0.2</text>
<line x1="1165" y1="366.0" x2="1172" y2="366.0" stroke="#bdbdbd" stroke-width="2"/>
<text x="1164" y="373.25000000000006" font-size="17" fill="#e2e2e2" text-anchor="end" font-weight="normal">0.25</text>
<line x1="1479.3" y1="602" x2="1479.3" y2="609" stroke="#bdbdbd" stroke-width="2"/>
<text x="1479.3" y="626.8" font-size="17" fill="#e2e2e2" text-anchor="middle" font-weight="normal">0.25</text>
<line x1="1165" y1="318.7" x2="1172" y2="318.7" stroke="#bdbdbd" stroke-width="2"/>
<text x="1164" y="326.0" font-size="17" fill="#e2e2e2" text-anchor="end" font-weight="normal">0.3</text>
<line x1="1540.8" y1="602" x2="1540.8" y2="609" stroke="#bdbdbd" stroke-width="2"/>
<text x="1540.8" y="626.8" font-size="17" fill="#e2e2e2" text-anchor="middle" font-weight="normal">0.3</text>
<line x1="1165" y1="271.4" x2="1172" y2="271.4" stroke="#bdbdbd" stroke-width="2"/>
<text x="1164" y="278.75" font-size="17" fill="#e2e2e2" text-anchor="end" font-weight="normal">0.35</text>
<line x1="1602.3" y1="602" x2="1602.3" y2="609" stroke="#bdbdbd" stroke-width="2"/>
<text x="1602.3" y="626.8" font-size="17" fill="#e2e2e2" text-anchor="middle" font-weight="normal">0.35</text>
<line x1="1165" y1="224.2" x2="1172" y2="224.2" stroke="#bdbdbd" stroke-width="2"/>
<text x="1164" y="231.50000000000006" font-size="17" fill="#e2e2e2" text-anchor="end" font-weight="normal">0.4</text>
<line x1="1663.8" y1="602" x2="1663.8" y2="609" stroke="#bdbdbd" stroke-width="2"/>
<text x="1663.8" y="626.8" font-size="17" fill="#e2e2e2" text-anchor="middle" font-weight="normal">0.4</text>
<line x1="1165" y1="177.0" x2="1172" y2="177.0" stroke="#bdbdbd" stroke-width="2"/>
<text x="1164" y="184.25000000000006" font-size="17" fill="#e2e2e2" text-anchor="end" font-weight="normal">0.45</text>
<line x1="1725.3" y1="602" x2="1725.3" y2="609" stroke="#bdbdbd" stroke-width="2"/>
<text x="1725.3" y="626.8" font-size="17" fill="#e2e2e2" text-anchor="middle" font-weight="normal">0.45</text>
<line x1="1165" y1="129.7" x2="1172" y2="129.7" stroke="#bdbdbd" stroke-width="2"/>
<text x="1164" y="137.00000000000006" font-size="17" fill="#e2e2e2" text-anchor="end" font-weight="normal">0.5</text>
<line x1="1786.8" y1="602" x2="1786.8" y2="609" stroke="#bdbdbd" stroke-width="2"/>
<text x="1786.8" y="626.8" font-size="17" fill="#e2e2e2" text-anchor="middle" font-weight="normal">0.5</text>
<line x1="1165" y1="82.5" x2="1172" y2="82.5" stroke="#bdbdbd" stroke-width="2"/>
<text x="1164" y="89.75000000000004" font-size="17" fill="#e2e2e2" text-anchor="end" font-weight="normal">0.55</text>
<line x1="1848.3" y1="602" x2="1848.3" y2="609" stroke="#bdbdbd" stroke-width="2"/>
<text x="1848.3" y="626.8" font-size="17" fill="#e2e2e2" text-anchor="middle" font-weight="normal">0.55</text>
<rect x="1316.9" y="61.2" width="14" height="14" fill="none" stroke="#fff" stroke-width="2"/>
<rect x="1331.9" y="75.5" width="14" height="14" fill="none" stroke="#fff" stroke-width="2"/>
<rect x="1345.7" y="89.5" width="14" height="14" fill="none" stroke="#fff" stroke-width="2"/>
<rect x="1363.1" y="107.0" width="14" height="14" fill="none" stroke="#fff" stroke-width="2"/>
<rect x="1383.2" y="126.0" width="14" height="14" fill="none" stroke="#fff" stroke-width="2"/>
<rect x="1414.5" y="70.0" width="14" height="14" fill="none" stroke="#fff" stroke-width="2"/>
<rect x="1413.8" y="86.1" width="14" height="14" fill="none" stroke="#fff" stroke-width="2"/>
<rect x="1413.4" y="98.4" width="14" height="14" fill="none" stroke="#fff" stroke-width="2"/>
<rect x="1412.1" y="113.5" width="14" height="14" fill="none" stroke="#fff" stroke-width="2"/>
<rect x="1410.2" y="130.1" width="14" height="14" fill="none" stroke="#fff" stroke-width="2"/>
<rect x="1334.2" y="163.5" width="14" height="14" fill="none" stroke="#fff" stroke-width="2"/>
<rect x="1348.8" y="159.6" width="14" height="14" fill="none" stroke="#fff" stroke-width="2"/>
<rect x="1363.4" y="158.2" width="14" height="14" fill="none" stroke="#fff" stroke-width="2"/>
<rect x="1378.9" y="155.3" width="14" height="14" fill="none" stroke="#fff" stroke-width="2"/>
<rect x="1393.2" y="153.9" width="14" height="14" fill="none" stroke="#fff" stroke-width="2"/>
<rect x="1718.0" y="98.8" width="14" height="14" fill="none" stroke="#fff" stroke-width="2"/>
<rect x="1644.0" y="111.2" width="14" height="14" fill="none" stroke="#fff" stroke-width="2"/>
<rect x="1581.3" y="122.4" width="14" height="14" fill="none" stroke="#fff" stroke-width="2"/>
<rect x="1524.8" y="130.5" width="14" height="14" fill="none" stroke="#fff" stroke-width="2"/>
<rect x="1463.2" y="141.7" width="14" height="14" fill="none" stroke="#fff" stroke-width="2"/>
<rect x="1538.8" y="280.8" width="14" height="14" fill="none" stroke="#fff" stroke-width="2"/>
<rect x="1501.2" y="245.2" width="14" height="14" fill="none" stroke="#fff" stroke-width="2"/>
<rect x="1470.9" y="215.1" width="14" height="14" fill="none" stroke="#fff" stroke-width="2"/>
<rect x="1449.2" y="191.5" width="14" height="14" fill="none" stroke="#fff" stroke-width="2"/>
<rect x="1427.3" y="169.2" width="14" height="14" fill="none" stroke="#fff" stroke-width="2"/>
<rect x="1380.7" y="444.6" width="14" height="14" fill="none" stroke="#fff" stroke-width="2"/>
<rect x="1389.5" y="345.3" width="14" height="14" fill="none" stroke="#fff" stroke-width="2"/>
<rect x="1396.0" y="279.1" width="14" height="14" fill="none" stroke="#fff" stroke-width="2"/>
<rect x="1400.3" y="227.6" width="14" height="14" fill="none" stroke="#fff" stroke-width="2"/>
<rect x="1404.1" y="184.6" width="14" height="14" fill="none" stroke="#fff" stroke-width="2"/>
<circle cx="1296.2" cy="54.3" r="4.6" fill="#00bb00" stroke="#1c1c1c" stroke-width="1.8"/>
<circle cx="1313.2" cy="70.0" r="4.6" fill="#4db84d" stroke="#1c1c1c" stroke-width="1.8"/>
<circle cx="1332.4" cy="87.4" r="4.6" fill="#5fa85f" stroke="#1c1c1c" stroke-width="1.8"/>
<circle cx="1355.8" cy="106.1" r="4.6" fill="#7ab07a" stroke="#1c1c1c" stroke-width="1.8"/>
<circle cx="1382.7" cy="129.6" r="4.6" fill="#99ad99" stroke="#1c1c1c" stroke-width="1.8"/>
<circle cx="1417.0" cy="66.0" r="4.6" fill="#c8c000" stroke="#1c1c1c" stroke-width="1.8"/>
<circle cx="1415.4" cy="82.4" r="4.6" fill="#b8b455" stroke="#1c1c1c" stroke-width="1.8"/>
<circle cx="1415.4" cy="96.3" r="4.6" fill="#b4b070" stroke="#1c1c1c" stroke-width="1.8"/>
<circle cx="1415.4" cy="115.1" r="4.6" fill="#b4b080" stroke="#1c1c1c" stroke-width="1.8"/>
<circle cx="1415.4" cy="134.2" r="4.6" fill="#b4b294" stroke="#1c1c1c" stroke-width="1.8"/>
<circle cx="1324.5" cy="170.5" r="4.6" fill="#00b4b4" stroke="#1c1c1c" stroke-width="1.8"/>
<circle cx="1343.1" cy="167.3" r="4.6" fill="#40acac" stroke="#1c1c1c" stroke-width="1.8"/>
<circle cx="1360.5" cy="165.5" r="4.6" fill="#6eb0b0" stroke="#1c1c1c" stroke-width="1.8"/>
<circle cx="1378.0" cy="162.6" r="4.6" fill="#8eb0b0" stroke="#1c1c1c" stroke-width="1.8"/>
<circle cx="1395.2" cy="159.2" r="4.6" fill="#a2b2b2" stroke="#1c1c1c" stroke-width="1.8"/>
<circle cx="1771.8" cy="104.3" r="4.6" fill="#cc0000" stroke="#1c1c1c" stroke-width="1.8"/>
<circle cx="1691.8" cy="115.0" r="4.6" fill="#b84444" stroke="#1c1c1c" stroke-width="1.8"/>
<circle cx="1619.8" cy="126.6" r="4.6" fill="#b05555" stroke="#1c1c1c" stroke-width="1.8"/>
<circle cx="1555.4" cy="137.3" r="4.6" fill="#b06868" stroke="#1c1c1c" stroke-width="1.8"/>
<circle cx="1481.3" cy="148.3" r="4.6" fill="#b08484" stroke="#1c1c1c" stroke-width="1.8"/>
<circle cx="1585.0" cy="305.4" r="4.6" fill="#c020c0" stroke="#1c1c1c" stroke-width="1.8"/>
<circle cx="1536.7" cy="262.9" r="4.6" fill="#b050b0" stroke="#1c1c1c" stroke-width="1.8"/>
<circle cx="1497.2" cy="229.9" r="4.6" fill="#b070b0" stroke="#1c1c1c" stroke-width="1.8"/>
<circle cx="1468.7" cy="204.5" r="4.6" fill="#b088b0" stroke="#1c1c1c" stroke-width="1.8"/>
<circle cx="1439.0" cy="179.4" r="4.6" fill="#b0a0b0" stroke="#1c1c1c" stroke-width="1.8"/>
<circle cx="1406.5" cy="492.4" r="4.6" fill="#2020c0" stroke="#1c1c1c" stroke-width="1.8"/>
<circle cx="1409.2" cy="381.0" r="4.6" fill="#5050b0" stroke="#1c1c1c" stroke-width="1.8"/>
<circle cx="1410.5" cy="304.0" r="4.6" fill="#6868b0" stroke="#1c1c1c" stroke-width="1.8"/>
<circle cx="1412.2" cy="245.8" r="4.6" fill="#8080a8" stroke="#1c1c1c" stroke-width="1.8"/>
<circle cx="1413.9" cy="198.5" r="4.6" fill="#9898a8" stroke="#1c1c1c" stroke-width="1.8"/>
<rect x="1406.5" y="150.8" width="14" height="14" fill="none" stroke="#000" stroke-width="2.2"/>
<circle cx="1414" cy="157.6" r="4.8" fill="#fff" stroke="#1c1c1c" stroke-width="1.6"/>
<rect x="1655" y="423.5" width="251" height="173" fill="#363636"/>
<defs><linearGradient id="ib" gradientUnits="userSpaceOnUse" x1="1640" y1="480" x2="1880" y2="610"><stop offset="0" stop-color="#80ff00"/><stop offset="0.45" stop-color="#ffff10"/><stop offset="1" stop-color="#ff9000"/></linearGradient><linearGradient id="id" gradientUnits="userSpaceOnUse" x1="1660" y1="428" x2="1901" y2="560"><stop offset="0" stop-color="#4a8e00"/><stop offset="0.5" stop-color="#989800"/><stop offset="1" stop-color="#9a5e00"/></linearGradient></defs>
<rect x="1659" y="427.5" width="243" height="164" fill="url(#ib)"/>
<path d="M1659 427.5H1902V574L1659 443.5Z" fill="url(#id)"/>
<path d="M1875 427.5H1902V446Z" fill="#232323"/>
<rect x="1659" y="427.5" width="243" height="164" fill="none" stroke="#9a9a9a" stroke-width="2"/>
<rect x="1772" y="501" width="16" height="16" fill="none" stroke="#fff" stroke-width="2"/>
<path d="M1706 591V575H1722V591" fill="none" stroke="#fff" stroke-width="2"/>
<circle cx="1814" cy="436.3" r="5" fill="#c8c000" stroke="#1c1c1c" stroke-width="2"/>
<circle cx="1738.4" cy="527.5" r="5" fill="#c0c050" stroke="#1c1c1c" stroke-width="2"/>
<text x="55" y="679.3" font-size="33.5" fill="#f0f0f0" text-anchor="start" font-weight="normal" textLength="270" lengthAdjust="spacingAndGlyphs">Avg dE2000: 3.16</text>
<text x="51" y="727.1" font-size="33.5" fill="#f0f0f0" text-anchor="start" font-weight="normal" textLength="278" lengthAdjust="spacingAndGlyphs">Max dE2000: 6.38</text>
<text x="14" y="782" font-size="32" fill="#f0f0f0" text-anchor="start" font-weight="normal" textLength="252" lengthAdjust="spacingAndGlyphs">Current Reading</text>
<text x="13.5" y="822" font-size="26.5" fill="#f0f0f0" text-anchor="start" font-weight="normal" textLength="118" lengthAdjust="spacingAndGlyphs">x: 0.4311</text>
<text x="194" y="822" font-size="26.5" fill="#f0f0f0" text-anchor="start" font-weight="normal" textLength="120" lengthAdjust="spacingAndGlyphs">y: 0.5419</text>
<text x="13.5" y="869.1" font-size="26.5" fill="#f0f0f0" text-anchor="start" font-weight="normal" textLength="111" lengthAdjust="spacingAndGlyphs">fL: 64.28</text>
<text x="13.5" y="908.7" font-size="26.5" fill="#f0f0f0" text-anchor="start" font-weight="normal" textLength="184" lengthAdjust="spacingAndGlyphs">cd/m²: 220.24</text>
<text x="535.5" y="681.3" font-size="17" fill="#e2e2e2" text-anchor="middle" font-weight="normal" textLength="96" lengthAdjust="spacingAndGlyphs">RGB Balance</text>
<rect x="409" y="687" width="288" height="208.5" fill="#232323"/>
<line x1="402" y1="723.3" x2="697" y2="723.3" stroke="#8e8e8e" stroke-width="2"/>
<text x="401" y="729.8" font-size="16.5" fill="#e2e2e2" text-anchor="end" font-weight="normal">120</text>
<line x1="402" y1="792.6" x2="697" y2="792.6" stroke="#8e8e8e" stroke-width="2"/>
<text x="401" y="799.1" font-size="16.5" fill="#e2e2e2" text-anchor="end" font-weight="normal">100</text>
<line x1="402" y1="861.0" x2="697" y2="861.0" stroke="#8e8e8e" stroke-width="2"/>
<text x="401" y="867.5" font-size="16.5" fill="#e2e2e2" text-anchor="end" font-weight="normal">80</text>
<defs><linearGradient id="rr" x1="0" y1="0" x2="0" y2="1"><stop offset="0" stop-color="#ff5858"/><stop offset="0.65" stop-color="#ff0a0a"/><stop offset="1" stop-color="#ff0000"/></linearGradient><linearGradient id="gg" x1="0" y1="0" x2="0" y2="1"><stop offset="0" stop-color="#58aa58"/><stop offset="0.65" stop-color="#058505"/><stop offset="1" stop-color="#008000"/></linearGradient></defs>
<rect x="436.8" y="797.5" width="75.5" height="98" fill="url(#rr)" stroke="#000" stroke-width="1.6"/>
<rect x="513.8" y="787.8" width="75" height="107.7" fill="url(#gg)" stroke="#000" stroke-width="1.6"/>
<rect x="591" y="888.3" width="75.5" height="7.2" fill="#5555ff" stroke="#000" stroke-width="1.6"/>
<path d="M409 903V687.5H697V903" fill="none" stroke="#8e8e8e" stroke-width="2"/>
<line x1="409" y1="895.5" x2="697" y2="895.5" stroke="#8e8e8e" stroke-width="2"/>
<text x="553" y="914" font-size="17" fill="#e2e2e2" text-anchor="middle" font-weight="normal">100%</text>
<rect x="721" y="651.5" width="840.5" height="272" fill="#000"/>
<defs><linearGradient id="th" x1="0" y1="0" x2="0" y2="1"><stop offset="0" stop-color="#333"/><stop offset="0.45" stop-color="#313131"/><stop offset="0.55" stop-color="#161616"/><stop offset="1" stop-color="#141414"/></linearGradient><linearGradient id="tl" x1="0" y1="0" x2="1" y2="0"><stop offset="0" stop-color="#7a7a7a"/><stop offset="0.5" stop-color="#868686"/><stop offset="1" stop-color="#7c7c7c"/></linearGradient></defs>
<rect x="722.5" y="652.5" width="837.5" height="32.3" fill="url(#th)"/>
<text x="1007.8" y="674.7" font-size="17.5" fill="#f2f2f2" text-anchor="middle" font-weight="normal" textLength="47" lengthAdjust="spacingAndGlyphs" stroke="#f2f2f2" stroke-width="0.4">20%</text>
<text x="1130.4" y="674.7" font-size="17.5" fill="#f2f2f2" text-anchor="middle" font-weight="normal" textLength="47" lengthAdjust="spacingAndGlyphs" stroke="#f2f2f2" stroke-width="0.4">40%</text>
<text x="1253.2" y="674.7" font-size="17.5" fill="#f2f2f2" text-anchor="middle" font-weight="normal" textLength="47" lengthAdjust="spacingAndGlyphs" stroke="#f2f2f2" stroke-width="0.4">60%</text>
<text x="1375.8" y="674.7" font-size="17.5" fill="#f2f2f2" text-anchor="middle" font-weight="normal" textLength="47" lengthAdjust="spacingAndGlyphs" stroke="#f2f2f2" stroke-width="0.4">80%</text>
<text x="1499" y="674.7" font-size="17.5" fill="#f2f2f2" text-anchor="middle" font-weight="normal" textLength="60" lengthAdjust="spacingAndGlyphs" stroke="#f2f2f2" stroke-width="0.4">100%</text>
<rect x="722.5" y="684.8" width="837.5" height="29.8" fill="#404040"/>
<text x="743" y="706.3" font-size="19.5" fill="#f2f2f2" text-anchor="start" font-weight="bold" textLength="99.5" lengthAdjust="spacingAndGlyphs">x: CIE31</text>
<text x="953.0" y="706.3" font-size="19.8" fill="#f2f2f2" text-anchor="start" font-weight="normal" textLength="80.2" lengthAdjust="spacingAndGlyphs">0.3365</text>
<text x="1075.6" y="706.3" font-size="19.8" fill="#f2f2f2" text-anchor="start" font-weight="normal" textLength="80.2" lengthAdjust="spacingAndGlyphs">0.3594</text>
<text x="1198.2" y="706.3" font-size="19.8" fill="#f2f2f2" text-anchor="start" font-weight="normal" textLength="80.2" lengthAdjust="spacingAndGlyphs">0.3828</text>
<text x="1320.8" y="706.3" font-size="19.8" fill="#f2f2f2" text-anchor="start" font-weight="normal" textLength="80.2" lengthAdjust="spacingAndGlyphs">0.4055</text>
<text x="1443.4" y="706.3" font-size="19.8" fill="#f2f2f2" text-anchor="start" font-weight="normal" textLength="80.2" lengthAdjust="spacingAndGlyphs">0.4311</text>
<rect x="722.5" y="714.5" width="837.5" height="29.8" fill="url(#tl)"/>
<text x="743" y="736.02" font-size="19.5" fill="#f2f2f2" text-anchor="start" font-weight="bold" textLength="99.5" lengthAdjust="spacingAndGlyphs">y: CIE31</text>
<text x="953.0" y="736.02" font-size="19.8" fill="#f2f2f2" text-anchor="start" font-weight="normal" textLength="80.2" lengthAdjust="spacingAndGlyphs">0.3721</text>
<text x="1075.6" y="736.02" font-size="19.8" fill="#f2f2f2" text-anchor="start" font-weight="normal" textLength="80.2" lengthAdjust="spacingAndGlyphs">0.4132</text>
<text x="1198.2" y="736.02" font-size="19.8" fill="#f2f2f2" text-anchor="start" font-weight="normal" textLength="80.2" lengthAdjust="spacingAndGlyphs">0.4553</text>
<text x="1320.8" y="736.02" font-size="19.8" fill="#f2f2f2" text-anchor="start" font-weight="normal" textLength="80.2" lengthAdjust="spacingAndGlyphs">0.4961</text>
<text x="1443.4" y="736.02" font-size="19.8" fill="#f2f2f2" text-anchor="start" font-weight="normal" textLength="80.2" lengthAdjust="spacingAndGlyphs">0.5419</text>
<rect x="722.5" y="744.2" width="837.5" height="29.8" fill="#404040"/>
<text x="743" y="765.74" font-size="19.5" fill="#f2f2f2" text-anchor="start" font-weight="bold" textLength="16.5" lengthAdjust="spacingAndGlyphs">Y</text>
<text x="953.0" y="765.74" font-size="19.8" fill="#f2f2f2" text-anchor="start" font-weight="normal" textLength="109.7" lengthAdjust="spacingAndGlyphs">229.2387</text>
<text x="1075.6" y="765.74" font-size="19.8" fill="#f2f2f2" text-anchor="start" font-weight="normal" textLength="109.7" lengthAdjust="spacingAndGlyphs">226.5661</text>
<text x="1198.2" y="765.74" font-size="19.8" fill="#f2f2f2" text-anchor="start" font-weight="normal" textLength="109.7" lengthAdjust="spacingAndGlyphs">224.2945</text>
<text x="1320.8" y="765.74" font-size="19.8" fill="#f2f2f2" text-anchor="start" font-weight="normal" textLength="109.7" lengthAdjust="spacingAndGlyphs">222.4854</text>
<text x="1443.4" y="765.74" font-size="19.8" fill="#f2f2f2" text-anchor="start" font-weight="normal" textLength="109.7" lengthAdjust="spacingAndGlyphs">220.2388</text>
<rect x="722.5" y="774.0" width="837.5" height="29.8" fill="url(#tl)"/>
<text x="743" y="795.4599999999999" font-size="19.5" fill="#f2f2f2" text-anchor="start" font-weight="bold" textLength="181" lengthAdjust="spacingAndGlyphs">Target x:CIE31</text>
<text x="953.0" y="795.4599999999999" font-size="19.8" fill="#f2f2f2" text-anchor="start" font-weight="normal" textLength="80.2" lengthAdjust="spacingAndGlyphs">0.3344</text>
<text x="1075.6" y="795.4599999999999" font-size="19.8" fill="#f2f2f2" text-anchor="start" font-weight="normal" textLength="80.2" lengthAdjust="spacingAndGlyphs">0.3564</text>
<text x="1198.2" y="795.4599999999999" font-size="19.8" fill="#f2f2f2" text-anchor="start" font-weight="normal" textLength="80.2" lengthAdjust="spacingAndGlyphs">0.3773</text>
<text x="1320.8" y="795.4599999999999" font-size="19.8" fill="#f2f2f2" text-anchor="start" font-weight="normal" textLength="80.2" lengthAdjust="spacingAndGlyphs">0.3969</text>
<text x="1443.4" y="795.4599999999999" font-size="19.8" fill="#f2f2f2" text-anchor="start" font-weight="normal" textLength="80.2" lengthAdjust="spacingAndGlyphs">0.4193</text>
<rect x="722.5" y="803.7" width="837.5" height="29.8" fill="#404040"/>
<text x="743" y="825.18" font-size="19.5" fill="#f2f2f2" text-anchor="start" font-weight="bold" textLength="181" lengthAdjust="spacingAndGlyphs">Target y:CIE31</text>
<text x="953.0" y="825.18" font-size="19.8" fill="#f2f2f2" text-anchor="start" font-weight="normal" textLength="80.2" lengthAdjust="spacingAndGlyphs">0.3648</text>
<text x="1075.6" y="825.18" font-size="19.8" fill="#f2f2f2" text-anchor="start" font-weight="normal" textLength="80.2" lengthAdjust="spacingAndGlyphs">0.4013</text>
<text x="1198.2" y="825.18" font-size="19.8" fill="#f2f2f2" text-anchor="start" font-weight="normal" textLength="80.2" lengthAdjust="spacingAndGlyphs">0.4358</text>
<text x="1320.8" y="825.18" font-size="19.8" fill="#f2f2f2" text-anchor="start" font-weight="normal" textLength="80.2" lengthAdjust="spacingAndGlyphs">0.4682</text>
<text x="1443.4" y="825.18" font-size="19.8" fill="#f2f2f2" text-anchor="start" font-weight="normal" textLength="80.2" lengthAdjust="spacingAndGlyphs">0.5053</text>
<rect x="722.5" y="833.4" width="837.5" height="29.8" fill="url(#tl)"/>
<text x="743" y="854.9" font-size="19.5" fill="#f2f2f2" text-anchor="start" font-weight="bold" textLength="105.5" lengthAdjust="spacingAndGlyphs">Target Y</text>
<text x="953.0" y="854.9" font-size="19.8" fill="#f2f2f2" text-anchor="start" font-weight="normal" textLength="109.7" lengthAdjust="spacingAndGlyphs">227.6651</text>
<text x="1075.6" y="854.9" font-size="19.8" fill="#f2f2f2" text-anchor="start" font-weight="normal" textLength="109.7" lengthAdjust="spacingAndGlyphs">223.6689</text>
<text x="1198.2" y="854.9" font-size="19.8" fill="#f2f2f2" text-anchor="start" font-weight="normal" textLength="109.7" lengthAdjust="spacingAndGlyphs">220.5984</text>
<text x="1320.8" y="854.9" font-size="19.8" fill="#f2f2f2" text-anchor="start" font-weight="normal" textLength="109.7" lengthAdjust="spacingAndGlyphs">218.1887</text>
<text x="1443.4" y="854.9" font-size="19.8" fill="#f2f2f2" text-anchor="start" font-weight="normal" textLength="109.7" lengthAdjust="spacingAndGlyphs">215.8590</text>
<rect x="722.5" y="863.1" width="837.5" height="29.8" fill="#404040"/>
<text x="743" y="884.6199999999999" font-size="19.5" fill="#f2f2f2" text-anchor="start" font-weight="bold" textLength="104.5" lengthAdjust="spacingAndGlyphs">ΔE 2000</text>
<text x="953.0" y="884.6199999999999" font-size="19.8" fill="#f2f2f2" text-anchor="start" font-weight="normal" textLength="80.2" lengthAdjust="spacingAndGlyphs">2.0670</text>
<text x="1075.6" y="884.6199999999999" font-size="19.8" fill="#f2f2f2" text-anchor="start" font-weight="normal" textLength="80.2" lengthAdjust="spacingAndGlyphs">2.2136</text>
<text x="1198.2" y="884.6199999999999" font-size="19.8" fill="#f2f2f2" text-anchor="start" font-weight="normal" textLength="80.2" lengthAdjust="spacingAndGlyphs">2.7577</text>
<text x="1320.8" y="884.6199999999999" font-size="19.8" fill="#f2f2f2" text-anchor="start" font-weight="normal" textLength="80.2" lengthAdjust="spacingAndGlyphs">3.4532</text>
<text x="1443.4" y="884.6199999999999" font-size="19.8" fill="#f2f2f2" text-anchor="start" font-weight="normal" textLength="80.2" lengthAdjust="spacingAndGlyphs">5.1313</text>
<rect x="722.5" y="892.8" width="837.5" height="29.8" fill="url(#tl)"/>
<text x="743" y="914.3399999999999" font-size="19.5" fill="#f2f2f2" text-anchor="start" font-weight="bold" textLength="83" lengthAdjust="spacingAndGlyphs">ΔE ITP</text>
<text x="953.0" y="914.3399999999999" font-size="19.8" fill="#f2f2f2" text-anchor="start" font-weight="normal" textLength="80.2" lengthAdjust="spacingAndGlyphs">3.0601</text>
<text x="1075.6" y="914.3399999999999" font-size="19.8" fill="#f2f2f2" text-anchor="start" font-weight="normal" textLength="80.2" lengthAdjust="spacingAndGlyphs">5.3582</text>
<text x="1198.2" y="914.3399999999999" font-size="19.8" fill="#f2f2f2" text-anchor="start" font-weight="normal" textLength="80.2" lengthAdjust="spacingAndGlyphs">9.6651</text>
<text x="1320.8" y="914.3399999999999" font-size="19.8" fill="#f2f2f2" text-anchor="start" font-weight="normal" textLength="95.0" lengthAdjust="spacingAndGlyphs">16.4386</text>
<text x="1443.4" y="914.3399999999999" font-size="19.8" fill="#f2f2f2" text-anchor="start" font-weight="normal" textLength="95.0" lengthAdjust="spacingAndGlyphs">30.2053</text>
<defs><linearGradient id="tb" x1="0" y1="0" x2="0" y2="1"><stop offset="0" stop-color="#474747"/><stop offset="1" stop-color="#232323"/></linearGradient><linearGradient id="bt" x1="0" y1="0" x2="0" y2="1"><stop offset="0" stop-color="#a8a8a8"/><stop offset="0.45" stop-color="#8a8a8a"/><stop offset="1" stop-color="#4e4e4e"/></linearGradient><linearGradient id="bs" x1="0" y1="0" x2="0" y2="1"><stop offset="0" stop-color="#1c1c1c"/><stop offset="0.65" stop-color="#1e1e1e"/><stop offset="1" stop-color="#363636"/></linearGradient><linearGradient id="nb" x1="0" y1="0" x2="0" y2="1"><stop offset="0" stop-color="#b4b4b4"/><stop offset="1" stop-color="#7a7a7a"/></linearGradient><linearGradient id="nb2" x1="0" y1="0" x2="0" y2="1"><stop offset="0" stop-color="#a0a0a0"/><stop offset="1" stop-color="#6a6a6a"/></linearGradient></defs>
<rect x="0" y="1063" width="1920" height="55" fill="url(#tb)"/>
<rect x="0" y="1116" width="1920" height="2" fill="#484c30"/>
<rect x="0" y="1063" width="36.5" height="53" rx="3" fill="url(#bt)"/>
<circle cx="16.7" cy="1071" r="6.3" fill="#5a5a5a"/><path d="M12.5 1073.5h8.5l-4.25-4.5z" fill="#111"/>
<rect x="2" y="1086" width="30" height="25.5" rx="2" fill="#ffff00"/>
<rect x="41.7" y="1063" width="130.5" height="53" rx="3" fill="url(#bt)"/>
<rect x="46.9" y="1068" width="121.0" height="31" rx="2.5" fill="#c2c2a4" stroke="#8a8a8a" stroke-width="1"/>
<text x="106.9" y="1112" font-size="10.5" fill="#2e2e2e" text-anchor="middle" font-weight="bold">20%</text>
<rect x="174.2" y="1063" width="130.5" height="53" rx="3" fill="url(#bt)"/>
<rect x="179.4" y="1068" width="121.0" height="31" rx="2.5" fill="#c2c288" stroke="#8a8a8a" stroke-width="1"/>
<text x="239.39999999999998" y="1112" font-size="10.5" fill="#2e2e2e" text-anchor="middle" font-weight="bold">40%</text>
<rect x="306.7" y="1063" width="130.5" height="53" rx="3" fill="url(#bt)"/>
<rect x="311.9" y="1068" width="121.0" height="31" rx="2.5" fill="#c2c26a" stroke="#8a8a8a" stroke-width="1"/>
<text x="371.9" y="1112" font-size="10.5" fill="#2e2e2e" text-anchor="middle" font-weight="bold">60%</text>
<rect x="438.7" y="1063" width="130.5" height="53" rx="3" fill="url(#bt)"/>
<rect x="443.9" y="1068" width="121.0" height="31" rx="2.5" fill="#c2c24a" stroke="#8a8a8a" stroke-width="1"/>
<text x="503.9" y="1112" font-size="10.5" fill="#2e2e2e" text-anchor="middle" font-weight="bold">80%</text>
<rect x="570.7" y="1063" width="130.5" height="53" rx="3" fill="url(#bs)"/>
<rect x="575.9" y="1068" width="121.0" height="31" rx="2.5" fill="#c4c400" stroke="#111" stroke-width="1"/>
<text x="635.9000000000001" y="1112" font-size="10.5" fill="#ffffff" text-anchor="middle" font-weight="bold">100%</text>
<rect x="1683" y="1063" width="237" height="26" fill="url(#nb2)"/>
<line x1="1724.0" y1="1063" x2="1724.0" y2="1089" stroke="#555" stroke-width="1.2"/>
<line x1="1763.2" y1="1063" x2="1763.2" y2="1089" stroke="#555" stroke-width="1.2"/>
<line x1="1802.4" y1="1063" x2="1802.4" y2="1089" stroke="#555" stroke-width="1.2"/>
<line x1="1842.5" y1="1063" x2="1842.5" y2="1089" stroke="#555" stroke-width="1.2"/>
<line x1="1881.7" y1="1063" x2="1881.7" y2="1089" stroke="#555" stroke-width="1.2"/>
<rect x="1642" y="1081" width="40.5" height="35" rx="3" fill="url(#nb2)"/>
<rect x="1650.5" y="1088" width="22" height="22" rx="3" fill="none" stroke="#1a1a1a" stroke-width="3"/>
<rect x="1656" y="1093.5" width="11" height="11" fill="#000"/>
<rect x="1684.5" y="1090" width="118" height="26" rx="3" fill="url(#nb)"/>
<rect x="1803" y="1090" width="117" height="26" rx="3" fill="url(#nb)"/>
<circle cx="1711.3" cy="1103" r="8" fill="#8c8c8c"/><circle cx="1896.3" cy="1103" r="8" fill="#8c8c8c"/>
<text x="1711.3" y="1108" font-size="15" fill="#222" text-anchor="middle" font-weight="normal">«</text>
<text x="1896.3" y="1108" font-size="15" fill="#222" text-anchor="middle" font-weight="normal">»</text>
<text x="1735" y="1109.3" font-size="19" fill="#2a2a2a" text-anchor="start" font-weight="normal" textLength="43" lengthAdjust="spacingAndGlyphs">Back</text>
<text x="1827" y="1109.3" font-size="19" fill="#2a2a2a" text-anchor="start" font-weight="normal" textLength="45" lengthAdjust="spacingAndGlyphs">Next</text>
<g opacity="0.62" stroke-linejoin="round" stroke-linecap="round">
<path d="M1586,1046 L1630,1055.5 L1631,1082 M1586,1046 L1587.5,1090 L1614.5,1102.5 L1662,1088" fill="none" stroke="#d8d8d8" stroke-width="7"/>
<path d="M1596,1084.8 L1631,1082 M1634.5,1083 L1662,1088" fill="none" stroke="#d8d8d8" stroke-width="3.5"/>
<path d="M1597.5,1061.5 Q1603,1057 1611,1079 L1635,1046.5" fill="none" stroke="#d8d8d8" stroke-width="6"/>
<path d="M1586,1046 L1630,1055.5 L1631,1082 M1586,1046 L1587.5,1090 L1614.5,1102.5 L1662,1088" fill="none" stroke="#9a1c1c" stroke-width="4.5"/>
<path d="M1596,1084.8 L1631,1082 M1634.5,1083 L1662,1088" fill="none" stroke="#9a1c1c" stroke-width="1.8"/>
<path d="M1597.5,1061.5 Q1603,1057 1611,1079 L1635,1046.5" fill="none" stroke="#1e1e1e" stroke-width="3.5"/>
<text x="1636.5" y="1079.5" font-size="30.5" fill="#a82a2a" text-anchor="start" font-weight="bold" textLength="171" lengthAdjust="spacingAndGlyphs" stroke="#e0e0e0" stroke-width="1.6" paint-order="stroke">NOTEBOOK</text>
<text x="1808" y="1079.5" font-size="30.5" fill="#2e2e2e" text-anchor="start" font-weight="bold" textLength="103" lengthAdjust="spacingAndGlyphs" stroke="#e8e8e8" stroke-width="1.6" paint-order="stroke">CHECK</text>
</g>
</svg></body></html>
